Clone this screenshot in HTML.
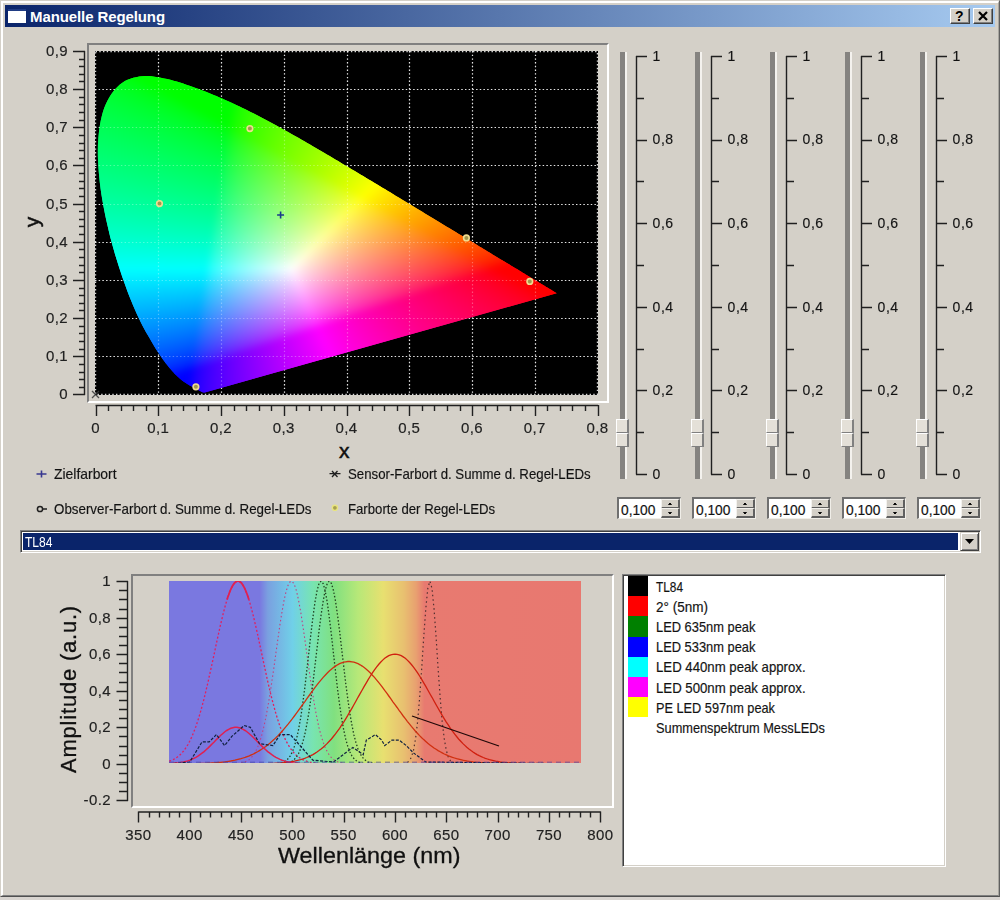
<!DOCTYPE html><html><head><meta charset="utf-8"><style>
html,body{margin:0;padding:0}
body{width:1000px;height:900px;background:#d4d0c8;position:relative;overflow:hidden;font-family:"Liberation Sans", sans-serif;color:#000}
.abs{position:absolute}
.t{position:absolute;white-space:nowrap;line-height:1}
svg{position:absolute;overflow:visible}
</style></head><body>

<div class="abs" style="left:0;top:0;width:1000px;height:897px;box-sizing:border-box;border-left:1px solid #d4d0c8;border-top:1px solid #d4d0c8;border-right:1px solid #606060;border-bottom:1px solid #505050"></div>
<div class="abs" style="left:1px;top:1px;width:998px;height:895px;box-sizing:border-box;border-left:2px solid #fff;border-top:2px solid #fff;border-right:1px solid #a8a6a0;border-bottom:1px solid #808080"></div>
<div class="abs" style="left:0;top:897px;width:1000px;height:3px;background:#d8d4d0"></div>
<div class="abs" style="left:5px;top:5px;width:990px;height:22px;background:linear-gradient(to right,#0a246a 0%,#a6caf0 100%)"></div>
<div class="abs" style="left:8px;top:9px;width:18px;height:14px;background:#fff;border-top:2px solid #203c84;box-sizing:border-box"></div>
<div class="t" style="left:30px;top:9px;font-size:15px;font-weight:bold;color:#fff;letter-spacing:-0.099px">Manuelle Regelung</div>
<div class="abs" style="left:950px;top:8px;width:20px;height:16px;box-sizing:border-box;background:#d4d0c8;border-top:1px solid #fff;border-left:1px solid #fff;border-right:1px solid #404040;border-bottom:1px solid #404040;box-shadow:inset -1px -1px 0 #808080"></div>
<div class="abs" style="left:973px;top:8px;width:20px;height:16px;box-sizing:border-box;background:#d4d0c8;border-top:1px solid #fff;border-left:1px solid #fff;border-right:1px solid #404040;border-bottom:1px solid #404040;box-shadow:inset -1px -1px 0 #808080"></div>
<div class="t" style="left:955px;top:9px;font-size:14px;font-weight:bold">?</div>
<svg style="left:973px;top:8px" width="20" height="16"><path d="M6 4 L14 12 M14 4 L6 12" stroke="#000" stroke-width="2.2"/></svg>
<div class="abs" style="left:87px;top:43px;width:522px;height:360px;box-sizing:border-box;border-top:2px solid #808080;border-left:2px solid #808080;border-right:2px solid #fff;border-bottom:2px solid #fff"></div>
<div class="abs" style="left:95px;top:51px;width:503px;height:344px;background:#000"></div>
<svg style="left:95px;top:51px" width="503" height="344"><path d="M63.5 0 V344 M126.5 0 V344 M189.5 0 V344 M252.5 0 V344 M314.5 0 V344 M377.5 0 V344 M440.5 0 V344 M0 305.5 H503 M0 267.5 H503 M0 229.5 H503 M0 191.5 H503 M0 153.5 H503 M0 114.5 H503 M0 76.5 H503 M0 38.5 H503" stroke="#fff" stroke-width="1.2" stroke-dasharray="1.4 2.3" opacity="0.85"/><rect x="0.6" y="0.6" width="501.8" height="342.8" fill="none" stroke="#fff" stroke-width="1.2" stroke-dasharray="1.4 2.3" opacity="0.85"/></svg>
<svg style="left:95px;top:51px" width="503" height="344"><defs><clipPath id="cl"><path d="M109.8,341.5 L109.7,341.5 L109.7,341.5 L109.6,341.5 L109.5,341.5 L109.5,341.5 L109.4,341.6 L109.3,341.6 L109.3,341.6 L109.2,341.6 L109.2,341.6 L109.1,341.6 L109.1,341.6 L109.0,341.6 L109.0,341.6 L108.9,341.6 L108.8,341.6 L108.7,341.6 L108.7,341.6 L108.6,341.5 L108.5,341.5 L108.4,341.5 L108.3,341.5 L108.2,341.5 L108.1,341.5 L108.0,341.4 L107.9,341.4 L107.8,341.4 L107.7,341.3 L107.7,341.3 L107.6,341.3 L107.5,341.2 L107.4,341.2 L107.3,341.1 L107.2,341.1 L107.1,341.1 L107.0,341.0 L106.9,340.9 L106.8,340.9 L106.6,340.8 L106.5,340.8 L106.4,340.7 L106.2,340.6 L106.1,340.6 L105.9,340.5 L105.8,340.4 L105.6,340.3 L105.4,340.2 L105.2,340.1 L105.1,340.0 L104.9,339.9 L104.7,339.8 L104.5,339.7 L104.3,339.6 L104.1,339.5 L103.9,339.4 L103.7,339.2 L103.4,339.1 L103.2,339.0 L103.0,338.9 L102.7,338.7 L102.5,338.6 L102.2,338.4 L101.9,338.3 L101.6,338.1 L101.3,338.0 L101.0,337.8 L100.6,337.6 L100.3,337.4 L99.9,337.3 L99.6,337.1 L99.2,336.9 L98.8,336.6 L98.4,336.4 L98.0,336.2 L97.6,336.0 L97.1,335.8 L96.7,335.5 L96.2,335.3 L95.8,335.0 L95.3,334.7 L94.8,334.4 L94.3,334.2 L93.7,333.8 L93.2,333.5 L92.6,333.2 L92.1,332.8 L91.5,332.5 L90.9,332.1 L90.3,331.7 L89.6,331.2 L89.0,330.8 L88.4,330.4 L87.7,329.9 L87.0,329.4 L86.3,328.8 L85.5,328.2 L84.7,327.5 L83.9,326.8 L83.1,326.0 L82.2,325.2 L81.3,324.3 L80.4,323.4 L79.4,322.4 L78.4,321.3 L77.4,320.2 L76.3,319.0 L75.2,317.8 L74.1,316.5 L73.0,315.1 L71.8,313.6 L70.5,312.0 L69.3,310.3 L68.0,308.5 L66.6,306.5 L65.3,304.6 L63.9,302.4 L62.4,300.2 L60.9,297.9 L59.4,295.4 L57.8,292.8 L56.2,290.0 L54.5,287.1 L52.7,284.1 L50.9,280.9 L49.1,277.6 L47.3,274.2 L45.4,270.6 L43.6,266.8 L41.8,262.9 L40.0,258.7 L38.1,254.4 L36.3,250.0 L34.4,245.4 L32.6,240.7 L30.8,235.8 L29.0,230.8 L27.2,225.7 L25.4,220.3 L23.6,214.8 L21.8,209.1 L20.1,203.4 L18.4,197.6 L16.8,191.7 L15.2,185.9 L13.8,180.0 L12.4,174.1 L11.0,168.0 L9.8,161.9 L8.6,155.8 L7.5,149.8 L6.5,143.8 L5.6,137.9 L4.9,132.2 L4.3,126.4 L3.7,120.7 L3.3,115.0 L3.0,109.4 L2.8,104.0 L2.8,98.7 L2.9,93.5 L3.2,88.5 L3.7,83.6 L4.2,78.7 L4.9,74.0 L5.8,69.5 L6.8,65.1 L7.9,61.0 L9.2,57.1 L10.7,53.5 L12.3,50.0 L14.1,46.7 L16.1,43.6 L18.1,40.7 L20.3,38.1 L22.6,35.7 L24.9,33.5 L27.4,31.7 L29.9,30.1 L32.6,28.8 L35.4,27.7 L38.3,26.8 L41.2,26.2 L44.2,25.6 L47.1,25.2 L50.1,25.0 L53.2,25.0 L56.3,25.3 L59.5,25.7 L62.6,26.2 L65.8,26.8 L69.0,27.5 L72.2,28.1 L75.3,28.8 L78.5,29.7 L81.7,30.6 L84.9,31.6 L88.1,32.6 L91.3,33.7 L94.5,34.8 L97.6,35.9 L100.7,36.9 L103.7,38.1 L106.7,39.2 L109.7,40.3 L112.7,41.5 L115.7,42.7 L118.6,43.9 L121.6,45.1 L124.5,46.4 L127.4,47.6 L130.3,48.9 L133.2,50.2 L136.0,51.5 L138.9,52.9 L141.7,54.2 L144.6,55.6 L147.5,56.9 L150.3,58.3 L153.2,59.7 L156.0,61.2 L158.8,62.6 L161.7,64.1 L164.5,65.5 L167.3,67.0 L170.1,68.5 L173.0,70.0 L175.8,71.5 L178.6,73.0 L181.4,74.6 L184.2,76.1 L187.0,77.7 L189.8,79.2 L192.6,80.8 L195.4,82.4 L198.2,83.9 L201.0,85.5 L203.8,87.1 L206.6,88.7 L209.4,90.3 L212.2,92.0 L215.0,93.6 L217.8,95.2 L220.6,96.9 L223.4,98.5 L226.2,100.1 L229.0,101.8 L231.9,103.4 L234.7,105.1 L237.5,106.7 L240.3,108.4 L243.1,110.1 L245.8,111.7 L248.6,113.4 L251.4,115.1 L254.2,116.7 L257.0,118.4 L259.8,120.1 L262.6,121.7 L265.4,123.4 L268.1,125.1 L270.9,126.7 L273.7,128.4 L276.5,130.1 L279.2,131.7 L282.0,133.4 L284.7,135.0 L287.4,136.7 L290.2,138.3 L292.9,140.0 L295.6,141.6 L298.3,143.3 L301.0,144.9 L303.7,146.5 L306.3,148.1 L309.0,149.7 L311.7,151.4 L314.3,153.0 L316.9,154.6 L319.5,156.1 L322.1,157.7 L324.7,159.3 L327.3,160.8 L329.9,162.4 L332.4,163.9 L334.9,165.5 L337.5,167.0 L339.9,168.5 L342.4,170.0 L344.9,171.5 L347.3,173.0 L349.7,174.4 L352.1,175.9 L354.5,177.3 L356.9,178.7 L359.2,180.1 L361.5,181.5 L363.8,182.9 L366.0,184.3 L368.2,185.6 L370.4,187.0 L372.6,188.3 L374.7,189.6 L376.8,190.8 L378.9,192.1 L380.9,193.3 L382.9,194.5 L384.8,195.7 L386.7,196.8 L388.6,198.0 L390.4,199.1 L392.2,200.2 L394.0,201.3 L395.8,202.3 L397.5,203.4 L399.2,204.4 L400.9,205.4 L402.6,206.4 L404.2,207.4 L405.8,208.4 L407.3,209.3 L408.8,210.2 L410.3,211.1 L411.7,212.0 L413.1,212.8 L414.5,213.6 L415.8,214.4 L417.1,215.2 L418.4,215.9 L419.6,216.7 L420.8,217.4 L422.0,218.1 L423.1,218.8 L424.2,219.5 L425.3,220.1 L426.3,220.8 L427.3,221.4 L428.3,222.0 L429.3,222.6 L430.2,223.2 L431.1,223.7 L432.0,224.2 L432.8,224.8 L433.7,225.3 L434.5,225.8 L435.3,226.2 L436.0,226.7 L436.8,227.1 L437.5,227.6 L438.2,228.0 L438.9,228.4 L439.5,228.8 L440.2,229.2 L440.8,229.6 L441.4,229.9 L442.0,230.3 L442.6,230.6 L443.2,231.0 L443.7,231.3 L444.2,231.7 L444.8,232.0 L445.3,232.3 L445.8,232.6 L446.3,232.9 L446.8,233.2 L447.3,233.5 L447.7,233.8 L448.2,234.0 L448.6,234.3 L449.0,234.6 L449.4,234.8 L449.8,235.0 L450.1,235.2 L450.5,235.5 L450.9,235.7 L451.3,235.9 L451.7,236.2 L452.2,236.5 L452.8,236.8 L453.4,237.2 L454.0,237.5 L454.6,237.9 L455.1,238.2 L455.7,238.6 L456.1,238.8 L456.5,239.1 L456.9,239.3 L457.2,239.5 L457.5,239.7 L457.8,239.9 L458.1,240.0 L458.4,240.2 L458.6,240.4 L458.9,240.5 L459.2,240.7 L459.5,240.9 L459.8,241.1 L460.1,241.2 L460.3,241.4 L460.6,241.5 L460.8,241.7 L461.0,241.8 L461.1,241.9 L461.2,241.9 L461.3,242.0 L461.4,242.0 L461.5,242.1 L461.5,242.1 L461.6,242.2Z"/></clipPath><filter id="bl" x="0" y="0" width="1" height="1"><feGaussianBlur stdDeviation="5"/></filter></defs><g clip-path="url(#cl)"><g filter="url(#bl)"><rect x="-1" y="-1" width="12" height="12" fill="#00ff01"/><rect x="9" y="-1" width="12" height="12" fill="#00ff00"/><rect x="19" y="-1" width="12" height="12" fill="#00ff00"/><rect x="29" y="-1" width="12" height="12" fill="#00ff00"/><rect x="39" y="-1" width="12" height="12" fill="#00ff00"/><rect x="49" y="-1" width="12" height="12" fill="#00ff00"/><rect x="59" y="-1" width="12" height="12" fill="#00ff00"/><rect x="69" y="-1" width="12" height="12" fill="#00ff00"/><rect x="79" y="-1" width="12" height="12" fill="#00ff00"/><rect x="89" y="-1" width="12" height="12" fill="#00ff00"/><rect x="99" y="-1" width="12" height="12" fill="#00ff00"/><rect x="109" y="-1" width="12" height="12" fill="#00ff00"/><rect x="119" y="-1" width="12" height="12" fill="#00ff00"/><rect x="129" y="-1" width="12" height="12" fill="#00ff00"/><rect x="139" y="-1" width="12" height="12" fill="#00ff00"/><rect x="149" y="-1" width="12" height="12" fill="#00ff00"/><rect x="159" y="-1" width="12" height="12" fill="#16ff00"/><rect x="169" y="-1" width="12" height="12" fill="#26ff00"/><rect x="179" y="-1" width="12" height="12" fill="#32ff00"/><rect x="189" y="-1" width="12" height="12" fill="#3eff00"/><rect x="199" y="-1" width="12" height="12" fill="#48ff00"/><rect x="209" y="-1" width="12" height="12" fill="#51ff00"/><rect x="219" y="-1" width="12" height="12" fill="#5aff00"/><rect x="229" y="-1" width="12" height="12" fill="#63ff00"/><rect x="239" y="-1" width="12" height="12" fill="#6bff00"/><rect x="249" y="-1" width="12" height="12" fill="#73ff00"/><rect x="259" y="-1" width="12" height="12" fill="#7bff00"/><rect x="269" y="-1" width="12" height="12" fill="#82ff00"/><rect x="279" y="-1" width="12" height="12" fill="#89ff00"/><rect x="289" y="-1" width="12" height="12" fill="#91ff00"/><rect x="299" y="-1" width="12" height="12" fill="#98ff00"/><rect x="309" y="-1" width="12" height="12" fill="#9fff00"/><rect x="319" y="-1" width="12" height="12" fill="#a6ff00"/><rect x="329" y="-1" width="12" height="12" fill="#adff00"/><rect x="339" y="-1" width="12" height="12" fill="#b4ff00"/><rect x="349" y="-1" width="12" height="12" fill="#bbff00"/><rect x="359" y="-1" width="12" height="12" fill="#c2ff00"/><rect x="369" y="-1" width="12" height="12" fill="#c9ff00"/><rect x="379" y="-1" width="12" height="12" fill="#d0ff00"/><rect x="389" y="-1" width="12" height="12" fill="#d7ff00"/><rect x="399" y="-1" width="12" height="12" fill="#deff00"/><rect x="409" y="-1" width="12" height="12" fill="#e5ff00"/><rect x="419" y="-1" width="12" height="12" fill="#ecff00"/><rect x="429" y="-1" width="12" height="12" fill="#f3ff00"/><rect x="439" y="-1" width="12" height="12" fill="#faff00"/><rect x="449" y="-1" width="12" height="12" fill="#fffd00"/><rect x="459" y="-1" width="12" height="12" fill="#fff600"/><rect x="469" y="-1" width="12" height="12" fill="#ffef00"/><rect x="479" y="-1" width="12" height="12" fill="#ffe900"/><rect x="489" y="-1" width="12" height="12" fill="#ffe200"/><rect x="499" y="-1" width="12" height="12" fill="#ffdd00"/><rect x="-1" y="9" width="12" height="12" fill="#00ff12"/><rect x="9" y="9" width="12" height="12" fill="#00ff09"/><rect x="19" y="9" width="12" height="12" fill="#00ff00"/><rect x="29" y="9" width="12" height="12" fill="#00ff00"/><rect x="39" y="9" width="12" height="12" fill="#00ff00"/><rect x="49" y="9" width="12" height="12" fill="#00ff00"/><rect x="59" y="9" width="12" height="12" fill="#00ff00"/><rect x="69" y="9" width="12" height="12" fill="#00ff00"/><rect x="79" y="9" width="12" height="12" fill="#00ff00"/><rect x="89" y="9" width="12" height="12" fill="#00ff00"/><rect x="99" y="9" width="12" height="12" fill="#00ff00"/><rect x="109" y="9" width="12" height="12" fill="#00ff00"/><rect x="119" y="9" width="12" height="12" fill="#00ff00"/><rect x="129" y="9" width="12" height="12" fill="#00ff00"/><rect x="139" y="9" width="12" height="12" fill="#00ff00"/><rect x="149" y="9" width="12" height="12" fill="#0aff00"/><rect x="159" y="9" width="12" height="12" fill="#1eff00"/><rect x="169" y="9" width="12" height="12" fill="#2dff00"/><rect x="179" y="9" width="12" height="12" fill="#39ff00"/><rect x="189" y="9" width="12" height="12" fill="#44ff00"/><rect x="199" y="9" width="12" height="12" fill="#4eff00"/><rect x="209" y="9" width="12" height="12" fill="#57ff00"/><rect x="219" y="9" width="12" height="12" fill="#60ff00"/><rect x="229" y="9" width="12" height="12" fill="#69ff00"/><rect x="239" y="9" width="12" height="12" fill="#71ff00"/><rect x="249" y="9" width="12" height="12" fill="#79ff00"/><rect x="259" y="9" width="12" height="12" fill="#81ff00"/><rect x="269" y="9" width="12" height="12" fill="#88ff00"/><rect x="279" y="9" width="12" height="12" fill="#90ff00"/><rect x="289" y="9" width="12" height="12" fill="#97ff00"/><rect x="299" y="9" width="12" height="12" fill="#9eff00"/><rect x="309" y="9" width="12" height="12" fill="#a6ff00"/><rect x="319" y="9" width="12" height="12" fill="#adff00"/><rect x="329" y="9" width="12" height="12" fill="#b4ff00"/><rect x="339" y="9" width="12" height="12" fill="#bbff00"/><rect x="349" y="9" width="12" height="12" fill="#c2ff00"/><rect x="359" y="9" width="12" height="12" fill="#caff00"/><rect x="369" y="9" width="12" height="12" fill="#d1ff00"/><rect x="379" y="9" width="12" height="12" fill="#d8ff00"/><rect x="389" y="9" width="12" height="12" fill="#dfff00"/><rect x="399" y="9" width="12" height="12" fill="#e6ff00"/><rect x="409" y="9" width="12" height="12" fill="#eeff00"/><rect x="419" y="9" width="12" height="12" fill="#f5ff00"/><rect x="429" y="9" width="12" height="12" fill="#fcff00"/><rect x="439" y="9" width="12" height="12" fill="#fffa00"/><rect x="449" y="9" width="12" height="12" fill="#fff300"/><rect x="459" y="9" width="12" height="12" fill="#ffec00"/><rect x="469" y="9" width="12" height="12" fill="#ffe600"/><rect x="479" y="9" width="12" height="12" fill="#ffe000"/><rect x="489" y="9" width="12" height="12" fill="#ffda00"/><rect x="499" y="9" width="12" height="12" fill="#ffd400"/><rect x="-1" y="19" width="12" height="12" fill="#00ff21"/><rect x="9" y="19" width="12" height="12" fill="#00ff1a"/><rect x="19" y="19" width="12" height="12" fill="#00ff12"/><rect x="29" y="19" width="12" height="12" fill="#00ff08"/><rect x="39" y="19" width="12" height="12" fill="#00ff00"/><rect x="49" y="19" width="12" height="12" fill="#00ff00"/><rect x="59" y="19" width="12" height="12" fill="#00ff00"/><rect x="69" y="19" width="12" height="12" fill="#00ff00"/><rect x="79" y="19" width="12" height="12" fill="#00ff00"/><rect x="89" y="19" width="12" height="12" fill="#00ff00"/><rect x="99" y="19" width="12" height="12" fill="#00ff00"/><rect x="109" y="19" width="12" height="12" fill="#00ff00"/><rect x="119" y="19" width="12" height="12" fill="#00ff00"/><rect x="129" y="19" width="12" height="12" fill="#00ff00"/><rect x="139" y="19" width="12" height="12" fill="#00ff00"/><rect x="149" y="19" width="12" height="12" fill="#15ff00"/><rect x="159" y="19" width="12" height="12" fill="#26ff00"/><rect x="169" y="19" width="12" height="12" fill="#34ff00"/><rect x="179" y="19" width="12" height="12" fill="#3fff00"/><rect x="189" y="19" width="12" height="12" fill="#4aff00"/><rect x="199" y="19" width="12" height="12" fill="#54ff00"/><rect x="209" y="19" width="12" height="12" fill="#5dff00"/><rect x="219" y="19" width="12" height="12" fill="#66ff00"/><rect x="229" y="19" width="12" height="12" fill="#6fff00"/><rect x="239" y="19" width="12" height="12" fill="#77ff00"/><rect x="249" y="19" width="12" height="12" fill="#7fff00"/><rect x="259" y="19" width="12" height="12" fill="#87ff00"/><rect x="269" y="19" width="12" height="12" fill="#8fff00"/><rect x="279" y="19" width="12" height="12" fill="#96ff00"/><rect x="289" y="19" width="12" height="12" fill="#9eff00"/><rect x="299" y="19" width="12" height="12" fill="#a5ff00"/><rect x="309" y="19" width="12" height="12" fill="#adff00"/><rect x="319" y="19" width="12" height="12" fill="#b4ff00"/><rect x="329" y="19" width="12" height="12" fill="#bcff00"/><rect x="339" y="19" width="12" height="12" fill="#c3ff00"/><rect x="349" y="19" width="12" height="12" fill="#caff00"/><rect x="359" y="19" width="12" height="12" fill="#d2ff00"/><rect x="369" y="19" width="12" height="12" fill="#d9ff00"/><rect x="379" y="19" width="12" height="12" fill="#e1ff00"/><rect x="389" y="19" width="12" height="12" fill="#e8ff00"/><rect x="399" y="19" width="12" height="12" fill="#f0ff00"/><rect x="409" y="19" width="12" height="12" fill="#f7ff00"/><rect x="419" y="19" width="12" height="12" fill="#ffff00"/><rect x="429" y="19" width="12" height="12" fill="#fff800"/><rect x="439" y="19" width="12" height="12" fill="#fff000"/><rect x="449" y="19" width="12" height="12" fill="#ffea00"/><rect x="459" y="19" width="12" height="12" fill="#ffe300"/><rect x="469" y="19" width="12" height="12" fill="#ffdd00"/><rect x="479" y="19" width="12" height="12" fill="#ffd700"/><rect x="489" y="19" width="12" height="12" fill="#ffd100"/><rect x="499" y="19" width="12" height="12" fill="#ffcb00"/><rect x="-1" y="29" width="12" height="12" fill="#00ff2d"/><rect x="9" y="29" width="12" height="12" fill="#00ff27"/><rect x="19" y="29" width="12" height="12" fill="#00ff21"/><rect x="29" y="29" width="12" height="12" fill="#00ff1a"/><rect x="39" y="29" width="12" height="12" fill="#00ff12"/><rect x="49" y="29" width="12" height="12" fill="#00ff07"/><rect x="59" y="29" width="12" height="12" fill="#00ff00"/><rect x="69" y="29" width="12" height="12" fill="#00ff00"/><rect x="79" y="29" width="12" height="12" fill="#00ff00"/><rect x="89" y="29" width="12" height="12" fill="#00ff00"/><rect x="99" y="29" width="12" height="12" fill="#00ff00"/><rect x="109" y="29" width="12" height="12" fill="#00ff00"/><rect x="119" y="29" width="12" height="12" fill="#00ff00"/><rect x="129" y="29" width="12" height="12" fill="#00ff00"/><rect x="139" y="29" width="12" height="12" fill="#08ff00"/><rect x="149" y="29" width="12" height="12" fill="#1eff00"/><rect x="159" y="29" width="12" height="12" fill="#2eff00"/><rect x="169" y="29" width="12" height="12" fill="#3aff00"/><rect x="179" y="29" width="12" height="12" fill="#46ff00"/><rect x="189" y="29" width="12" height="12" fill="#50ff00"/><rect x="199" y="29" width="12" height="12" fill="#5aff00"/><rect x="209" y="29" width="12" height="12" fill="#63ff00"/><rect x="219" y="29" width="12" height="12" fill="#6cff00"/><rect x="229" y="29" width="12" height="12" fill="#75ff00"/><rect x="239" y="29" width="12" height="12" fill="#7dff00"/><rect x="249" y="29" width="12" height="12" fill="#86ff00"/><rect x="259" y="29" width="12" height="12" fill="#8eff00"/><rect x="269" y="29" width="12" height="12" fill="#96ff00"/><rect x="279" y="29" width="12" height="12" fill="#9dff00"/><rect x="289" y="29" width="12" height="12" fill="#a5ff00"/><rect x="299" y="29" width="12" height="12" fill="#adff00"/><rect x="309" y="29" width="12" height="12" fill="#b4ff00"/><rect x="319" y="29" width="12" height="12" fill="#bcff00"/><rect x="329" y="29" width="12" height="12" fill="#c4ff00"/><rect x="339" y="29" width="12" height="12" fill="#cbff00"/><rect x="349" y="29" width="12" height="12" fill="#d3ff00"/><rect x="359" y="29" width="12" height="12" fill="#dbff00"/><rect x="369" y="29" width="12" height="12" fill="#e2ff00"/><rect x="379" y="29" width="12" height="12" fill="#eaff00"/><rect x="389" y="29" width="12" height="12" fill="#f2ff00"/><rect x="399" y="29" width="12" height="12" fill="#faff00"/><rect x="409" y="29" width="12" height="12" fill="#fffd00"/><rect x="419" y="29" width="12" height="12" fill="#fff500"/><rect x="429" y="29" width="12" height="12" fill="#ffee00"/><rect x="439" y="29" width="12" height="12" fill="#ffe700"/><rect x="449" y="29" width="12" height="12" fill="#ffe000"/><rect x="459" y="29" width="12" height="12" fill="#ffda00"/><rect x="469" y="29" width="12" height="12" fill="#ffd300"/><rect x="479" y="29" width="12" height="12" fill="#ffcd00"/><rect x="489" y="29" width="12" height="12" fill="#ffc800"/><rect x="499" y="29" width="12" height="12" fill="#ffc200"/><rect x="-1" y="39" width="12" height="12" fill="#00ff38"/><rect x="9" y="39" width="12" height="12" fill="#00ff33"/><rect x="19" y="39" width="12" height="12" fill="#00ff2e"/><rect x="29" y="39" width="12" height="12" fill="#00ff28"/><rect x="39" y="39" width="12" height="12" fill="#00ff22"/><rect x="49" y="39" width="12" height="12" fill="#00ff1a"/><rect x="59" y="39" width="12" height="12" fill="#00ff11"/><rect x="69" y="39" width="12" height="12" fill="#00ff05"/><rect x="79" y="39" width="12" height="12" fill="#00ff00"/><rect x="89" y="39" width="12" height="12" fill="#00ff00"/><rect x="99" y="39" width="12" height="12" fill="#00ff00"/><rect x="109" y="39" width="12" height="12" fill="#00ff00"/><rect x="119" y="39" width="12" height="12" fill="#00ff00"/><rect x="129" y="39" width="12" height="12" fill="#00ff00"/><rect x="139" y="39" width="12" height="12" fill="#14ff00"/><rect x="149" y="39" width="12" height="12" fill="#27ff00"/><rect x="159" y="39" width="12" height="12" fill="#35ff00"/><rect x="169" y="39" width="12" height="12" fill="#41ff00"/><rect x="179" y="39" width="12" height="12" fill="#4cff00"/><rect x="189" y="39" width="12" height="12" fill="#57ff00"/><rect x="199" y="39" width="12" height="12" fill="#61ff00"/><rect x="209" y="39" width="12" height="12" fill="#6aff00"/><rect x="219" y="39" width="12" height="12" fill="#73ff00"/><rect x="229" y="39" width="12" height="12" fill="#7cff00"/><rect x="239" y="39" width="12" height="12" fill="#84ff00"/><rect x="249" y="39" width="12" height="12" fill="#8cff00"/><rect x="259" y="39" width="12" height="12" fill="#95ff00"/><rect x="269" y="39" width="12" height="12" fill="#9dff00"/><rect x="279" y="39" width="12" height="12" fill="#a5ff00"/><rect x="289" y="39" width="12" height="12" fill="#adff00"/><rect x="299" y="39" width="12" height="12" fill="#b5ff00"/><rect x="309" y="39" width="12" height="12" fill="#bcff00"/><rect x="319" y="39" width="12" height="12" fill="#c4ff00"/><rect x="329" y="39" width="12" height="12" fill="#ccff00"/><rect x="339" y="39" width="12" height="12" fill="#d4ff00"/><rect x="349" y="39" width="12" height="12" fill="#dcff00"/><rect x="359" y="39" width="12" height="12" fill="#e4ff00"/><rect x="369" y="39" width="12" height="12" fill="#ecff00"/><rect x="379" y="39" width="12" height="12" fill="#f4ff00"/><rect x="389" y="39" width="12" height="12" fill="#fcff00"/><rect x="399" y="39" width="12" height="12" fill="#fffa00"/><rect x="409" y="39" width="12" height="12" fill="#fff200"/><rect x="419" y="39" width="12" height="12" fill="#ffeb00"/><rect x="429" y="39" width="12" height="12" fill="#ffe400"/><rect x="439" y="39" width="12" height="12" fill="#ffdd00"/><rect x="449" y="39" width="12" height="12" fill="#ffd600"/><rect x="459" y="39" width="12" height="12" fill="#ffd000"/><rect x="469" y="39" width="12" height="12" fill="#ffca00"/><rect x="479" y="39" width="12" height="12" fill="#ffc400"/><rect x="489" y="39" width="12" height="12" fill="#ffbf00"/><rect x="499" y="39" width="12" height="12" fill="#ffb900"/><rect x="-1" y="49" width="12" height="12" fill="#00ff42"/><rect x="9" y="49" width="12" height="12" fill="#00ff3e"/><rect x="19" y="49" width="12" height="12" fill="#00ff39"/><rect x="29" y="49" width="12" height="12" fill="#00ff34"/><rect x="39" y="49" width="12" height="12" fill="#00ff2f"/><rect x="49" y="49" width="12" height="12" fill="#00ff29"/><rect x="59" y="49" width="12" height="12" fill="#00ff22"/><rect x="69" y="49" width="12" height="12" fill="#00ff1a"/><rect x="79" y="49" width="12" height="12" fill="#00ff11"/><rect x="89" y="49" width="12" height="12" fill="#00ff04"/><rect x="99" y="49" width="12" height="12" fill="#00ff00"/><rect x="109" y="49" width="12" height="12" fill="#00ff00"/><rect x="119" y="49" width="12" height="12" fill="#00ff00"/><rect x="129" y="49" width="12" height="12" fill="#00ff00"/><rect x="139" y="49" width="12" height="12" fill="#1cff00"/><rect x="149" y="49" width="12" height="12" fill="#2fff00"/><rect x="159" y="49" width="12" height="12" fill="#3cff00"/><rect x="169" y="49" width="12" height="12" fill="#48ff00"/><rect x="179" y="49" width="12" height="12" fill="#53ff00"/><rect x="189" y="49" width="12" height="12" fill="#5dff00"/><rect x="199" y="49" width="12" height="12" fill="#67ff00"/><rect x="209" y="49" width="12" height="12" fill="#71ff00"/><rect x="219" y="49" width="12" height="12" fill="#7aff00"/><rect x="229" y="49" width="12" height="12" fill="#83ff00"/><rect x="239" y="49" width="12" height="12" fill="#8bff00"/><rect x="249" y="49" width="12" height="12" fill="#94ff00"/><rect x="259" y="49" width="12" height="12" fill="#9cff00"/><rect x="269" y="49" width="12" height="12" fill="#a4ff00"/><rect x="279" y="49" width="12" height="12" fill="#adff00"/><rect x="289" y="49" width="12" height="12" fill="#b5ff00"/><rect x="299" y="49" width="12" height="12" fill="#bdff00"/><rect x="309" y="49" width="12" height="12" fill="#c5ff00"/><rect x="319" y="49" width="12" height="12" fill="#cdff00"/><rect x="329" y="49" width="12" height="12" fill="#d5ff00"/><rect x="339" y="49" width="12" height="12" fill="#deff00"/><rect x="349" y="49" width="12" height="12" fill="#e6ff00"/><rect x="359" y="49" width="12" height="12" fill="#eeff00"/><rect x="369" y="49" width="12" height="12" fill="#f6ff00"/><rect x="379" y="49" width="12" height="12" fill="#ffff00"/><rect x="389" y="49" width="12" height="12" fill="#fff700"/><rect x="399" y="49" width="12" height="12" fill="#ffef00"/><rect x="409" y="49" width="12" height="12" fill="#ffe700"/><rect x="419" y="49" width="12" height="12" fill="#ffe000"/><rect x="429" y="49" width="12" height="12" fill="#ffd900"/><rect x="439" y="49" width="12" height="12" fill="#ffd300"/><rect x="449" y="49" width="12" height="12" fill="#ffcc00"/><rect x="459" y="49" width="12" height="12" fill="#ffc600"/><rect x="469" y="49" width="12" height="12" fill="#ffc100"/><rect x="479" y="49" width="12" height="12" fill="#ffbb00"/><rect x="489" y="49" width="12" height="12" fill="#ffb500"/><rect x="499" y="49" width="12" height="12" fill="#ffb000"/><rect x="-1" y="59" width="12" height="12" fill="#00ff4c"/><rect x="9" y="59" width="12" height="12" fill="#00ff48"/><rect x="19" y="59" width="12" height="12" fill="#00ff44"/><rect x="29" y="59" width="12" height="12" fill="#00ff3f"/><rect x="39" y="59" width="12" height="12" fill="#00ff3b"/><rect x="49" y="59" width="12" height="12" fill="#00ff36"/><rect x="59" y="59" width="12" height="12" fill="#00ff30"/><rect x="69" y="59" width="12" height="12" fill="#00ff2a"/><rect x="79" y="59" width="12" height="12" fill="#00ff23"/><rect x="89" y="59" width="12" height="12" fill="#00ff1b"/><rect x="99" y="59" width="12" height="12" fill="#00ff10"/><rect x="109" y="59" width="12" height="12" fill="#00ff03"/><rect x="119" y="59" width="12" height="12" fill="#00ff00"/><rect x="129" y="59" width="12" height="12" fill="#04ff00"/><rect x="139" y="59" width="12" height="12" fill="#20ff00"/><rect x="149" y="59" width="12" height="12" fill="#33ff00"/><rect x="159" y="59" width="12" height="12" fill="#42ff00"/><rect x="169" y="59" width="12" height="12" fill="#4fff00"/><rect x="179" y="59" width="12" height="12" fill="#5aff00"/><rect x="189" y="59" width="12" height="12" fill="#64ff00"/><rect x="199" y="59" width="12" height="12" fill="#6eff00"/><rect x="209" y="59" width="12" height="12" fill="#78ff00"/><rect x="219" y="59" width="12" height="12" fill="#81ff00"/><rect x="229" y="59" width="12" height="12" fill="#8aff00"/><rect x="239" y="59" width="12" height="12" fill="#93ff00"/><rect x="249" y="59" width="12" height="12" fill="#9bff00"/><rect x="259" y="59" width="12" height="12" fill="#a4ff00"/><rect x="269" y="59" width="12" height="12" fill="#acff00"/><rect x="279" y="59" width="12" height="12" fill="#b5ff00"/><rect x="289" y="59" width="12" height="12" fill="#bdff00"/><rect x="299" y="59" width="12" height="12" fill="#c6ff00"/><rect x="309" y="59" width="12" height="12" fill="#ceff00"/><rect x="319" y="59" width="12" height="12" fill="#d7ff00"/><rect x="329" y="59" width="12" height="12" fill="#dfff00"/><rect x="339" y="59" width="12" height="12" fill="#e8ff00"/><rect x="349" y="59" width="12" height="12" fill="#f0ff00"/><rect x="359" y="59" width="12" height="12" fill="#f9ff00"/><rect x="369" y="59" width="12" height="12" fill="#fffc00"/><rect x="379" y="59" width="12" height="12" fill="#fff400"/><rect x="389" y="59" width="12" height="12" fill="#ffec00"/><rect x="399" y="59" width="12" height="12" fill="#ffe400"/><rect x="409" y="59" width="12" height="12" fill="#ffdd00"/><rect x="419" y="59" width="12" height="12" fill="#ffd600"/><rect x="429" y="59" width="12" height="12" fill="#ffcf00"/><rect x="439" y="59" width="12" height="12" fill="#ffc900"/><rect x="449" y="59" width="12" height="12" fill="#ffc300"/><rect x="459" y="59" width="12" height="12" fill="#ffbd00"/><rect x="469" y="59" width="12" height="12" fill="#ffb700"/><rect x="479" y="59" width="12" height="12" fill="#ffb100"/><rect x="489" y="59" width="12" height="12" fill="#ffac00"/><rect x="499" y="59" width="12" height="12" fill="#ffa700"/><rect x="-1" y="69" width="12" height="12" fill="#00ff55"/><rect x="9" y="69" width="12" height="12" fill="#00ff52"/><rect x="19" y="69" width="12" height="12" fill="#00ff4e"/><rect x="29" y="69" width="12" height="12" fill="#00ff4a"/><rect x="39" y="69" width="12" height="12" fill="#00ff46"/><rect x="49" y="69" width="12" height="12" fill="#00ff41"/><rect x="59" y="69" width="12" height="12" fill="#00ff3d"/><rect x="69" y="69" width="12" height="12" fill="#00ff37"/><rect x="79" y="69" width="12" height="12" fill="#00ff31"/><rect x="89" y="69" width="12" height="12" fill="#00ff2b"/><rect x="99" y="69" width="12" height="12" fill="#00ff23"/><rect x="109" y="69" width="12" height="12" fill="#00ff1b"/><rect x="119" y="69" width="12" height="12" fill="#00ff10"/><rect x="129" y="69" width="12" height="12" fill="#09ff02"/><rect x="139" y="69" width="12" height="12" fill="#24ff00"/><rect x="149" y="69" width="12" height="12" fill="#37ff00"/><rect x="159" y="69" width="12" height="12" fill="#46ff00"/><rect x="169" y="69" width="12" height="12" fill="#54ff00"/><rect x="179" y="69" width="12" height="12" fill="#61ff00"/><rect x="189" y="69" width="12" height="12" fill="#6bff00"/><rect x="199" y="69" width="12" height="12" fill="#75ff00"/><rect x="209" y="69" width="12" height="12" fill="#7fff00"/><rect x="219" y="69" width="12" height="12" fill="#88ff00"/><rect x="229" y="69" width="12" height="12" fill="#92ff00"/><rect x="239" y="69" width="12" height="12" fill="#9bff00"/><rect x="249" y="69" width="12" height="12" fill="#a4ff00"/><rect x="259" y="69" width="12" height="12" fill="#acff00"/><rect x="269" y="69" width="12" height="12" fill="#b5ff00"/><rect x="279" y="69" width="12" height="12" fill="#beff00"/><rect x="289" y="69" width="12" height="12" fill="#c7ff00"/><rect x="299" y="69" width="12" height="12" fill="#cfff00"/><rect x="309" y="69" width="12" height="12" fill="#d8ff00"/><rect x="319" y="69" width="12" height="12" fill="#e1ff00"/><rect x="329" y="69" width="12" height="12" fill="#eaff00"/><rect x="339" y="69" width="12" height="12" fill="#f3ff00"/><rect x="349" y="69" width="12" height="12" fill="#fcff00"/><rect x="359" y="69" width="12" height="12" fill="#fff900"/><rect x="369" y="69" width="12" height="12" fill="#fff100"/><rect x="379" y="69" width="12" height="12" fill="#ffe800"/><rect x="389" y="69" width="12" height="12" fill="#ffe100"/><rect x="399" y="69" width="12" height="12" fill="#ffd900"/><rect x="409" y="69" width="12" height="12" fill="#ffd200"/><rect x="419" y="69" width="12" height="12" fill="#ffcb00"/><rect x="429" y="69" width="12" height="12" fill="#ffc500"/><rect x="439" y="69" width="12" height="12" fill="#ffbf00"/><rect x="449" y="69" width="12" height="12" fill="#ffb900"/><rect x="459" y="69" width="12" height="12" fill="#ffb300"/><rect x="469" y="69" width="12" height="12" fill="#ffad00"/><rect x="479" y="69" width="12" height="12" fill="#ffa800"/><rect x="489" y="69" width="12" height="12" fill="#ffa200"/><rect x="499" y="69" width="12" height="12" fill="#ff9d00"/><rect x="-1" y="79" width="12" height="12" fill="#00ff5f"/><rect x="9" y="79" width="12" height="12" fill="#00ff5c"/><rect x="19" y="79" width="12" height="12" fill="#00ff58"/><rect x="29" y="79" width="12" height="12" fill="#00ff55"/><rect x="39" y="79" width="12" height="12" fill="#00ff51"/><rect x="49" y="79" width="12" height="12" fill="#00ff4d"/><rect x="59" y="79" width="12" height="12" fill="#00ff48"/><rect x="69" y="79" width="12" height="12" fill="#00ff44"/><rect x="79" y="79" width="12" height="12" fill="#00ff3f"/><rect x="89" y="79" width="12" height="12" fill="#00ff39"/><rect x="99" y="79" width="12" height="12" fill="#00ff33"/><rect x="109" y="79" width="12" height="12" fill="#00ff2c"/><rect x="119" y="79" width="12" height="12" fill="#00ff24"/><rect x="129" y="79" width="12" height="12" fill="#0fff1b"/><rect x="139" y="79" width="12" height="12" fill="#29ff0f"/><rect x="149" y="79" width="12" height="12" fill="#3bff00"/><rect x="159" y="79" width="12" height="12" fill="#4bff00"/><rect x="169" y="79" width="12" height="12" fill="#59ff00"/><rect x="179" y="79" width="12" height="12" fill="#66ff00"/><rect x="189" y="79" width="12" height="12" fill="#72ff00"/><rect x="199" y="79" width="12" height="12" fill="#7dff00"/><rect x="209" y="79" width="12" height="12" fill="#87ff00"/><rect x="219" y="79" width="12" height="12" fill="#90ff00"/><rect x="229" y="79" width="12" height="12" fill="#9aff00"/><rect x="239" y="79" width="12" height="12" fill="#a3ff00"/><rect x="249" y="79" width="12" height="12" fill="#acff00"/><rect x="259" y="79" width="12" height="12" fill="#b5ff00"/><rect x="269" y="79" width="12" height="12" fill="#beff00"/><rect x="279" y="79" width="12" height="12" fill="#c8ff00"/><rect x="289" y="79" width="12" height="12" fill="#d1ff00"/><rect x="299" y="79" width="12" height="12" fill="#daff00"/><rect x="309" y="79" width="12" height="12" fill="#e3ff00"/><rect x="319" y="79" width="12" height="12" fill="#ecff00"/><rect x="329" y="79" width="12" height="12" fill="#f5ff00"/><rect x="339" y="79" width="12" height="12" fill="#ffff00"/><rect x="349" y="79" width="12" height="12" fill="#fff600"/><rect x="359" y="79" width="12" height="12" fill="#ffed00"/><rect x="369" y="79" width="12" height="12" fill="#ffe500"/><rect x="379" y="79" width="12" height="12" fill="#ffdd00"/><rect x="389" y="79" width="12" height="12" fill="#ffd600"/><rect x="399" y="79" width="12" height="12" fill="#ffce00"/><rect x="409" y="79" width="12" height="12" fill="#ffc800"/><rect x="419" y="79" width="12" height="12" fill="#ffc100"/><rect x="429" y="79" width="12" height="12" fill="#ffbb00"/><rect x="439" y="79" width="12" height="12" fill="#ffb400"/><rect x="449" y="79" width="12" height="12" fill="#ffaf00"/><rect x="459" y="79" width="12" height="12" fill="#ffa900"/><rect x="469" y="79" width="12" height="12" fill="#ffa300"/><rect x="479" y="79" width="12" height="12" fill="#ff9e00"/><rect x="489" y="79" width="12" height="12" fill="#ff9900"/><rect x="499" y="79" width="12" height="12" fill="#ff9400"/><rect x="-1" y="89" width="12" height="12" fill="#00ff68"/><rect x="9" y="89" width="12" height="12" fill="#00ff65"/><rect x="19" y="89" width="12" height="12" fill="#00ff62"/><rect x="29" y="89" width="12" height="12" fill="#00ff5f"/><rect x="39" y="89" width="12" height="12" fill="#00ff5b"/><rect x="49" y="89" width="12" height="12" fill="#00ff58"/><rect x="59" y="89" width="12" height="12" fill="#00ff54"/><rect x="69" y="89" width="12" height="12" fill="#00ff4f"/><rect x="79" y="89" width="12" height="12" fill="#00ff4b"/><rect x="89" y="89" width="12" height="12" fill="#00ff46"/><rect x="99" y="89" width="12" height="12" fill="#00ff41"/><rect x="109" y="89" width="12" height="12" fill="#00ff3b"/><rect x="119" y="89" width="12" height="12" fill="#00ff35"/><rect x="129" y="89" width="12" height="12" fill="#15ff2d"/><rect x="139" y="89" width="12" height="12" fill="#2dff25"/><rect x="149" y="89" width="12" height="12" fill="#40ff1b"/><rect x="159" y="89" width="12" height="12" fill="#4fff0e"/><rect x="169" y="89" width="12" height="12" fill="#5dff00"/><rect x="179" y="89" width="12" height="12" fill="#6bff00"/><rect x="189" y="89" width="12" height="12" fill="#77ff00"/><rect x="199" y="89" width="12" height="12" fill="#83ff00"/><rect x="209" y="89" width="12" height="12" fill="#8eff00"/><rect x="219" y="89" width="12" height="12" fill="#99ff00"/><rect x="229" y="89" width="12" height="12" fill="#a3ff00"/><rect x="239" y="89" width="12" height="12" fill="#acff00"/><rect x="249" y="89" width="12" height="12" fill="#b6ff00"/><rect x="259" y="89" width="12" height="12" fill="#bfff00"/><rect x="269" y="89" width="12" height="12" fill="#c8ff00"/><rect x="279" y="89" width="12" height="12" fill="#d2ff00"/><rect x="289" y="89" width="12" height="12" fill="#dbff00"/><rect x="299" y="89" width="12" height="12" fill="#e5ff00"/><rect x="309" y="89" width="12" height="12" fill="#efff00"/><rect x="319" y="89" width="12" height="12" fill="#f8ff00"/><rect x="329" y="89" width="12" height="12" fill="#fffc00"/><rect x="339" y="89" width="12" height="12" fill="#fff200"/><rect x="349" y="89" width="12" height="12" fill="#ffea00"/><rect x="359" y="89" width="12" height="12" fill="#ffe100"/><rect x="369" y="89" width="12" height="12" fill="#ffd900"/><rect x="379" y="89" width="12" height="12" fill="#ffd200"/><rect x="389" y="89" width="12" height="12" fill="#ffca00"/><rect x="399" y="89" width="12" height="12" fill="#ffc300"/><rect x="409" y="89" width="12" height="12" fill="#ffbd00"/><rect x="419" y="89" width="12" height="12" fill="#ffb600"/><rect x="429" y="89" width="12" height="12" fill="#ffb000"/><rect x="439" y="89" width="12" height="12" fill="#ffaa00"/><rect x="449" y="89" width="12" height="12" fill="#ffa400"/><rect x="459" y="89" width="12" height="12" fill="#ff9f00"/><rect x="469" y="89" width="12" height="12" fill="#ff9900"/><rect x="479" y="89" width="12" height="12" fill="#ff9400"/><rect x="489" y="89" width="12" height="12" fill="#ff8f00"/><rect x="499" y="89" width="12" height="12" fill="#ff8a00"/><rect x="-1" y="99" width="12" height="12" fill="#00ff72"/><rect x="9" y="99" width="12" height="12" fill="#00ff6f"/><rect x="19" y="99" width="12" height="12" fill="#00ff6c"/><rect x="29" y="99" width="12" height="12" fill="#00ff69"/><rect x="39" y="99" width="12" height="12" fill="#00ff66"/><rect x="49" y="99" width="12" height="12" fill="#00ff63"/><rect x="59" y="99" width="12" height="12" fill="#00ff5f"/><rect x="69" y="99" width="12" height="12" fill="#00ff5b"/><rect x="79" y="99" width="12" height="12" fill="#00ff57"/><rect x="89" y="99" width="12" height="12" fill="#00ff53"/><rect x="99" y="99" width="12" height="12" fill="#00ff4e"/><rect x="109" y="99" width="12" height="12" fill="#00ff49"/><rect x="119" y="99" width="12" height="12" fill="#00ff43"/><rect x="129" y="99" width="12" height="12" fill="#1aff3d"/><rect x="139" y="99" width="12" height="12" fill="#32ff36"/><rect x="149" y="99" width="12" height="12" fill="#44ff2f"/><rect x="159" y="99" width="12" height="12" fill="#54ff26"/><rect x="169" y="99" width="12" height="12" fill="#62ff1b"/><rect x="179" y="99" width="12" height="12" fill="#70ff0d"/><rect x="189" y="99" width="12" height="12" fill="#7dff00"/><rect x="199" y="99" width="12" height="12" fill="#89ff00"/><rect x="209" y="99" width="12" height="12" fill="#95ff00"/><rect x="219" y="99" width="12" height="12" fill="#a0ff00"/><rect x="229" y="99" width="12" height="12" fill="#acff00"/><rect x="239" y="99" width="12" height="12" fill="#b6ff00"/><rect x="249" y="99" width="12" height="12" fill="#c0ff00"/><rect x="259" y="99" width="12" height="12" fill="#caff00"/><rect x="269" y="99" width="12" height="12" fill="#d3ff00"/><rect x="279" y="99" width="12" height="12" fill="#ddff00"/><rect x="289" y="99" width="12" height="12" fill="#e7ff00"/><rect x="299" y="99" width="12" height="12" fill="#f1ff00"/><rect x="309" y="99" width="12" height="12" fill="#fbff00"/><rect x="319" y="99" width="12" height="12" fill="#fff800"/><rect x="329" y="99" width="12" height="12" fill="#ffef00"/><rect x="339" y="99" width="12" height="12" fill="#ffe600"/><rect x="349" y="99" width="12" height="12" fill="#ffdd00"/><rect x="359" y="99" width="12" height="12" fill="#ffd500"/><rect x="369" y="99" width="12" height="12" fill="#ffcd00"/><rect x="379" y="99" width="12" height="12" fill="#ffc600"/><rect x="389" y="99" width="12" height="12" fill="#ffbf00"/><rect x="399" y="99" width="12" height="12" fill="#ffb800"/><rect x="409" y="99" width="12" height="12" fill="#ffb200"/><rect x="419" y="99" width="12" height="12" fill="#ffab00"/><rect x="429" y="99" width="12" height="12" fill="#ffa500"/><rect x="439" y="99" width="12" height="12" fill="#ff9f00"/><rect x="449" y="99" width="12" height="12" fill="#ff9a00"/><rect x="459" y="99" width="12" height="12" fill="#ff9400"/><rect x="469" y="99" width="12" height="12" fill="#ff8f00"/><rect x="479" y="99" width="12" height="12" fill="#ff8a00"/><rect x="489" y="99" width="12" height="12" fill="#ff8400"/><rect x="499" y="99" width="12" height="12" fill="#ff7f00"/><rect x="-1" y="109" width="12" height="12" fill="#00ff7c"/><rect x="9" y="109" width="12" height="12" fill="#00ff79"/><rect x="19" y="109" width="12" height="12" fill="#00ff76"/><rect x="29" y="109" width="12" height="12" fill="#00ff74"/><rect x="39" y="109" width="12" height="12" fill="#00ff71"/><rect x="49" y="109" width="12" height="12" fill="#00ff6d"/><rect x="59" y="109" width="12" height="12" fill="#00ff6a"/><rect x="69" y="109" width="12" height="12" fill="#00ff67"/><rect x="79" y="109" width="12" height="12" fill="#00ff63"/><rect x="89" y="109" width="12" height="12" fill="#00ff5f"/><rect x="99" y="109" width="12" height="12" fill="#00ff5b"/><rect x="109" y="109" width="12" height="12" fill="#00ff56"/><rect x="119" y="109" width="12" height="12" fill="#00ff51"/><rect x="129" y="109" width="12" height="12" fill="#20ff4c"/><rect x="139" y="109" width="12" height="12" fill="#37ff46"/><rect x="149" y="109" width="12" height="12" fill="#49ff40"/><rect x="159" y="109" width="12" height="12" fill="#59ff39"/><rect x="169" y="109" width="12" height="12" fill="#68ff31"/><rect x="179" y="109" width="12" height="12" fill="#76ff27"/><rect x="189" y="109" width="12" height="12" fill="#83ff1c"/><rect x="199" y="109" width="12" height="12" fill="#8fff0b"/><rect x="209" y="109" width="12" height="12" fill="#9cff00"/><rect x="219" y="109" width="12" height="12" fill="#a8ff00"/><rect x="229" y="109" width="12" height="12" fill="#b4ff00"/><rect x="239" y="109" width="12" height="12" fill="#bfff00"/><rect x="249" y="109" width="12" height="12" fill="#cbff00"/><rect x="259" y="109" width="12" height="12" fill="#d5ff00"/><rect x="269" y="109" width="12" height="12" fill="#dfff00"/><rect x="279" y="109" width="12" height="12" fill="#eaff00"/><rect x="289" y="109" width="12" height="12" fill="#f4ff00"/><rect x="299" y="109" width="12" height="12" fill="#ffff00"/><rect x="309" y="109" width="12" height="12" fill="#fff500"/><rect x="319" y="109" width="12" height="12" fill="#ffeb00"/><rect x="329" y="109" width="12" height="12" fill="#ffe200"/><rect x="339" y="109" width="12" height="12" fill="#ffd900"/><rect x="349" y="109" width="12" height="12" fill="#ffd100"/><rect x="359" y="109" width="12" height="12" fill="#ffc900"/><rect x="369" y="109" width="12" height="12" fill="#ffc100"/><rect x="379" y="109" width="12" height="12" fill="#ffba00"/><rect x="389" y="109" width="12" height="12" fill="#ffb300"/><rect x="399" y="109" width="12" height="12" fill="#ffad00"/><rect x="409" y="109" width="12" height="12" fill="#ffa600"/><rect x="419" y="109" width="12" height="12" fill="#ffa000"/><rect x="429" y="109" width="12" height="12" fill="#ff9a00"/><rect x="439" y="109" width="12" height="12" fill="#ff9400"/><rect x="449" y="109" width="12" height="12" fill="#ff8f00"/><rect x="459" y="109" width="12" height="12" fill="#ff8900"/><rect x="469" y="109" width="12" height="12" fill="#ff8400"/><rect x="479" y="109" width="12" height="12" fill="#ff7f00"/><rect x="489" y="109" width="12" height="12" fill="#ff7a00"/><rect x="499" y="109" width="12" height="12" fill="#ff7500"/><rect x="-1" y="119" width="12" height="12" fill="#00ff86"/><rect x="9" y="119" width="12" height="12" fill="#00ff83"/><rect x="19" y="119" width="12" height="12" fill="#00ff81"/><rect x="29" y="119" width="12" height="12" fill="#00ff7e"/><rect x="39" y="119" width="12" height="12" fill="#00ff7b"/><rect x="49" y="119" width="12" height="12" fill="#00ff79"/><rect x="59" y="119" width="12" height="12" fill="#00ff75"/><rect x="69" y="119" width="12" height="12" fill="#00ff72"/><rect x="79" y="119" width="12" height="12" fill="#00ff6f"/><rect x="89" y="119" width="12" height="12" fill="#00ff6b"/><rect x="99" y="119" width="12" height="12" fill="#00ff67"/><rect x="109" y="119" width="12" height="12" fill="#00ff63"/><rect x="119" y="119" width="12" height="12" fill="#02ff5f"/><rect x="129" y="119" width="12" height="12" fill="#25ff5a"/><rect x="139" y="119" width="12" height="12" fill="#3cff55"/><rect x="149" y="119" width="12" height="12" fill="#4eff50"/><rect x="159" y="119" width="12" height="12" fill="#5fff49"/><rect x="169" y="119" width="12" height="12" fill="#6eff43"/><rect x="179" y="119" width="12" height="12" fill="#7cff3b"/><rect x="189" y="119" width="12" height="12" fill="#89ff33"/><rect x="199" y="119" width="12" height="12" fill="#96ff28"/><rect x="209" y="119" width="12" height="12" fill="#a3ff1c"/><rect x="219" y="119" width="12" height="12" fill="#b0ff09"/><rect x="229" y="119" width="12" height="12" fill="#bcff00"/><rect x="239" y="119" width="12" height="12" fill="#c8ff00"/><rect x="249" y="119" width="12" height="12" fill="#d5ff00"/><rect x="259" y="119" width="12" height="12" fill="#e1ff00"/><rect x="269" y="119" width="12" height="12" fill="#ecff00"/><rect x="279" y="119" width="12" height="12" fill="#f7ff00"/><rect x="289" y="119" width="12" height="12" fill="#fffb00"/><rect x="299" y="119" width="12" height="12" fill="#fff100"/><rect x="309" y="119" width="12" height="12" fill="#ffe700"/><rect x="319" y="119" width="12" height="12" fill="#ffde00"/><rect x="329" y="119" width="12" height="12" fill="#ffd500"/><rect x="339" y="119" width="12" height="12" fill="#ffcc00"/><rect x="349" y="119" width="12" height="12" fill="#ffc400"/><rect x="359" y="119" width="12" height="12" fill="#ffbd00"/><rect x="369" y="119" width="12" height="12" fill="#ffb500"/><rect x="379" y="119" width="12" height="12" fill="#ffae00"/><rect x="389" y="119" width="12" height="12" fill="#ffa800"/><rect x="399" y="119" width="12" height="12" fill="#ffa100"/><rect x="409" y="119" width="12" height="12" fill="#ff9b00"/><rect x="419" y="119" width="12" height="12" fill="#ff9500"/><rect x="429" y="119" width="12" height="12" fill="#ff8f00"/><rect x="439" y="119" width="12" height="12" fill="#ff8900"/><rect x="449" y="119" width="12" height="12" fill="#ff8400"/><rect x="459" y="119" width="12" height="12" fill="#ff7e00"/><rect x="469" y="119" width="12" height="12" fill="#ff7900"/><rect x="479" y="119" width="12" height="12" fill="#ff7400"/><rect x="489" y="119" width="12" height="12" fill="#ff6f00"/><rect x="499" y="119" width="12" height="12" fill="#ff6900"/><rect x="-1" y="129" width="12" height="12" fill="#00ff90"/><rect x="9" y="129" width="12" height="12" fill="#00ff8e"/><rect x="19" y="129" width="12" height="12" fill="#00ff8c"/><rect x="29" y="129" width="12" height="12" fill="#00ff89"/><rect x="39" y="129" width="12" height="12" fill="#00ff87"/><rect x="49" y="129" width="12" height="12" fill="#00ff84"/><rect x="59" y="129" width="12" height="12" fill="#00ff81"/><rect x="69" y="129" width="12" height="12" fill="#00ff7e"/><rect x="79" y="129" width="12" height="12" fill="#00ff7b"/><rect x="89" y="129" width="12" height="12" fill="#00ff78"/><rect x="99" y="129" width="12" height="12" fill="#00ff74"/><rect x="109" y="129" width="12" height="12" fill="#00ff71"/><rect x="119" y="129" width="12" height="12" fill="#08ff6d"/><rect x="129" y="129" width="12" height="12" fill="#2bff68"/><rect x="139" y="129" width="12" height="12" fill="#41ff64"/><rect x="149" y="129" width="12" height="12" fill="#54ff5f"/><rect x="159" y="129" width="12" height="12" fill="#64ff5a"/><rect x="169" y="129" width="12" height="12" fill="#74ff54"/><rect x="179" y="129" width="12" height="12" fill="#82ff4d"/><rect x="189" y="129" width="12" height="12" fill="#90ff46"/><rect x="199" y="129" width="12" height="12" fill="#9eff3e"/><rect x="209" y="129" width="12" height="12" fill="#abff35"/><rect x="219" y="129" width="12" height="12" fill="#b8ff2a"/><rect x="229" y="129" width="12" height="12" fill="#c5ff1c"/><rect x="239" y="129" width="12" height="12" fill="#d2ff07"/><rect x="249" y="129" width="12" height="12" fill="#dfff00"/><rect x="259" y="129" width="12" height="12" fill="#ecff00"/><rect x="269" y="129" width="12" height="12" fill="#f9ff00"/><rect x="279" y="129" width="12" height="12" fill="#fff700"/><rect x="289" y="129" width="12" height="12" fill="#ffed00"/><rect x="299" y="129" width="12" height="12" fill="#ffe200"/><rect x="309" y="129" width="12" height="12" fill="#ffd900"/><rect x="319" y="129" width="12" height="12" fill="#ffd000"/><rect x="329" y="129" width="12" height="12" fill="#ffc700"/><rect x="339" y="129" width="12" height="12" fill="#ffbf00"/><rect x="349" y="129" width="12" height="12" fill="#ffb700"/><rect x="359" y="129" width="12" height="12" fill="#ffb000"/><rect x="369" y="129" width="12" height="12" fill="#ffa900"/><rect x="379" y="129" width="12" height="12" fill="#ffa200"/><rect x="389" y="129" width="12" height="12" fill="#ff9b00"/><rect x="399" y="129" width="12" height="12" fill="#ff9500"/><rect x="409" y="129" width="12" height="12" fill="#ff8f00"/><rect x="419" y="129" width="12" height="12" fill="#ff8900"/><rect x="429" y="129" width="12" height="12" fill="#ff8300"/><rect x="439" y="129" width="12" height="12" fill="#ff7d00"/><rect x="449" y="129" width="12" height="12" fill="#ff7800"/><rect x="459" y="129" width="12" height="12" fill="#ff7200"/><rect x="469" y="129" width="12" height="12" fill="#ff6d00"/><rect x="479" y="129" width="12" height="12" fill="#ff6800"/><rect x="489" y="129" width="12" height="12" fill="#ff6300"/><rect x="499" y="129" width="12" height="12" fill="#ff5e00"/><rect x="-1" y="139" width="12" height="12" fill="#00ff9b"/><rect x="9" y="139" width="12" height="12" fill="#00ff99"/><rect x="19" y="139" width="12" height="12" fill="#00ff97"/><rect x="29" y="139" width="12" height="12" fill="#00ff95"/><rect x="39" y="139" width="12" height="12" fill="#00ff92"/><rect x="49" y="139" width="12" height="12" fill="#00ff90"/><rect x="59" y="139" width="12" height="12" fill="#00ff8d"/><rect x="69" y="139" width="12" height="12" fill="#00ff8a"/><rect x="79" y="139" width="12" height="12" fill="#00ff88"/><rect x="89" y="139" width="12" height="12" fill="#00ff85"/><rect x="99" y="139" width="12" height="12" fill="#00ff81"/><rect x="109" y="139" width="12" height="12" fill="#00ff7e"/><rect x="119" y="139" width="12" height="12" fill="#10ff7a"/><rect x="129" y="139" width="12" height="12" fill="#30ff77"/><rect x="139" y="139" width="12" height="12" fill="#47ff73"/><rect x="149" y="139" width="12" height="12" fill="#5aff6e"/><rect x="159" y="139" width="12" height="12" fill="#6bff69"/><rect x="169" y="139" width="12" height="12" fill="#7bff64"/><rect x="179" y="139" width="12" height="12" fill="#8aff5f"/><rect x="189" y="139" width="12" height="12" fill="#98ff59"/><rect x="199" y="139" width="12" height="12" fill="#a6ff52"/><rect x="209" y="139" width="12" height="12" fill="#b4ff4a"/><rect x="219" y="139" width="12" height="12" fill="#c2ff42"/><rect x="229" y="139" width="12" height="12" fill="#d0ff38"/><rect x="239" y="139" width="12" height="12" fill="#ddff2c"/><rect x="249" y="139" width="12" height="12" fill="#ebff1d"/><rect x="259" y="139" width="12" height="12" fill="#f9ff05"/><rect x="269" y="139" width="12" height="12" fill="#fff700"/><rect x="279" y="139" width="12" height="12" fill="#ffea00"/><rect x="289" y="139" width="12" height="12" fill="#ffdf00"/><rect x="299" y="139" width="12" height="12" fill="#ffd400"/><rect x="309" y="139" width="12" height="12" fill="#ffcb00"/><rect x="319" y="139" width="12" height="12" fill="#ffc200"/><rect x="329" y="139" width="12" height="12" fill="#ffba00"/><rect x="339" y="139" width="12" height="12" fill="#ffb200"/><rect x="349" y="139" width="12" height="12" fill="#ffaa00"/><rect x="359" y="139" width="12" height="12" fill="#ffa300"/><rect x="369" y="139" width="12" height="12" fill="#ff9c00"/><rect x="379" y="139" width="12" height="12" fill="#ff9600"/><rect x="389" y="139" width="12" height="12" fill="#ff8f00"/><rect x="399" y="139" width="12" height="12" fill="#ff8900"/><rect x="409" y="139" width="12" height="12" fill="#ff8300"/><rect x="419" y="139" width="12" height="12" fill="#ff7d00"/><rect x="429" y="139" width="12" height="12" fill="#ff7700"/><rect x="439" y="139" width="12" height="12" fill="#ff7100"/><rect x="449" y="139" width="12" height="12" fill="#ff6c00"/><rect x="459" y="139" width="12" height="12" fill="#ff6600"/><rect x="469" y="139" width="12" height="12" fill="#ff6100"/><rect x="479" y="139" width="12" height="12" fill="#ff5b00"/><rect x="489" y="139" width="12" height="12" fill="#ff5600"/><rect x="499" y="139" width="12" height="12" fill="#ff5100"/><rect x="-1" y="149" width="12" height="12" fill="#00ffa6"/><rect x="9" y="149" width="12" height="12" fill="#00ffa4"/><rect x="19" y="149" width="12" height="12" fill="#00ffa2"/><rect x="29" y="149" width="12" height="12" fill="#00ffa0"/><rect x="39" y="149" width="12" height="12" fill="#00ff9e"/><rect x="49" y="149" width="12" height="12" fill="#00ff9c"/><rect x="59" y="149" width="12" height="12" fill="#00ff9a"/><rect x="69" y="149" width="12" height="12" fill="#00ff97"/><rect x="79" y="149" width="12" height="12" fill="#00ff95"/><rect x="89" y="149" width="12" height="12" fill="#00ff92"/><rect x="99" y="149" width="12" height="12" fill="#00ff8f"/><rect x="109" y="149" width="12" height="12" fill="#00ff8c"/><rect x="119" y="149" width="12" height="12" fill="#18ff89"/><rect x="129" y="149" width="12" height="12" fill="#36ff85"/><rect x="139" y="149" width="12" height="12" fill="#4dff82"/><rect x="149" y="149" width="12" height="12" fill="#60ff7e"/><rect x="159" y="149" width="12" height="12" fill="#72ff7a"/><rect x="169" y="149" width="12" height="12" fill="#82ff75"/><rect x="179" y="149" width="12" height="12" fill="#92ff70"/><rect x="189" y="149" width="12" height="12" fill="#a1ff6b"/><rect x="199" y="149" width="12" height="12" fill="#b0ff65"/><rect x="209" y="149" width="12" height="12" fill="#beff5f"/><rect x="219" y="149" width="12" height="12" fill="#cdff58"/><rect x="229" y="149" width="12" height="12" fill="#dbff50"/><rect x="239" y="149" width="12" height="12" fill="#eaff46"/><rect x="249" y="149" width="12" height="12" fill="#f9ff3c"/><rect x="259" y="149" width="12" height="12" fill="#fff72d"/><rect x="269" y="149" width="12" height="12" fill="#ffe91a"/><rect x="279" y="149" width="12" height="12" fill="#ffdd01"/><rect x="289" y="149" width="12" height="12" fill="#ffd100"/><rect x="299" y="149" width="12" height="12" fill="#ffc700"/><rect x="309" y="149" width="12" height="12" fill="#ffbd00"/><rect x="319" y="149" width="12" height="12" fill="#ffb400"/><rect x="329" y="149" width="12" height="12" fill="#ffac00"/><rect x="339" y="149" width="12" height="12" fill="#ffa400"/><rect x="349" y="149" width="12" height="12" fill="#ff9d00"/><rect x="359" y="149" width="12" height="12" fill="#ff9600"/><rect x="369" y="149" width="12" height="12" fill="#ff8f00"/><rect x="379" y="149" width="12" height="12" fill="#ff8800"/><rect x="389" y="149" width="12" height="12" fill="#ff8200"/><rect x="399" y="149" width="12" height="12" fill="#ff7c00"/><rect x="409" y="149" width="12" height="12" fill="#ff7600"/><rect x="419" y="149" width="12" height="12" fill="#ff7000"/><rect x="429" y="149" width="12" height="12" fill="#ff6a00"/><rect x="439" y="149" width="12" height="12" fill="#ff6400"/><rect x="449" y="149" width="12" height="12" fill="#ff5e00"/><rect x="459" y="149" width="12" height="12" fill="#ff5900"/><rect x="469" y="149" width="12" height="12" fill="#ff5300"/><rect x="479" y="149" width="12" height="12" fill="#ff4e00"/><rect x="489" y="149" width="12" height="12" fill="#ff4800"/><rect x="499" y="149" width="12" height="12" fill="#ff4300"/><rect x="-1" y="159" width="12" height="12" fill="#00ffb2"/><rect x="9" y="159" width="12" height="12" fill="#00ffb0"/><rect x="19" y="159" width="12" height="12" fill="#00ffaf"/><rect x="29" y="159" width="12" height="12" fill="#00ffad"/><rect x="39" y="159" width="12" height="12" fill="#00ffab"/><rect x="49" y="159" width="12" height="12" fill="#00ffa9"/><rect x="59" y="159" width="12" height="12" fill="#00ffa7"/><rect x="69" y="159" width="12" height="12" fill="#00ffa5"/><rect x="79" y="159" width="12" height="12" fill="#00ffa2"/><rect x="89" y="159" width="12" height="12" fill="#00ffa0"/><rect x="99" y="159" width="12" height="12" fill="#00ff9e"/><rect x="109" y="159" width="12" height="12" fill="#00ff9b"/><rect x="119" y="159" width="12" height="12" fill="#1fff98"/><rect x="129" y="159" width="12" height="12" fill="#3cff95"/><rect x="139" y="159" width="12" height="12" fill="#53ff92"/><rect x="149" y="159" width="12" height="12" fill="#67ff8e"/><rect x="159" y="159" width="12" height="12" fill="#79ff8b"/><rect x="169" y="159" width="12" height="12" fill="#8aff87"/><rect x="179" y="159" width="12" height="12" fill="#9aff82"/><rect x="189" y="159" width="12" height="12" fill="#aaff7e"/><rect x="199" y="159" width="12" height="12" fill="#baff79"/><rect x="209" y="159" width="12" height="12" fill="#caff73"/><rect x="219" y="159" width="12" height="12" fill="#d9ff6d"/><rect x="229" y="159" width="12" height="12" fill="#e9ff66"/><rect x="239" y="159" width="12" height="12" fill="#f8ff5f"/><rect x="249" y="159" width="12" height="12" fill="#fff653"/><rect x="259" y="159" width="12" height="12" fill="#ffe845"/><rect x="269" y="159" width="12" height="12" fill="#ffdb36"/><rect x="279" y="159" width="12" height="12" fill="#ffcf27"/><rect x="289" y="159" width="12" height="12" fill="#ffc414"/><rect x="299" y="159" width="12" height="12" fill="#ffb900"/><rect x="309" y="159" width="12" height="12" fill="#ffb000"/><rect x="319" y="159" width="12" height="12" fill="#ffa700"/><rect x="329" y="159" width="12" height="12" fill="#ff9e00"/><rect x="339" y="159" width="12" height="12" fill="#ff9600"/><rect x="349" y="159" width="12" height="12" fill="#ff8f00"/><rect x="359" y="159" width="12" height="12" fill="#ff8800"/><rect x="369" y="159" width="12" height="12" fill="#ff8100"/><rect x="379" y="159" width="12" height="12" fill="#ff7b00"/><rect x="389" y="159" width="12" height="12" fill="#ff7400"/><rect x="399" y="159" width="12" height="12" fill="#ff6e00"/><rect x="409" y="159" width="12" height="12" fill="#ff6800"/><rect x="419" y="159" width="12" height="12" fill="#ff6200"/><rect x="429" y="159" width="12" height="12" fill="#ff5c00"/><rect x="439" y="159" width="12" height="12" fill="#ff5600"/><rect x="449" y="159" width="12" height="12" fill="#ff5000"/><rect x="459" y="159" width="12" height="12" fill="#ff4a00"/><rect x="469" y="159" width="12" height="12" fill="#ff4400"/><rect x="479" y="159" width="12" height="12" fill="#ff3f00"/><rect x="489" y="159" width="12" height="12" fill="#ff3800"/><rect x="499" y="159" width="12" height="12" fill="#ff3200"/><rect x="-1" y="169" width="12" height="12" fill="#00ffbe"/><rect x="9" y="169" width="12" height="12" fill="#00ffbd"/><rect x="19" y="169" width="12" height="12" fill="#00ffbb"/><rect x="29" y="169" width="12" height="12" fill="#00ffba"/><rect x="39" y="169" width="12" height="12" fill="#00ffb8"/><rect x="49" y="169" width="12" height="12" fill="#00ffb7"/><rect x="59" y="169" width="12" height="12" fill="#00ffb5"/><rect x="69" y="169" width="12" height="12" fill="#00ffb3"/><rect x="79" y="169" width="12" height="12" fill="#00ffb1"/><rect x="89" y="169" width="12" height="12" fill="#00ffaf"/><rect x="99" y="169" width="12" height="12" fill="#00ffad"/><rect x="109" y="169" width="12" height="12" fill="#00ffaa"/><rect x="119" y="169" width="12" height="12" fill="#26ffa8"/><rect x="129" y="169" width="12" height="12" fill="#43ffa5"/><rect x="139" y="169" width="12" height="12" fill="#5affa3"/><rect x="149" y="169" width="12" height="12" fill="#6fffa0"/><rect x="159" y="169" width="12" height="12" fill="#81ff9c"/><rect x="169" y="169" width="12" height="12" fill="#93ff99"/><rect x="179" y="169" width="12" height="12" fill="#a4ff95"/><rect x="189" y="169" width="12" height="12" fill="#b5ff91"/><rect x="199" y="169" width="12" height="12" fill="#c6ff8d"/><rect x="209" y="169" width="12" height="12" fill="#d6ff88"/><rect x="219" y="169" width="12" height="12" fill="#e7ff83"/><rect x="229" y="169" width="12" height="12" fill="#f8ff7d"/><rect x="239" y="169" width="12" height="12" fill="#fff672"/><rect x="249" y="169" width="12" height="12" fill="#ffe765"/><rect x="259" y="169" width="12" height="12" fill="#ffd957"/><rect x="269" y="169" width="12" height="12" fill="#ffcc4a"/><rect x="279" y="169" width="12" height="12" fill="#ffc13d"/><rect x="289" y="169" width="12" height="12" fill="#ffb630"/><rect x="299" y="169" width="12" height="12" fill="#ffac21"/><rect x="309" y="169" width="12" height="12" fill="#ffa210"/><rect x="319" y="169" width="12" height="12" fill="#ff9900"/><rect x="329" y="169" width="12" height="12" fill="#ff9000"/><rect x="339" y="169" width="12" height="12" fill="#ff8800"/><rect x="349" y="169" width="12" height="12" fill="#ff8100"/><rect x="359" y="169" width="12" height="12" fill="#ff7a00"/><rect x="369" y="169" width="12" height="12" fill="#ff7300"/><rect x="379" y="169" width="12" height="12" fill="#ff6c00"/><rect x="389" y="169" width="12" height="12" fill="#ff6600"/><rect x="399" y="169" width="12" height="12" fill="#ff6000"/><rect x="409" y="169" width="12" height="12" fill="#ff5900"/><rect x="419" y="169" width="12" height="12" fill="#ff5300"/><rect x="429" y="169" width="12" height="12" fill="#ff4d00"/><rect x="439" y="169" width="12" height="12" fill="#ff4700"/><rect x="449" y="169" width="12" height="12" fill="#ff4000"/><rect x="459" y="169" width="12" height="12" fill="#ff3a00"/><rect x="469" y="169" width="12" height="12" fill="#ff3300"/><rect x="479" y="169" width="12" height="12" fill="#ff2d00"/><rect x="489" y="169" width="12" height="12" fill="#ff2500"/><rect x="499" y="169" width="12" height="12" fill="#ff1e00"/><rect x="-1" y="179" width="12" height="12" fill="#00ffcc"/><rect x="9" y="179" width="12" height="12" fill="#00ffca"/><rect x="19" y="179" width="12" height="12" fill="#00ffc9"/><rect x="29" y="179" width="12" height="12" fill="#00ffc8"/><rect x="39" y="179" width="12" height="12" fill="#00ffc7"/><rect x="49" y="179" width="12" height="12" fill="#00ffc5"/><rect x="59" y="179" width="12" height="12" fill="#00ffc4"/><rect x="69" y="179" width="12" height="12" fill="#00ffc2"/><rect x="79" y="179" width="12" height="12" fill="#00ffc1"/><rect x="89" y="179" width="12" height="12" fill="#00ffbf"/><rect x="99" y="179" width="12" height="12" fill="#00ffbd"/><rect x="109" y="179" width="12" height="12" fill="#00ffbb"/><rect x="119" y="179" width="12" height="12" fill="#2effb9"/><rect x="129" y="179" width="12" height="12" fill="#4affb7"/><rect x="139" y="179" width="12" height="12" fill="#62ffb5"/><rect x="149" y="179" width="12" height="12" fill="#77ffb2"/><rect x="159" y="179" width="12" height="12" fill="#8bffb0"/><rect x="169" y="179" width="12" height="12" fill="#9dffad"/><rect x="179" y="179" width="12" height="12" fill="#b0ffaa"/><rect x="189" y="179" width="12" height="12" fill="#c2ffa6"/><rect x="199" y="179" width="12" height="12" fill="#d3ffa3"/><rect x="209" y="179" width="12" height="12" fill="#e5ff9f"/><rect x="219" y="179" width="12" height="12" fill="#f7ff9b"/><rect x="229" y="179" width="12" height="12" fill="#fff590"/><rect x="239" y="179" width="12" height="12" fill="#ffe581"/><rect x="249" y="179" width="12" height="12" fill="#ffd674"/><rect x="259" y="179" width="12" height="12" fill="#ffc967"/><rect x="269" y="179" width="12" height="12" fill="#ffbd5b"/><rect x="279" y="179" width="12" height="12" fill="#ffb24f"/><rect x="289" y="179" width="12" height="12" fill="#ffa743"/><rect x="299" y="179" width="12" height="12" fill="#ff9d37"/><rect x="309" y="179" width="12" height="12" fill="#ff942b"/><rect x="319" y="179" width="12" height="12" fill="#ff8b1d"/><rect x="329" y="179" width="12" height="12" fill="#ff820b"/><rect x="339" y="179" width="12" height="12" fill="#ff7a00"/><rect x="349" y="179" width="12" height="12" fill="#ff7200"/><rect x="359" y="179" width="12" height="12" fill="#ff6b00"/><rect x="369" y="179" width="12" height="12" fill="#ff6400"/><rect x="379" y="179" width="12" height="12" fill="#ff5d00"/><rect x="389" y="179" width="12" height="12" fill="#ff5600"/><rect x="399" y="179" width="12" height="12" fill="#ff5000"/><rect x="409" y="179" width="12" height="12" fill="#ff4900"/><rect x="419" y="179" width="12" height="12" fill="#ff4200"/><rect x="429" y="179" width="12" height="12" fill="#ff3c00"/><rect x="439" y="179" width="12" height="12" fill="#ff3500"/><rect x="449" y="179" width="12" height="12" fill="#ff2e00"/><rect x="459" y="179" width="12" height="12" fill="#ff2600"/><rect x="469" y="179" width="12" height="12" fill="#ff1e00"/><rect x="479" y="179" width="12" height="12" fill="#ff1500"/><rect x="489" y="179" width="12" height="12" fill="#ff0900"/><rect x="499" y="179" width="12" height="12" fill="#ff0000"/><rect x="-1" y="189" width="12" height="12" fill="#00ffda"/><rect x="9" y="189" width="12" height="12" fill="#00ffd9"/><rect x="19" y="189" width="12" height="12" fill="#00ffd8"/><rect x="29" y="189" width="12" height="12" fill="#00ffd7"/><rect x="39" y="189" width="12" height="12" fill="#00ffd6"/><rect x="49" y="189" width="12" height="12" fill="#00ffd5"/><rect x="59" y="189" width="12" height="12" fill="#00ffd4"/><rect x="69" y="189" width="12" height="12" fill="#00ffd3"/><rect x="79" y="189" width="12" height="12" fill="#00ffd1"/><rect x="89" y="189" width="12" height="12" fill="#00ffd0"/><rect x="99" y="189" width="12" height="12" fill="#00ffcf"/><rect x="109" y="189" width="12" height="12" fill="#07ffcd"/><rect x="119" y="189" width="12" height="12" fill="#35ffcc"/><rect x="129" y="189" width="12" height="12" fill="#52ffca"/><rect x="139" y="189" width="12" height="12" fill="#6bffc8"/><rect x="149" y="189" width="12" height="12" fill="#81ffc7"/><rect x="159" y="189" width="12" height="12" fill="#95ffc5"/><rect x="169" y="189" width="12" height="12" fill="#a9ffc2"/><rect x="179" y="189" width="12" height="12" fill="#bdffc0"/><rect x="189" y="189" width="12" height="12" fill="#d0ffbe"/><rect x="199" y="189" width="12" height="12" fill="#e3ffbb"/><rect x="209" y="189" width="12" height="12" fill="#f6ffb8"/><rect x="219" y="189" width="12" height="12" fill="#fff5ad"/><rect x="229" y="189" width="12" height="12" fill="#ffe39d"/><rect x="239" y="189" width="12" height="12" fill="#ffd48f"/><rect x="249" y="189" width="12" height="12" fill="#ffc681"/><rect x="259" y="189" width="12" height="12" fill="#ffb975"/><rect x="269" y="189" width="12" height="12" fill="#ffad69"/><rect x="279" y="189" width="12" height="12" fill="#ffa25e"/><rect x="289" y="189" width="12" height="12" fill="#ff9753"/><rect x="299" y="189" width="12" height="12" fill="#ff8e48"/><rect x="309" y="189" width="12" height="12" fill="#ff843d"/><rect x="319" y="189" width="12" height="12" fill="#ff7b32"/><rect x="329" y="189" width="12" height="12" fill="#ff7326"/><rect x="339" y="189" width="12" height="12" fill="#ff6b19"/><rect x="349" y="189" width="12" height="12" fill="#ff6307"/><rect x="359" y="189" width="12" height="12" fill="#ff5b00"/><rect x="369" y="189" width="12" height="12" fill="#ff5300"/><rect x="379" y="189" width="12" height="12" fill="#ff4c00"/><rect x="389" y="189" width="12" height="12" fill="#ff4500"/><rect x="399" y="189" width="12" height="12" fill="#ff3d00"/><rect x="409" y="189" width="12" height="12" fill="#ff3600"/><rect x="419" y="189" width="12" height="12" fill="#ff2f00"/><rect x="429" y="189" width="12" height="12" fill="#ff2700"/><rect x="439" y="189" width="12" height="12" fill="#ff1e00"/><rect x="449" y="189" width="12" height="12" fill="#ff1400"/><rect x="459" y="189" width="12" height="12" fill="#ff0800"/><rect x="469" y="189" width="12" height="12" fill="#ff0000"/><rect x="479" y="189" width="12" height="12" fill="#ff0000"/><rect x="489" y="189" width="12" height="12" fill="#ff0000"/><rect x="499" y="189" width="12" height="12" fill="#ff0000"/><rect x="-1" y="199" width="12" height="12" fill="#00ffe9"/><rect x="9" y="199" width="12" height="12" fill="#00ffe8"/><rect x="19" y="199" width="12" height="12" fill="#00ffe8"/><rect x="29" y="199" width="12" height="12" fill="#00ffe7"/><rect x="39" y="199" width="12" height="12" fill="#00ffe7"/><rect x="49" y="199" width="12" height="12" fill="#00ffe6"/><rect x="59" y="199" width="12" height="12" fill="#00ffe5"/><rect x="69" y="199" width="12" height="12" fill="#00ffe5"/><rect x="79" y="199" width="12" height="12" fill="#00ffe4"/><rect x="89" y="199" width="12" height="12" fill="#00ffe3"/><rect x="99" y="199" width="12" height="12" fill="#00ffe2"/><rect x="109" y="199" width="12" height="12" fill="#13ffe1"/><rect x="119" y="199" width="12" height="12" fill="#3effe0"/><rect x="129" y="199" width="12" height="12" fill="#5bffdf"/><rect x="139" y="199" width="12" height="12" fill="#75ffde"/><rect x="149" y="199" width="12" height="12" fill="#8cffdd"/><rect x="159" y="199" width="12" height="12" fill="#a1ffdc"/><rect x="169" y="199" width="12" height="12" fill="#b7ffdb"/><rect x="179" y="199" width="12" height="12" fill="#ccffd9"/><rect x="189" y="199" width="12" height="12" fill="#e0ffd8"/><rect x="199" y="199" width="12" height="12" fill="#f5ffd6"/><rect x="209" y="199" width="12" height="12" fill="#fff4ca"/><rect x="219" y="199" width="12" height="12" fill="#ffe1b9"/><rect x="229" y="199" width="12" height="12" fill="#ffd1a9"/><rect x="239" y="199" width="12" height="12" fill="#ffc29b"/><rect x="249" y="199" width="12" height="12" fill="#ffb48e"/><rect x="259" y="199" width="12" height="12" fill="#ffa781"/><rect x="269" y="199" width="12" height="12" fill="#ff9c76"/><rect x="279" y="199" width="12" height="12" fill="#ff916b"/><rect x="289" y="199" width="12" height="12" fill="#ff8760"/><rect x="299" y="199" width="12" height="12" fill="#ff7d56"/><rect x="309" y="199" width="12" height="12" fill="#ff744c"/><rect x="319" y="199" width="12" height="12" fill="#ff6b42"/><rect x="329" y="199" width="12" height="12" fill="#ff6238"/><rect x="339" y="199" width="12" height="12" fill="#ff5a2d"/><rect x="349" y="199" width="12" height="12" fill="#ff5122"/><rect x="359" y="199" width="12" height="12" fill="#ff4915"/><rect x="369" y="199" width="12" height="12" fill="#ff4105"/><rect x="379" y="199" width="12" height="12" fill="#ff3800"/><rect x="389" y="199" width="12" height="12" fill="#ff3000"/><rect x="399" y="199" width="12" height="12" fill="#ff2700"/><rect x="409" y="199" width="12" height="12" fill="#ff1e00"/><rect x="419" y="199" width="12" height="12" fill="#ff1300"/><rect x="429" y="199" width="12" height="12" fill="#ff0600"/><rect x="439" y="199" width="12" height="12" fill="#ff0000"/><rect x="449" y="199" width="12" height="12" fill="#ff0000"/><rect x="459" y="199" width="12" height="12" fill="#ff0000"/><rect x="469" y="199" width="12" height="12" fill="#ff0000"/><rect x="479" y="199" width="12" height="12" fill="#ff0000"/><rect x="489" y="199" width="12" height="12" fill="#ff0000"/><rect x="499" y="199" width="12" height="12" fill="#ff0000"/><rect x="-1" y="209" width="12" height="12" fill="#00fff9"/><rect x="9" y="209" width="12" height="12" fill="#00fff9"/><rect x="19" y="209" width="12" height="12" fill="#00fff9"/><rect x="29" y="209" width="12" height="12" fill="#00fff9"/><rect x="39" y="209" width="12" height="12" fill="#00fff9"/><rect x="49" y="209" width="12" height="12" fill="#00fff9"/><rect x="59" y="209" width="12" height="12" fill="#00fff9"/><rect x="69" y="209" width="12" height="12" fill="#00fff8"/><rect x="79" y="209" width="12" height="12" fill="#00fff8"/><rect x="89" y="209" width="12" height="12" fill="#00fff8"/><rect x="99" y="209" width="12" height="12" fill="#00fff8"/><rect x="109" y="209" width="12" height="12" fill="#1efff8"/><rect x="119" y="209" width="12" height="12" fill="#47fff8"/><rect x="129" y="209" width="12" height="12" fill="#65fff7"/><rect x="139" y="209" width="12" height="12" fill="#80fff7"/><rect x="149" y="209" width="12" height="12" fill="#98fff7"/><rect x="159" y="209" width="12" height="12" fill="#b0fff7"/><rect x="169" y="209" width="12" height="12" fill="#c7fff6"/><rect x="179" y="209" width="12" height="12" fill="#ddfff6"/><rect x="189" y="209" width="12" height="12" fill="#f4fff6"/><rect x="199" y="209" width="12" height="12" fill="#fff3e9"/><rect x="209" y="209" width="12" height="12" fill="#ffdfd6"/><rect x="219" y="209" width="12" height="12" fill="#ffcdc4"/><rect x="229" y="209" width="12" height="12" fill="#ffbdb4"/><rect x="239" y="209" width="12" height="12" fill="#ffafa6"/><rect x="249" y="209" width="12" height="12" fill="#ffa199"/><rect x="259" y="209" width="12" height="12" fill="#ff958d"/><rect x="269" y="209" width="12" height="12" fill="#ff8a81"/><rect x="279" y="209" width="12" height="12" fill="#ff7f77"/><rect x="289" y="209" width="12" height="12" fill="#ff756c"/><rect x="299" y="209" width="12" height="12" fill="#ff6b62"/><rect x="309" y="209" width="12" height="12" fill="#ff6159"/><rect x="319" y="209" width="12" height="12" fill="#ff584f"/><rect x="329" y="209" width="12" height="12" fill="#ff4f46"/><rect x="339" y="209" width="12" height="12" fill="#ff463d"/><rect x="349" y="209" width="12" height="12" fill="#ff3d33"/><rect x="359" y="209" width="12" height="12" fill="#ff3429"/><rect x="369" y="209" width="12" height="12" fill="#ff2a1e"/><rect x="379" y="209" width="12" height="12" fill="#ff2012"/><rect x="389" y="209" width="12" height="12" fill="#ff1402"/><rect x="399" y="209" width="12" height="12" fill="#ff0500"/><rect x="409" y="209" width="12" height="12" fill="#ff0000"/><rect x="419" y="209" width="12" height="12" fill="#ff0000"/><rect x="429" y="209" width="12" height="12" fill="#ff0000"/><rect x="439" y="209" width="12" height="12" fill="#ff0000"/><rect x="449" y="209" width="12" height="12" fill="#ff0000"/><rect x="459" y="209" width="12" height="12" fill="#ff0000"/><rect x="469" y="209" width="12" height="12" fill="#ff0000"/><rect x="479" y="209" width="12" height="12" fill="#ff0000"/><rect x="489" y="209" width="12" height="12" fill="#ff0000"/><rect x="499" y="209" width="12" height="12" fill="#ff0000"/><rect x="-1" y="219" width="12" height="12" fill="#00f3ff"/><rect x="9" y="219" width="12" height="12" fill="#00f3ff"/><rect x="19" y="219" width="12" height="12" fill="#00f2ff"/><rect x="29" y="219" width="12" height="12" fill="#00f2ff"/><rect x="39" y="219" width="12" height="12" fill="#00f2ff"/><rect x="49" y="219" width="12" height="12" fill="#00f1ff"/><rect x="59" y="219" width="12" height="12" fill="#00f1ff"/><rect x="69" y="219" width="12" height="12" fill="#00f0ff"/><rect x="79" y="219" width="12" height="12" fill="#00f0ff"/><rect x="89" y="219" width="12" height="12" fill="#00efff"/><rect x="99" y="219" width="12" height="12" fill="#00efff"/><rect x="109" y="219" width="12" height="12" fill="#25eeff"/><rect x="119" y="219" width="12" height="12" fill="#4bedff"/><rect x="129" y="219" width="12" height="12" fill="#68edff"/><rect x="139" y="219" width="12" height="12" fill="#82ecff"/><rect x="149" y="219" width="12" height="12" fill="#9aebff"/><rect x="159" y="219" width="12" height="12" fill="#b1eaff"/><rect x="169" y="219" width="12" height="12" fill="#c7e9ff"/><rect x="179" y="219" width="12" height="12" fill="#dde8ff"/><rect x="189" y="219" width="12" height="12" fill="#f4e7ff"/><rect x="199" y="219" width="12" height="12" fill="#ffdcf4"/><rect x="209" y="219" width="12" height="12" fill="#ffc9e0"/><rect x="219" y="219" width="12" height="12" fill="#ffb8ce"/><rect x="229" y="219" width="12" height="12" fill="#ffa8bf"/><rect x="239" y="219" width="12" height="12" fill="#ff9ab1"/><rect x="249" y="219" width="12" height="12" fill="#ff8da3"/><rect x="259" y="219" width="12" height="12" fill="#ff8197"/><rect x="269" y="219" width="12" height="12" fill="#ff768c"/><rect x="279" y="219" width="12" height="12" fill="#ff6b81"/><rect x="289" y="219" width="12" height="12" fill="#ff6077"/><rect x="299" y="219" width="12" height="12" fill="#ff566e"/><rect x="309" y="219" width="12" height="12" fill="#ff4c64"/><rect x="319" y="219" width="12" height="12" fill="#ff425b"/><rect x="329" y="219" width="12" height="12" fill="#ff3853"/><rect x="339" y="219" width="12" height="12" fill="#ff2e4a"/><rect x="349" y="219" width="12" height="12" fill="#ff2341"/><rect x="359" y="219" width="12" height="12" fill="#ff1638"/><rect x="369" y="219" width="12" height="12" fill="#ff062f"/><rect x="379" y="219" width="12" height="12" fill="#ff0026"/><rect x="389" y="219" width="12" height="12" fill="#ff001b"/><rect x="399" y="219" width="12" height="12" fill="#ff000e"/><rect x="409" y="219" width="12" height="12" fill="#ff0001"/><rect x="419" y="219" width="12" height="12" fill="#ff0000"/><rect x="429" y="219" width="12" height="12" fill="#ff0000"/><rect x="439" y="219" width="12" height="12" fill="#ff0000"/><rect x="449" y="219" width="12" height="12" fill="#ff0000"/><rect x="459" y="219" width="12" height="12" fill="#ff0000"/><rect x="469" y="219" width="12" height="12" fill="#ff0000"/><rect x="479" y="219" width="12" height="12" fill="#ff0000"/><rect x="489" y="219" width="12" height="12" fill="#ff0000"/><rect x="499" y="219" width="12" height="12" fill="#ff0000"/><rect x="-1" y="229" width="12" height="12" fill="#00e2ff"/><rect x="9" y="229" width="12" height="12" fill="#00e1ff"/><rect x="19" y="229" width="12" height="12" fill="#00e0ff"/><rect x="29" y="229" width="12" height="12" fill="#00dfff"/><rect x="39" y="229" width="12" height="12" fill="#00dfff"/><rect x="49" y="229" width="12" height="12" fill="#00deff"/><rect x="59" y="229" width="12" height="12" fill="#00ddff"/><rect x="69" y="229" width="12" height="12" fill="#00dcff"/><rect x="79" y="229" width="12" height="12" fill="#00daff"/><rect x="89" y="229" width="12" height="12" fill="#00d9ff"/><rect x="99" y="229" width="12" height="12" fill="#00d8ff"/><rect x="109" y="229" width="12" height="12" fill="#2ad7ff"/><rect x="119" y="229" width="12" height="12" fill="#4cd5ff"/><rect x="129" y="229" width="12" height="12" fill="#68d4ff"/><rect x="139" y="229" width="12" height="12" fill="#80d2ff"/><rect x="149" y="229" width="12" height="12" fill="#96d0ff"/><rect x="159" y="229" width="12" height="12" fill="#acceff"/><rect x="169" y="229" width="12" height="12" fill="#c1ccff"/><rect x="179" y="229" width="12" height="12" fill="#d6caff"/><rect x="189" y="229" width="12" height="12" fill="#ebc7ff"/><rect x="199" y="229" width="12" height="12" fill="#ffc3fe"/><rect x="209" y="229" width="12" height="12" fill="#ffb1ea"/><rect x="219" y="229" width="12" height="12" fill="#ffa1d8"/><rect x="229" y="229" width="12" height="12" fill="#ff92c9"/><rect x="239" y="229" width="12" height="12" fill="#ff84ba"/><rect x="249" y="229" width="12" height="12" fill="#ff77ad"/><rect x="259" y="229" width="12" height="12" fill="#ff6ba1"/><rect x="269" y="229" width="12" height="12" fill="#ff5f96"/><rect x="279" y="229" width="12" height="12" fill="#ff548b"/><rect x="289" y="229" width="12" height="12" fill="#ff4981"/><rect x="299" y="229" width="12" height="12" fill="#ff3e78"/><rect x="309" y="229" width="12" height="12" fill="#ff326f"/><rect x="319" y="229" width="12" height="12" fill="#ff2666"/><rect x="329" y="229" width="12" height="12" fill="#ff185e"/><rect x="339" y="229" width="12" height="12" fill="#ff0755"/><rect x="349" y="229" width="12" height="12" fill="#ff004d"/><rect x="359" y="229" width="12" height="12" fill="#ff0045"/><rect x="369" y="229" width="12" height="12" fill="#ff003d"/><rect x="379" y="229" width="12" height="12" fill="#ff0034"/><rect x="389" y="229" width="12" height="12" fill="#ff002c"/><rect x="399" y="229" width="12" height="12" fill="#ff0022"/><rect x="409" y="229" width="12" height="12" fill="#ff0018"/><rect x="419" y="229" width="12" height="12" fill="#ff000b"/><rect x="429" y="229" width="12" height="12" fill="#ff0000"/><rect x="439" y="229" width="12" height="12" fill="#ff0000"/><rect x="449" y="229" width="12" height="12" fill="#ff0000"/><rect x="459" y="229" width="12" height="12" fill="#ff0000"/><rect x="469" y="229" width="12" height="12" fill="#ff0000"/><rect x="479" y="229" width="12" height="12" fill="#ff0000"/><rect x="489" y="229" width="12" height="12" fill="#ff0000"/><rect x="499" y="229" width="12" height="12" fill="#ff0000"/><rect x="-1" y="239" width="12" height="12" fill="#00d1ff"/><rect x="9" y="239" width="12" height="12" fill="#00d0ff"/><rect x="19" y="239" width="12" height="12" fill="#00cfff"/><rect x="29" y="239" width="12" height="12" fill="#00ceff"/><rect x="39" y="239" width="12" height="12" fill="#00ccff"/><rect x="49" y="239" width="12" height="12" fill="#00cbff"/><rect x="59" y="239" width="12" height="12" fill="#00c9ff"/><rect x="69" y="239" width="12" height="12" fill="#00c8ff"/><rect x="79" y="239" width="12" height="12" fill="#00c6ff"/><rect x="89" y="239" width="12" height="12" fill="#00c4ff"/><rect x="99" y="239" width="12" height="12" fill="#00c2ff"/><rect x="109" y="239" width="12" height="12" fill="#2ec0ff"/><rect x="119" y="239" width="12" height="12" fill="#4ebeff"/><rect x="129" y="239" width="12" height="12" fill="#67bbff"/><rect x="139" y="239" width="12" height="12" fill="#7eb9ff"/><rect x="149" y="239" width="12" height="12" fill="#94b6ff"/><rect x="159" y="239" width="12" height="12" fill="#a8b3ff"/><rect x="169" y="239" width="12" height="12" fill="#bcb0ff"/><rect x="179" y="239" width="12" height="12" fill="#d0acff"/><rect x="189" y="239" width="12" height="12" fill="#e3a8ff"/><rect x="199" y="239" width="12" height="12" fill="#f7a4ff"/><rect x="209" y="239" width="12" height="12" fill="#ff98f3"/><rect x="219" y="239" width="12" height="12" fill="#ff88e1"/><rect x="229" y="239" width="12" height="12" fill="#ff79d2"/><rect x="239" y="239" width="12" height="12" fill="#ff6bc3"/><rect x="249" y="239" width="12" height="12" fill="#ff5eb6"/><rect x="259" y="239" width="12" height="12" fill="#ff51aa"/><rect x="269" y="239" width="12" height="12" fill="#ff449f"/><rect x="279" y="239" width="12" height="12" fill="#ff3895"/><rect x="289" y="239" width="12" height="12" fill="#ff2a8b"/><rect x="299" y="239" width="12" height="12" fill="#ff1c81"/><rect x="309" y="239" width="12" height="12" fill="#ff0878"/><rect x="319" y="239" width="12" height="12" fill="#ff0070"/><rect x="329" y="239" width="12" height="12" fill="#ff0068"/><rect x="339" y="239" width="12" height="12" fill="#ff0060"/><rect x="349" y="239" width="12" height="12" fill="#ff0058"/><rect x="359" y="239" width="12" height="12" fill="#ff0050"/><rect x="369" y="239" width="12" height="12" fill="#ff0048"/><rect x="379" y="239" width="12" height="12" fill="#ff0040"/><rect x="389" y="239" width="12" height="12" fill="#ff0039"/><rect x="399" y="239" width="12" height="12" fill="#ff0031"/><rect x="409" y="239" width="12" height="12" fill="#ff0028"/><rect x="419" y="239" width="12" height="12" fill="#ff001f"/><rect x="429" y="239" width="12" height="12" fill="#ff0015"/><rect x="439" y="239" width="12" height="12" fill="#ff0009"/><rect x="449" y="239" width="12" height="12" fill="#ff0000"/><rect x="459" y="239" width="12" height="12" fill="#ff0000"/><rect x="469" y="239" width="12" height="12" fill="#ff0000"/><rect x="479" y="239" width="12" height="12" fill="#ff0000"/><rect x="489" y="239" width="12" height="12" fill="#ff0000"/><rect x="499" y="239" width="12" height="12" fill="#ff0000"/><rect x="-1" y="249" width="12" height="12" fill="#00c1ff"/><rect x="9" y="249" width="12" height="12" fill="#00bfff"/><rect x="19" y="249" width="12" height="12" fill="#00beff"/><rect x="29" y="249" width="12" height="12" fill="#00bcff"/><rect x="39" y="249" width="12" height="12" fill="#00baff"/><rect x="49" y="249" width="12" height="12" fill="#00b8ff"/><rect x="59" y="249" width="12" height="12" fill="#00b6ff"/><rect x="69" y="249" width="12" height="12" fill="#00b4ff"/><rect x="79" y="249" width="12" height="12" fill="#00b2ff"/><rect x="89" y="249" width="12" height="12" fill="#00afff"/><rect x="99" y="249" width="12" height="12" fill="#02adff"/><rect x="109" y="249" width="12" height="12" fill="#31aaff"/><rect x="119" y="249" width="12" height="12" fill="#4fa7ff"/><rect x="129" y="249" width="12" height="12" fill="#67a4ff"/><rect x="139" y="249" width="12" height="12" fill="#7da0ff"/><rect x="149" y="249" width="12" height="12" fill="#919cff"/><rect x="159" y="249" width="12" height="12" fill="#a498ff"/><rect x="169" y="249" width="12" height="12" fill="#b794ff"/><rect x="179" y="249" width="12" height="12" fill="#ca8fff"/><rect x="189" y="249" width="12" height="12" fill="#dd8aff"/><rect x="199" y="249" width="12" height="12" fill="#ef84ff"/><rect x="209" y="249" width="12" height="12" fill="#ff7bfc"/><rect x="219" y="249" width="12" height="12" fill="#ff6bea"/><rect x="229" y="249" width="12" height="12" fill="#ff5cda"/><rect x="239" y="249" width="12" height="12" fill="#ff4dcc"/><rect x="249" y="249" width="12" height="12" fill="#ff3fbf"/><rect x="259" y="249" width="12" height="12" fill="#ff30b3"/><rect x="269" y="249" width="12" height="12" fill="#ff20a8"/><rect x="279" y="249" width="12" height="12" fill="#ff0b9d"/><rect x="289" y="249" width="12" height="12" fill="#ff0094"/><rect x="299" y="249" width="12" height="12" fill="#ff008a"/><rect x="309" y="249" width="12" height="12" fill="#ff0081"/><rect x="319" y="249" width="12" height="12" fill="#ff0079"/><rect x="329" y="249" width="12" height="12" fill="#ff0071"/><rect x="339" y="249" width="12" height="12" fill="#ff0069"/><rect x="349" y="249" width="12" height="12" fill="#ff0061"/><rect x="359" y="249" width="12" height="12" fill="#ff005a"/><rect x="369" y="249" width="12" height="12" fill="#ff0052"/><rect x="379" y="249" width="12" height="12" fill="#ff004b"/><rect x="389" y="249" width="12" height="12" fill="#ff0044"/><rect x="399" y="249" width="12" height="12" fill="#ff003d"/><rect x="409" y="249" width="12" height="12" fill="#ff0035"/><rect x="419" y="249" width="12" height="12" fill="#ff002d"/><rect x="429" y="249" width="12" height="12" fill="#ff0025"/><rect x="439" y="249" width="12" height="12" fill="#ff001d"/><rect x="449" y="249" width="12" height="12" fill="#ff0013"/><rect x="459" y="249" width="12" height="12" fill="#ff0006"/><rect x="469" y="249" width="12" height="12" fill="#ff0000"/><rect x="479" y="249" width="12" height="12" fill="#ff0000"/><rect x="489" y="249" width="12" height="12" fill="#ff0000"/><rect x="499" y="249" width="12" height="12" fill="#ff0000"/><rect x="-1" y="259" width="12" height="12" fill="#00b1ff"/><rect x="9" y="259" width="12" height="12" fill="#00afff"/><rect x="19" y="259" width="12" height="12" fill="#00adff"/><rect x="29" y="259" width="12" height="12" fill="#00abff"/><rect x="39" y="259" width="12" height="12" fill="#00a8ff"/><rect x="49" y="259" width="12" height="12" fill="#00a6ff"/><rect x="59" y="259" width="12" height="12" fill="#00a3ff"/><rect x="69" y="259" width="12" height="12" fill="#00a1ff"/><rect x="79" y="259" width="12" height="12" fill="#009eff"/><rect x="89" y="259" width="12" height="12" fill="#009aff"/><rect x="99" y="259" width="12" height="12" fill="#0a97ff"/><rect x="109" y="259" width="12" height="12" fill="#3494ff"/><rect x="119" y="259" width="12" height="12" fill="#5090ff"/><rect x="129" y="259" width="12" height="12" fill="#678cff"/><rect x="139" y="259" width="12" height="12" fill="#7b87ff"/><rect x="149" y="259" width="12" height="12" fill="#8f82ff"/><rect x="159" y="259" width="12" height="12" fill="#a17dff"/><rect x="169" y="259" width="12" height="12" fill="#b377ff"/><rect x="179" y="259" width="12" height="12" fill="#c571ff"/><rect x="189" y="259" width="12" height="12" fill="#d769ff"/><rect x="199" y="259" width="12" height="12" fill="#e861ff"/><rect x="209" y="259" width="12" height="12" fill="#fa58ff"/><rect x="219" y="259" width="12" height="12" fill="#ff48f2"/><rect x="229" y="259" width="12" height="12" fill="#ff37e3"/><rect x="239" y="259" width="12" height="12" fill="#ff25d4"/><rect x="249" y="259" width="12" height="12" fill="#ff0dc7"/><rect x="259" y="259" width="12" height="12" fill="#ff00bb"/><rect x="269" y="259" width="12" height="12" fill="#ff00b0"/><rect x="279" y="259" width="12" height="12" fill="#ff00a6"/><rect x="289" y="259" width="12" height="12" fill="#ff009c"/><rect x="299" y="259" width="12" height="12" fill="#ff0093"/><rect x="309" y="259" width="12" height="12" fill="#ff008a"/><rect x="319" y="259" width="12" height="12" fill="#ff0081"/><rect x="329" y="259" width="12" height="12" fill="#ff0079"/><rect x="339" y="259" width="12" height="12" fill="#ff0072"/><rect x="349" y="259" width="12" height="12" fill="#ff006a"/><rect x="359" y="259" width="12" height="12" fill="#ff0063"/><rect x="369" y="259" width="12" height="12" fill="#ff005c"/><rect x="379" y="259" width="12" height="12" fill="#ff0055"/><rect x="389" y="259" width="12" height="12" fill="#ff004e"/><rect x="399" y="259" width="12" height="12" fill="#ff0047"/><rect x="409" y="259" width="12" height="12" fill="#ff0040"/><rect x="419" y="259" width="12" height="12" fill="#ff0039"/><rect x="429" y="259" width="12" height="12" fill="#ff0032"/><rect x="439" y="259" width="12" height="12" fill="#ff002a"/><rect x="449" y="259" width="12" height="12" fill="#ff0023"/><rect x="459" y="259" width="12" height="12" fill="#ff001a"/><rect x="469" y="259" width="12" height="12" fill="#ff0010"/><rect x="479" y="259" width="12" height="12" fill="#ff0004"/><rect x="489" y="259" width="12" height="12" fill="#ff0000"/><rect x="499" y="259" width="12" height="12" fill="#ff0000"/><rect x="-1" y="269" width="12" height="12" fill="#00a1ff"/><rect x="9" y="269" width="12" height="12" fill="#009eff"/><rect x="19" y="269" width="12" height="12" fill="#009cff"/><rect x="29" y="269" width="12" height="12" fill="#0099ff"/><rect x="39" y="269" width="12" height="12" fill="#0096ff"/><rect x="49" y="269" width="12" height="12" fill="#0093ff"/><rect x="59" y="269" width="12" height="12" fill="#0090ff"/><rect x="69" y="269" width="12" height="12" fill="#008dff"/><rect x="79" y="269" width="12" height="12" fill="#0089ff"/><rect x="89" y="269" width="12" height="12" fill="#0086ff"/><rect x="99" y="269" width="12" height="12" fill="#1381ff"/><rect x="109" y="269" width="12" height="12" fill="#377dff"/><rect x="119" y="269" width="12" height="12" fill="#5178ff"/><rect x="129" y="269" width="12" height="12" fill="#6673ff"/><rect x="139" y="269" width="12" height="12" fill="#7a6dff"/><rect x="149" y="269" width="12" height="12" fill="#8d67ff"/><rect x="159" y="269" width="12" height="12" fill="#9e60ff"/><rect x="169" y="269" width="12" height="12" fill="#af58ff"/><rect x="179" y="269" width="12" height="12" fill="#c04fff"/><rect x="189" y="269" width="12" height="12" fill="#d145ff"/><rect x="199" y="269" width="12" height="12" fill="#e239ff"/><rect x="209" y="269" width="12" height="12" fill="#f329ff"/><rect x="219" y="269" width="12" height="12" fill="#ff11fa"/><rect x="229" y="269" width="12" height="12" fill="#ff00ea"/><rect x="239" y="269" width="12" height="12" fill="#ff00dc"/><rect x="249" y="269" width="12" height="12" fill="#ff00cf"/><rect x="259" y="269" width="12" height="12" fill="#ff00c3"/><rect x="269" y="269" width="12" height="12" fill="#ff00b8"/><rect x="279" y="269" width="12" height="12" fill="#ff00ad"/><rect x="289" y="269" width="12" height="12" fill="#ff00a4"/><rect x="299" y="269" width="12" height="12" fill="#ff009a"/><rect x="309" y="269" width="12" height="12" fill="#ff0092"/><rect x="319" y="269" width="12" height="12" fill="#ff0089"/><rect x="329" y="269" width="12" height="12" fill="#ff0081"/><rect x="339" y="269" width="12" height="12" fill="#ff007a"/><rect x="349" y="269" width="12" height="12" fill="#ff0072"/><rect x="359" y="269" width="12" height="12" fill="#ff006b"/><rect x="369" y="269" width="12" height="12" fill="#ff0064"/><rect x="379" y="269" width="12" height="12" fill="#ff005e"/><rect x="389" y="269" width="12" height="12" fill="#ff0057"/><rect x="399" y="269" width="12" height="12" fill="#ff0050"/><rect x="409" y="269" width="12" height="12" fill="#ff004a"/><rect x="419" y="269" width="12" height="12" fill="#ff0043"/><rect x="429" y="269" width="12" height="12" fill="#ff003c"/><rect x="439" y="269" width="12" height="12" fill="#ff0036"/><rect x="449" y="269" width="12" height="12" fill="#ff002f"/><rect x="459" y="269" width="12" height="12" fill="#ff0028"/><rect x="469" y="269" width="12" height="12" fill="#ff0020"/><rect x="479" y="269" width="12" height="12" fill="#ff0018"/><rect x="489" y="269" width="12" height="12" fill="#ff000e"/><rect x="499" y="269" width="12" height="12" fill="#ff0003"/><rect x="-1" y="279" width="12" height="12" fill="#0091ff"/><rect x="9" y="279" width="12" height="12" fill="#008eff"/><rect x="19" y="279" width="12" height="12" fill="#008bff"/><rect x="29" y="279" width="12" height="12" fill="#0088ff"/><rect x="39" y="279" width="12" height="12" fill="#0084ff"/><rect x="49" y="279" width="12" height="12" fill="#0081ff"/><rect x="59" y="279" width="12" height="12" fill="#007dff"/><rect x="69" y="279" width="12" height="12" fill="#0079ff"/><rect x="79" y="279" width="12" height="12" fill="#0075ff"/><rect x="89" y="279" width="12" height="12" fill="#0070ff"/><rect x="99" y="279" width="12" height="12" fill="#196bff"/><rect x="109" y="279" width="12" height="12" fill="#3965ff"/><rect x="119" y="279" width="12" height="12" fill="#515fff"/><rect x="129" y="279" width="12" height="12" fill="#6659ff"/><rect x="139" y="279" width="12" height="12" fill="#7951ff"/><rect x="149" y="279" width="12" height="12" fill="#8b49ff"/><rect x="159" y="279" width="12" height="12" fill="#9c3fff"/><rect x="169" y="279" width="12" height="12" fill="#ac33ff"/><rect x="179" y="279" width="12" height="12" fill="#bc25ff"/><rect x="189" y="279" width="12" height="12" fill="#cc10ff"/><rect x="199" y="279" width="12" height="12" fill="#dc00ff"/><rect x="209" y="279" width="12" height="12" fill="#ec00ff"/><rect x="219" y="279" width="12" height="12" fill="#fc00ff"/><rect x="229" y="279" width="12" height="12" fill="#ff00f2"/><rect x="239" y="279" width="12" height="12" fill="#ff00e3"/><rect x="249" y="279" width="12" height="12" fill="#ff00d6"/><rect x="259" y="279" width="12" height="12" fill="#ff00ca"/><rect x="269" y="279" width="12" height="12" fill="#ff00bf"/><rect x="279" y="279" width="12" height="12" fill="#ff00b5"/><rect x="289" y="279" width="12" height="12" fill="#ff00ab"/><rect x="299" y="279" width="12" height="12" fill="#ff00a2"/><rect x="309" y="279" width="12" height="12" fill="#ff0099"/><rect x="319" y="279" width="12" height="12" fill="#ff0091"/><rect x="329" y="279" width="12" height="12" fill="#ff0089"/><rect x="339" y="279" width="12" height="12" fill="#ff0081"/><rect x="349" y="279" width="12" height="12" fill="#ff007a"/><rect x="359" y="279" width="12" height="12" fill="#ff0073"/><rect x="369" y="279" width="12" height="12" fill="#ff006c"/><rect x="379" y="279" width="12" height="12" fill="#ff0066"/><rect x="389" y="279" width="12" height="12" fill="#ff005f"/><rect x="399" y="279" width="12" height="12" fill="#ff0059"/><rect x="409" y="279" width="12" height="12" fill="#ff0052"/><rect x="419" y="279" width="12" height="12" fill="#ff004c"/><rect x="429" y="279" width="12" height="12" fill="#ff0046"/><rect x="439" y="279" width="12" height="12" fill="#ff0040"/><rect x="449" y="279" width="12" height="12" fill="#ff0039"/><rect x="459" y="279" width="12" height="12" fill="#ff0033"/><rect x="469" y="279" width="12" height="12" fill="#ff002c"/><rect x="479" y="279" width="12" height="12" fill="#ff0025"/><rect x="489" y="279" width="12" height="12" fill="#ff001e"/><rect x="499" y="279" width="12" height="12" fill="#ff0015"/><rect x="-1" y="289" width="12" height="12" fill="#0080ff"/><rect x="9" y="289" width="12" height="12" fill="#007dff"/><rect x="19" y="289" width="12" height="12" fill="#007aff"/><rect x="29" y="289" width="12" height="12" fill="#0076ff"/><rect x="39" y="289" width="12" height="12" fill="#0072ff"/><rect x="49" y="289" width="12" height="12" fill="#006eff"/><rect x="59" y="289" width="12" height="12" fill="#0069ff"/><rect x="69" y="289" width="12" height="12" fill="#0064ff"/><rect x="79" y="289" width="12" height="12" fill="#005fff"/><rect x="89" y="289" width="12" height="12" fill="#0059ff"/><rect x="99" y="289" width="12" height="12" fill="#1e52ff"/><rect x="109" y="289" width="12" height="12" fill="#3b4bff"/><rect x="119" y="289" width="12" height="12" fill="#5243ff"/><rect x="129" y="289" width="12" height="12" fill="#663aff"/><rect x="139" y="289" width="12" height="12" fill="#782fff"/><rect x="149" y="289" width="12" height="12" fill="#8921ff"/><rect x="159" y="289" width="12" height="12" fill="#990eff"/><rect x="169" y="289" width="12" height="12" fill="#a900ff"/><rect x="179" y="289" width="12" height="12" fill="#b800ff"/><rect x="189" y="289" width="12" height="12" fill="#c800ff"/><rect x="199" y="289" width="12" height="12" fill="#d700ff"/><rect x="209" y="289" width="12" height="12" fill="#e600ff"/><rect x="219" y="289" width="12" height="12" fill="#f600ff"/><rect x="229" y="289" width="12" height="12" fill="#ff00f9"/><rect x="239" y="289" width="12" height="12" fill="#ff00eb"/><rect x="249" y="289" width="12" height="12" fill="#ff00dd"/><rect x="259" y="289" width="12" height="12" fill="#ff00d1"/><rect x="269" y="289" width="12" height="12" fill="#ff00c6"/><rect x="279" y="289" width="12" height="12" fill="#ff00bc"/><rect x="289" y="289" width="12" height="12" fill="#ff00b2"/><rect x="299" y="289" width="12" height="12" fill="#ff00a9"/><rect x="309" y="289" width="12" height="12" fill="#ff00a0"/><rect x="319" y="289" width="12" height="12" fill="#ff0098"/><rect x="329" y="289" width="12" height="12" fill="#ff0090"/><rect x="339" y="289" width="12" height="12" fill="#ff0089"/><rect x="349" y="289" width="12" height="12" fill="#ff0081"/><rect x="359" y="289" width="12" height="12" fill="#ff007b"/><rect x="369" y="289" width="12" height="12" fill="#ff0074"/><rect x="379" y="289" width="12" height="12" fill="#ff006d"/><rect x="389" y="289" width="12" height="12" fill="#ff0067"/><rect x="399" y="289" width="12" height="12" fill="#ff0061"/><rect x="409" y="289" width="12" height="12" fill="#ff005a"/><rect x="419" y="289" width="12" height="12" fill="#ff0054"/><rect x="429" y="289" width="12" height="12" fill="#ff004e"/><rect x="439" y="289" width="12" height="12" fill="#ff0048"/><rect x="449" y="289" width="12" height="12" fill="#ff0042"/><rect x="459" y="289" width="12" height="12" fill="#ff003c"/><rect x="469" y="289" width="12" height="12" fill="#ff0036"/><rect x="479" y="289" width="12" height="12" fill="#ff0030"/><rect x="489" y="289" width="12" height="12" fill="#ff002a"/><rect x="499" y="289" width="12" height="12" fill="#ff0023"/><rect x="-1" y="299" width="12" height="12" fill="#0070ff"/><rect x="9" y="299" width="12" height="12" fill="#006cff"/><rect x="19" y="299" width="12" height="12" fill="#0067ff"/><rect x="29" y="299" width="12" height="12" fill="#0063ff"/><rect x="39" y="299" width="12" height="12" fill="#005eff"/><rect x="49" y="299" width="12" height="12" fill="#0059ff"/><rect x="59" y="299" width="12" height="12" fill="#0053ff"/><rect x="69" y="299" width="12" height="12" fill="#004dff"/><rect x="79" y="299" width="12" height="12" fill="#0046ff"/><rect x="89" y="299" width="12" height="12" fill="#003fff"/><rect x="99" y="299" width="12" height="12" fill="#2236ff"/><rect x="109" y="299" width="12" height="12" fill="#3d2cff"/><rect x="119" y="299" width="12" height="12" fill="#531fff"/><rect x="129" y="299" width="12" height="12" fill="#660dff"/><rect x="139" y="299" width="12" height="12" fill="#7700ff"/><rect x="149" y="299" width="12" height="12" fill="#8700ff"/><rect x="159" y="299" width="12" height="12" fill="#9700ff"/><rect x="169" y="299" width="12" height="12" fill="#a600ff"/><rect x="179" y="299" width="12" height="12" fill="#b500ff"/><rect x="189" y="299" width="12" height="12" fill="#c400ff"/><rect x="199" y="299" width="12" height="12" fill="#d200ff"/><rect x="209" y="299" width="12" height="12" fill="#e100ff"/><rect x="219" y="299" width="12" height="12" fill="#f000ff"/><rect x="229" y="299" width="12" height="12" fill="#fe00ff"/><rect x="239" y="299" width="12" height="12" fill="#ff00f1"/><rect x="249" y="299" width="12" height="12" fill="#ff00e4"/><rect x="259" y="299" width="12" height="12" fill="#ff00d8"/><rect x="269" y="299" width="12" height="12" fill="#ff00cd"/><rect x="279" y="299" width="12" height="12" fill="#ff00c3"/><rect x="289" y="299" width="12" height="12" fill="#ff00b9"/><rect x="299" y="299" width="12" height="12" fill="#ff00b0"/><rect x="309" y="299" width="12" height="12" fill="#ff00a7"/><rect x="319" y="299" width="12" height="12" fill="#ff009f"/><rect x="329" y="299" width="12" height="12" fill="#ff0097"/><rect x="339" y="299" width="12" height="12" fill="#ff0090"/><rect x="349" y="299" width="12" height="12" fill="#ff0088"/><rect x="359" y="299" width="12" height="12" fill="#ff0081"/><rect x="369" y="299" width="12" height="12" fill="#ff007b"/><rect x="379" y="299" width="12" height="12" fill="#ff0074"/><rect x="389" y="299" width="12" height="12" fill="#ff006e"/><rect x="399" y="299" width="12" height="12" fill="#ff0068"/><rect x="409" y="299" width="12" height="12" fill="#ff0062"/><rect x="419" y="299" width="12" height="12" fill="#ff005c"/><rect x="429" y="299" width="12" height="12" fill="#ff0056"/><rect x="439" y="299" width="12" height="12" fill="#ff0050"/><rect x="449" y="299" width="12" height="12" fill="#ff004b"/><rect x="459" y="299" width="12" height="12" fill="#ff0045"/><rect x="469" y="299" width="12" height="12" fill="#ff003f"/><rect x="479" y="299" width="12" height="12" fill="#ff0039"/><rect x="489" y="299" width="12" height="12" fill="#ff0034"/><rect x="499" y="299" width="12" height="12" fill="#ff002e"/><rect x="-1" y="309" width="12" height="12" fill="#005eff"/><rect x="9" y="309" width="12" height="12" fill="#0059ff"/><rect x="19" y="309" width="12" height="12" fill="#0054ff"/><rect x="29" y="309" width="12" height="12" fill="#004fff"/><rect x="39" y="309" width="12" height="12" fill="#0049ff"/><rect x="49" y="309" width="12" height="12" fill="#0042ff"/><rect x="59" y="309" width="12" height="12" fill="#003bff"/><rect x="69" y="309" width="12" height="12" fill="#0032ff"/><rect x="79" y="309" width="12" height="12" fill="#0029ff"/><rect x="89" y="309" width="12" height="12" fill="#001dff"/><rect x="99" y="309" width="12" height="12" fill="#260bff"/><rect x="109" y="309" width="12" height="12" fill="#3f00ff"/><rect x="119" y="309" width="12" height="12" fill="#5300ff"/><rect x="129" y="309" width="12" height="12" fill="#6500ff"/><rect x="139" y="309" width="12" height="12" fill="#7600ff"/><rect x="149" y="309" width="12" height="12" fill="#8600ff"/><rect x="159" y="309" width="12" height="12" fill="#9500ff"/><rect x="169" y="309" width="12" height="12" fill="#a300ff"/><rect x="179" y="309" width="12" height="12" fill="#b200ff"/><rect x="189" y="309" width="12" height="12" fill="#c000ff"/><rect x="199" y="309" width="12" height="12" fill="#ce00ff"/><rect x="209" y="309" width="12" height="12" fill="#dc00ff"/><rect x="219" y="309" width="12" height="12" fill="#ea00ff"/><rect x="229" y="309" width="12" height="12" fill="#f800ff"/><rect x="239" y="309" width="12" height="12" fill="#ff00f8"/><rect x="249" y="309" width="12" height="12" fill="#ff00eb"/><rect x="259" y="309" width="12" height="12" fill="#ff00df"/><rect x="269" y="309" width="12" height="12" fill="#ff00d3"/><rect x="279" y="309" width="12" height="12" fill="#ff00c9"/><rect x="289" y="309" width="12" height="12" fill="#ff00bf"/><rect x="299" y="309" width="12" height="12" fill="#ff00b6"/><rect x="309" y="309" width="12" height="12" fill="#ff00ae"/><rect x="319" y="309" width="12" height="12" fill="#ff00a5"/><rect x="329" y="309" width="12" height="12" fill="#ff009e"/><rect x="339" y="309" width="12" height="12" fill="#ff0096"/><rect x="349" y="309" width="12" height="12" fill="#ff008f"/><rect x="359" y="309" width="12" height="12" fill="#ff0088"/><rect x="369" y="309" width="12" height="12" fill="#ff0081"/><rect x="379" y="309" width="12" height="12" fill="#ff007b"/><rect x="389" y="309" width="12" height="12" fill="#ff0075"/><rect x="399" y="309" width="12" height="12" fill="#ff006f"/><rect x="409" y="309" width="12" height="12" fill="#ff0069"/><rect x="419" y="309" width="12" height="12" fill="#ff0063"/><rect x="429" y="309" width="12" height="12" fill="#ff005d"/><rect x="439" y="309" width="12" height="12" fill="#ff0058"/><rect x="449" y="309" width="12" height="12" fill="#ff0052"/><rect x="459" y="309" width="12" height="12" fill="#ff004d"/><rect x="469" y="309" width="12" height="12" fill="#ff0047"/><rect x="479" y="309" width="12" height="12" fill="#ff0042"/><rect x="489" y="309" width="12" height="12" fill="#ff003c"/><rect x="499" y="309" width="12" height="12" fill="#ff0037"/><rect x="-1" y="319" width="12" height="12" fill="#004bff"/><rect x="9" y="319" width="12" height="12" fill="#0045ff"/><rect x="19" y="319" width="12" height="12" fill="#003fff"/><rect x="29" y="319" width="12" height="12" fill="#0037ff"/><rect x="39" y="319" width="12" height="12" fill="#002fff"/><rect x="49" y="319" width="12" height="12" fill="#0026ff"/><rect x="59" y="319" width="12" height="12" fill="#001bff"/><rect x="69" y="319" width="12" height="12" fill="#000aff"/><rect x="79" y="319" width="12" height="12" fill="#0000ff"/><rect x="89" y="319" width="12" height="12" fill="#0300ff"/><rect x="99" y="319" width="12" height="12" fill="#2900ff"/><rect x="109" y="319" width="12" height="12" fill="#4000ff"/><rect x="119" y="319" width="12" height="12" fill="#5400ff"/><rect x="129" y="319" width="12" height="12" fill="#6500ff"/><rect x="139" y="319" width="12" height="12" fill="#7500ff"/><rect x="149" y="319" width="12" height="12" fill="#8400ff"/><rect x="159" y="319" width="12" height="12" fill="#9300ff"/><rect x="169" y="319" width="12" height="12" fill="#a100ff"/><rect x="179" y="319" width="12" height="12" fill="#af00ff"/><rect x="189" y="319" width="12" height="12" fill="#bc00ff"/><rect x="199" y="319" width="12" height="12" fill="#ca00ff"/><rect x="209" y="319" width="12" height="12" fill="#d700ff"/><rect x="219" y="319" width="12" height="12" fill="#e500ff"/><rect x="229" y="319" width="12" height="12" fill="#f200ff"/><rect x="239" y="319" width="12" height="12" fill="#ff00fe"/><rect x="249" y="319" width="12" height="12" fill="#ff00f1"/><rect x="259" y="319" width="12" height="12" fill="#ff00e5"/><rect x="269" y="319" width="12" height="12" fill="#ff00da"/><rect x="279" y="319" width="12" height="12" fill="#ff00cf"/><rect x="289" y="319" width="12" height="12" fill="#ff00c6"/><rect x="299" y="319" width="12" height="12" fill="#ff00bc"/><rect x="309" y="319" width="12" height="12" fill="#ff00b4"/><rect x="319" y="319" width="12" height="12" fill="#ff00ac"/><rect x="329" y="319" width="12" height="12" fill="#ff00a4"/><rect x="339" y="319" width="12" height="12" fill="#ff009c"/><rect x="349" y="319" width="12" height="12" fill="#ff0095"/><rect x="359" y="319" width="12" height="12" fill="#ff008e"/><rect x="369" y="319" width="12" height="12" fill="#ff0088"/><rect x="379" y="319" width="12" height="12" fill="#ff0081"/><rect x="389" y="319" width="12" height="12" fill="#ff007b"/><rect x="399" y="319" width="12" height="12" fill="#ff0075"/><rect x="409" y="319" width="12" height="12" fill="#ff0070"/><rect x="419" y="319" width="12" height="12" fill="#ff006a"/><rect x="429" y="319" width="12" height="12" fill="#ff0064"/><rect x="439" y="319" width="12" height="12" fill="#ff005f"/><rect x="449" y="319" width="12" height="12" fill="#ff0059"/><rect x="459" y="319" width="12" height="12" fill="#ff0054"/><rect x="469" y="319" width="12" height="12" fill="#ff004f"/><rect x="479" y="319" width="12" height="12" fill="#ff004a"/><rect x="489" y="319" width="12" height="12" fill="#ff0044"/><rect x="499" y="319" width="12" height="12" fill="#ff003f"/><rect x="-1" y="329" width="12" height="12" fill="#0035ff"/><rect x="9" y="329" width="12" height="12" fill="#002dff"/><rect x="19" y="329" width="12" height="12" fill="#0024ff"/><rect x="29" y="329" width="12" height="12" fill="#0019ff"/><rect x="39" y="329" width="12" height="12" fill="#000aff"/><rect x="49" y="329" width="12" height="12" fill="#0000ff"/><rect x="59" y="329" width="12" height="12" fill="#0000ff"/><rect x="69" y="329" width="12" height="12" fill="#0000ff"/><rect x="79" y="329" width="12" height="12" fill="#0000ff"/><rect x="89" y="329" width="12" height="12" fill="#0a00ff"/><rect x="99" y="329" width="12" height="12" fill="#2c00ff"/><rect x="109" y="329" width="12" height="12" fill="#4200ff"/><rect x="119" y="329" width="12" height="12" fill="#5400ff"/><rect x="129" y="329" width="12" height="12" fill="#6500ff"/><rect x="139" y="329" width="12" height="12" fill="#7400ff"/><rect x="149" y="329" width="12" height="12" fill="#8300ff"/><rect x="159" y="329" width="12" height="12" fill="#9100ff"/><rect x="169" y="329" width="12" height="12" fill="#9f00ff"/><rect x="179" y="329" width="12" height="12" fill="#ac00ff"/><rect x="189" y="329" width="12" height="12" fill="#b900ff"/><rect x="199" y="329" width="12" height="12" fill="#c600ff"/><rect x="209" y="329" width="12" height="12" fill="#d300ff"/><rect x="219" y="329" width="12" height="12" fill="#e000ff"/><rect x="229" y="329" width="12" height="12" fill="#ed00ff"/><rect x="239" y="329" width="12" height="12" fill="#fa00ff"/><rect x="249" y="329" width="12" height="12" fill="#ff00f7"/><rect x="259" y="329" width="12" height="12" fill="#ff00eb"/><rect x="269" y="329" width="12" height="12" fill="#ff00e0"/><rect x="279" y="329" width="12" height="12" fill="#ff00d5"/><rect x="289" y="329" width="12" height="12" fill="#ff00cc"/><rect x="299" y="329" width="12" height="12" fill="#ff00c2"/><rect x="309" y="329" width="12" height="12" fill="#ff00ba"/><rect x="319" y="329" width="12" height="12" fill="#ff00b2"/><rect x="329" y="329" width="12" height="12" fill="#ff00aa"/><rect x="339" y="329" width="12" height="12" fill="#ff00a2"/><rect x="349" y="329" width="12" height="12" fill="#ff009b"/><rect x="359" y="329" width="12" height="12" fill="#ff0094"/><rect x="369" y="329" width="12" height="12" fill="#ff008e"/><rect x="379" y="329" width="12" height="12" fill="#ff0088"/><rect x="389" y="329" width="12" height="12" fill="#ff0081"/><rect x="399" y="329" width="12" height="12" fill="#ff007c"/><rect x="409" y="329" width="12" height="12" fill="#ff0076"/><rect x="419" y="329" width="12" height="12" fill="#ff0070"/><rect x="429" y="329" width="12" height="12" fill="#ff006b"/><rect x="439" y="329" width="12" height="12" fill="#ff0065"/><rect x="449" y="329" width="12" height="12" fill="#ff0060"/><rect x="459" y="329" width="12" height="12" fill="#ff005b"/><rect x="469" y="329" width="12" height="12" fill="#ff0056"/><rect x="479" y="329" width="12" height="12" fill="#ff0051"/><rect x="489" y="329" width="12" height="12" fill="#ff004c"/><rect x="499" y="329" width="12" height="12" fill="#ff0046"/><rect x="-1" y="339" width="12" height="12" fill="#0029ff"/><rect x="9" y="339" width="12" height="12" fill="#001fff"/><rect x="19" y="339" width="12" height="12" fill="#0013ff"/><rect x="29" y="339" width="12" height="12" fill="#0003ff"/><rect x="39" y="339" width="12" height="12" fill="#0000ff"/><rect x="49" y="339" width="12" height="12" fill="#0000ff"/><rect x="59" y="339" width="12" height="12" fill="#0000ff"/><rect x="69" y="339" width="12" height="12" fill="#0000ff"/><rect x="79" y="339" width="12" height="12" fill="#0000ff"/><rect x="89" y="339" width="12" height="12" fill="#0d00ff"/><rect x="99" y="339" width="12" height="12" fill="#2d00ff"/><rect x="109" y="339" width="12" height="12" fill="#4200ff"/><rect x="119" y="339" width="12" height="12" fill="#5500ff"/><rect x="129" y="339" width="12" height="12" fill="#6500ff"/><rect x="139" y="339" width="12" height="12" fill="#7400ff"/><rect x="149" y="339" width="12" height="12" fill="#8200ff"/><rect x="159" y="339" width="12" height="12" fill="#9000ff"/><rect x="169" y="339" width="12" height="12" fill="#9e00ff"/><rect x="179" y="339" width="12" height="12" fill="#ab00ff"/><rect x="189" y="339" width="12" height="12" fill="#b800ff"/><rect x="199" y="339" width="12" height="12" fill="#c400ff"/><rect x="209" y="339" width="12" height="12" fill="#d100ff"/><rect x="219" y="339" width="12" height="12" fill="#de00ff"/><rect x="229" y="339" width="12" height="12" fill="#eb00ff"/><rect x="239" y="339" width="12" height="12" fill="#f800ff"/><rect x="249" y="339" width="12" height="12" fill="#ff00fa"/><rect x="259" y="339" width="12" height="12" fill="#ff00ed"/><rect x="269" y="339" width="12" height="12" fill="#ff00e2"/><rect x="279" y="339" width="12" height="12" fill="#ff00d8"/><rect x="289" y="339" width="12" height="12" fill="#ff00ce"/><rect x="299" y="339" width="12" height="12" fill="#ff00c5"/><rect x="309" y="339" width="12" height="12" fill="#ff00bc"/><rect x="319" y="339" width="12" height="12" fill="#ff00b4"/><rect x="329" y="339" width="12" height="12" fill="#ff00ac"/><rect x="339" y="339" width="12" height="12" fill="#ff00a5"/><rect x="349" y="339" width="12" height="12" fill="#ff009e"/><rect x="359" y="339" width="12" height="12" fill="#ff0097"/><rect x="369" y="339" width="12" height="12" fill="#ff0091"/><rect x="379" y="339" width="12" height="12" fill="#ff008a"/><rect x="389" y="339" width="12" height="12" fill="#ff0084"/><rect x="399" y="339" width="12" height="12" fill="#ff007e"/><rect x="409" y="339" width="12" height="12" fill="#ff0079"/><rect x="419" y="339" width="12" height="12" fill="#ff0073"/><rect x="429" y="339" width="12" height="12" fill="#ff006e"/><rect x="439" y="339" width="12" height="12" fill="#ff0068"/><rect x="449" y="339" width="12" height="12" fill="#ff0063"/><rect x="459" y="339" width="12" height="12" fill="#ff005e"/><rect x="469" y="339" width="12" height="12" fill="#ff0059"/><rect x="479" y="339" width="12" height="12" fill="#ff0054"/><rect x="489" y="339" width="12" height="12" fill="#ff004f"/><rect x="499" y="339" width="12" height="12" fill="#ff004a"/></g></g></svg>
<canvas id="cie" class="abs" style="left:95px;top:51px" width="503" height="344"></canvas>
<svg style="left:95px;top:51px" width="503" height="344"><path d="M63.5 0 V344 M126.5 0 V344 M189.5 0 V344 M252.5 0 V344 M314.5 0 V344 M377.5 0 V344 M440.5 0 V344 M0 305.5 H503 M0 267.5 H503 M0 229.5 H503 M0 191.5 H503 M0 153.5 H503 M0 114.5 H503 M0 76.5 H503 M0 38.5 H503" stroke="#fff" stroke-width="1.2" stroke-dasharray="1.4 2.3" opacity="0.3"/></svg>
<svg style="left:95px;top:51px" width="503" height="344"><circle cx="64.5" cy="152.6" r="2.8" fill="#a09850" stroke="#f0dc90" stroke-width="1.6"/><circle cx="154.9" cy="77.6" r="2.8" fill="#a09850" stroke="#f0dc90" stroke-width="1.6"/><circle cx="371.4" cy="186.9" r="2.8" fill="#a09850" stroke="#f0dc90" stroke-width="1.6"/><circle cx="434.8" cy="230.4" r="2.8" fill="#a09850" stroke="#f0dc90" stroke-width="1.6"/><circle cx="100.9" cy="335.8" r="2.8" fill="#a09850" stroke="#f0dc90" stroke-width="1.6"/><path d="M182.1 164.0 H189.1 M185.6 160.5 V167.5" stroke="#1a3a8a" stroke-width="1.6"/></svg>
<svg style="left:0;top:0" width="120" height="420"><path d="M92 391 L99 398 M99 391 L92 398" stroke="#383838" stroke-width="1.3" opacity="0.85"/></svg>
<svg style="left:0;top:0" width="100" height="420"><path d="M84.5 51.0 V394.9 M73 394.5 H85 M79 387.5 H85 M79 379.5 H85 M79 372.5 H85 M79 364.5 H85 M73 356.5 H85 M79 349.5 H85 M79 341.5 H85 M79 333.5 H85 M79 326.5 H85 M73 318.5 H85 M79 310.5 H85 M79 303.5 H85 M79 295.5 H85 M79 288.5 H85 M73 280.5 H85 M79 272.5 H85 M79 265.5 H85 M79 257.5 H85 M79 249.5 H85 M73 242.5 H85 M79 234.5 H85 M79 226.5 H85 M79 219.5 H85 M79 211.5 H85 M73 204.5 H85 M79 196.5 H85 M79 188.5 H85 M79 181.5 H85 M79 173.5 H85 M73 165.5 H85 M79 158.5 H85 M79 150.5 H85 M79 143.5 H85 M79 135.5 H85 M73 127.5 H85 M79 120.5 H85 M79 112.5 H85 M79 104.5 H85 M79 97.5 H85 M73 89.5 H85 M79 81.5 H85 M79 74.5 H85 M79 66.5 H85 M79 59.5 H85 M73 51.5 H85" stroke="#202020" stroke-width="1.4"/></svg>
<div class="t" style="right:932px;top:386.4px;font-size:15px;letter-spacing:0.4px;color:#202020;-webkit-text-stroke:0.2px #303030;">0</div>
<div class="t" style="right:932px;top:348.2px;font-size:15px;letter-spacing:0.4px;color:#202020;-webkit-text-stroke:0.2px #303030;">0,1</div>
<div class="t" style="right:932px;top:310.1px;font-size:15px;letter-spacing:0.4px;color:#202020;-webkit-text-stroke:0.2px #303030;">0,2</div>
<div class="t" style="right:932px;top:271.9px;font-size:15px;letter-spacing:0.4px;color:#202020;-webkit-text-stroke:0.2px #303030;">0,3</div>
<div class="t" style="right:932px;top:233.8px;font-size:15px;letter-spacing:0.4px;color:#202020;-webkit-text-stroke:0.2px #303030;">0,4</div>
<div class="t" style="right:932px;top:195.6px;font-size:15px;letter-spacing:0.4px;color:#202020;-webkit-text-stroke:0.2px #303030;">0,5</div>
<div class="t" style="right:932px;top:157.4px;font-size:15px;letter-spacing:0.4px;color:#202020;-webkit-text-stroke:0.2px #303030;">0,6</div>
<div class="t" style="right:932px;top:119.3px;font-size:15px;letter-spacing:0.4px;color:#202020;-webkit-text-stroke:0.2px #303030;">0,7</div>
<div class="t" style="right:932px;top:81.1px;font-size:15px;letter-spacing:0.4px;color:#202020;-webkit-text-stroke:0.2px #303030;">0,8</div>
<div class="t" style="right:932px;top:43.0px;font-size:15px;letter-spacing:0.4px;color:#202020;-webkit-text-stroke:0.2px #303030;">0,9</div>
<svg style="left:0;top:0" width="620" height="420"><path d="M95.5 405.5 H598.1 M96.5 405 V416 M108.5 405 V411 M121.5 405 V411 M133.5 405 V411 M146.5 405 V411 M158.5 405 V416 M171.5 405 V411 M183.5 405 V411 M196.5 405 V411 M208.5 405 V411 M221.5 405 V416 M234.5 405 V411 M246.5 405 V411 M259.5 405 V411 M271.5 405 V411 M284.5 405 V416 M296.5 405 V411 M309.5 405 V411 M321.5 405 V411 M334.5 405 V411 M347.5 405 V416 M359.5 405 V411 M372.5 405 V411 M384.5 405 V411 M397.5 405 V411 M409.5 405 V416 M422.5 405 V411 M434.5 405 V411 M447.5 405 V411 M460.5 405 V411 M472.5 405 V416 M485.5 405 V411 M497.5 405 V411 M510.5 405 V411 M522.5 405 V411 M535.5 405 V416 M547.5 405 V411 M560.5 405 V411 M572.5 405 V411 M585.5 405 V411 M598.5 405 V416" stroke="#202020" stroke-width="1.4"/></svg>
<div class="t" style="left:55.5px;width:80px;text-align:center;top:420px;font-size:15px;letter-spacing:0.4px;color:#202020;-webkit-text-stroke:0.2px #303030;">0</div>
<div class="t" style="left:118.3px;width:80px;text-align:center;top:420px;font-size:15px;letter-spacing:0.4px;color:#202020;-webkit-text-stroke:0.2px #303030;">0,1</div>
<div class="t" style="left:181.0px;width:80px;text-align:center;top:420px;font-size:15px;letter-spacing:0.4px;color:#202020;-webkit-text-stroke:0.2px #303030;">0,2</div>
<div class="t" style="left:243.8px;width:80px;text-align:center;top:420px;font-size:15px;letter-spacing:0.4px;color:#202020;-webkit-text-stroke:0.2px #303030;">0,3</div>
<div class="t" style="left:306.5px;width:80px;text-align:center;top:420px;font-size:15px;letter-spacing:0.4px;color:#202020;-webkit-text-stroke:0.2px #303030;">0,4</div>
<div class="t" style="left:369.3px;width:80px;text-align:center;top:420px;font-size:15px;letter-spacing:0.4px;color:#202020;-webkit-text-stroke:0.2px #303030;">0,5</div>
<div class="t" style="left:432.1px;width:80px;text-align:center;top:420px;font-size:15px;letter-spacing:0.4px;color:#202020;-webkit-text-stroke:0.2px #303030;">0,6</div>
<div class="t" style="left:494.8px;width:80px;text-align:center;top:420px;font-size:15px;letter-spacing:0.4px;color:#202020;-webkit-text-stroke:0.2px #303030;">0,7</div>
<div class="t" style="left:557.6px;width:80px;text-align:center;top:420px;font-size:15px;letter-spacing:0.4px;color:#202020;-webkit-text-stroke:0.2px #303030;">0,8</div>
<div class="t" style="left:339px;top:440px;font-size:21px;color:#101010;-webkit-text-stroke:0.5px #101010">x</div>
<div class="t" style="left:30.5px;top:221.5px;font-size:21px;color:#101010;-webkit-text-stroke:0.5px #101010;transform:translate(-50%,-50%) rotate(-90deg)">y</div>
<svg style="left:30px;top:465px" width="20" height="20"><path d="M6.5 9 H16.5 M11.5 5.5 V12.5" stroke="#383890" stroke-width="1.6"/></svg>
<div class="t" style="left:54.40px;top:467.23px;font-size:14.5px;color:#101010;transform:scaleX(0.9589);transform-origin:0 0;-webkit-text-stroke:0.2px #303030;">Zielfarbort</div>
<svg style="left:30px;top:500px" width="20" height="20"><circle cx="10" cy="9" r="2.6" fill="none" stroke="#202020" stroke-width="1.5"/><path d="M12.5 9 H17" stroke="#202020" stroke-width="1.5"/></svg>
<div class="t" style="left:54.40px;top:501.53px;font-size:14.5px;color:#101010;transform:scaleX(0.9209);transform-origin:0 0;-webkit-text-stroke:0.2px #303030;">Observer-Farbort d. Summe d. Regel-LEDs</div>
<svg style="left:325px;top:465px" width="20" height="20"><path d="M4.5 8.6 H15.5 M7 6 L12.5 12 M12.5 6 L7 12" stroke="#202020" stroke-width="1.3"/></svg>
<div class="t" style="left:347.60px;top:467.23px;font-size:14.5px;color:#101010;transform:scaleX(0.9126);transform-origin:0 0;-webkit-text-stroke:0.2px #303030;">Sensor-Farbort d. Summe d. Regel-LEDs</div>
<svg style="left:325px;top:498px" width="20" height="20"><circle cx="9.9" cy="9.8" r="2.6" fill="#a8a050" stroke="#e8e480" stroke-width="1.4"/></svg>
<div class="t" style="left:347.60px;top:501.53px;font-size:14.5px;color:#101010;transform:scaleX(0.9086);transform-origin:0 0;-webkit-text-stroke:0.2px #303030;">Farborte der Regel-LEDs</div>
<div class="abs" style="left:620px;top:52px;width:5px;height:427px;background:#858380"></div>
<div class="abs" style="left:625px;top:52px;width:2px;height:427px;background:#f4f2ee"></div>
<div class="abs" style="left:616px;top:419px;width:13px;height:14px;box-sizing:border-box;background:#e4e0d8;border-top:1px solid #fff;border-left:1px solid #fff;border-right:2px solid #808080;border-bottom:1px solid #808080"></div>
<div class="abs" style="left:616px;top:433px;width:13px;height:14px;box-sizing:border-box;background:#e4e0d8;border-top:1px solid #fff;border-left:1px solid #fff;border-right:2px solid #808080;border-bottom:1px solid #808080"></div>
<svg style="left:0;top:0" width="1000" height="500"><path d="M636.5 56 V474.5 M636 56.5 H647 M636 98.5 H644 M636 140.5 H647 M636 181.5 H644 M636 223.5 H647 M636 265.5 H644 M636 307.5 H647 M636 349.5 H644 M636 390.5 H647 M636 432.5 H644 M636 474.5 H647" stroke="#202020" stroke-width="1.4"/></svg>
<div class="t" style="left:652.6px;top:48.7px;font-size:14px;letter-spacing:0.5px;color:#101010;-webkit-text-stroke:0.2px #303030;">1</div>
<div class="t" style="left:652.6px;top:132.3px;font-size:14px;letter-spacing:0.5px;color:#101010;-webkit-text-stroke:0.2px #303030;">0,8</div>
<div class="t" style="left:652.6px;top:215.9px;font-size:14px;letter-spacing:0.5px;color:#101010;-webkit-text-stroke:0.2px #303030;">0,6</div>
<div class="t" style="left:652.6px;top:299.5px;font-size:14px;letter-spacing:0.5px;color:#101010;-webkit-text-stroke:0.2px #303030;">0,4</div>
<div class="t" style="left:652.6px;top:383.1px;font-size:14px;letter-spacing:0.5px;color:#101010;-webkit-text-stroke:0.2px #303030;">0,2</div>
<div class="t" style="left:652.6px;top:466.7px;font-size:14px;letter-spacing:0.5px;color:#101010;-webkit-text-stroke:0.2px #303030;">0</div>
<div class="abs" style="left:617px;top:497px;width:64px;height:22px;box-sizing:border-box;background:#fff;border-top:2px solid #707070;border-left:2px solid #707070;border-right:1px solid #f0eee8;border-bottom:1px solid #f0eee8"></div>
<div class="t" style="left:621.20px;top:502.53px;font-size:14.5px;color:#101010;transform:scaleX(0.9480);transform-origin:0 0;-webkit-text-stroke:0.2px #303030;">0,100</div>
<div class="abs" style="left:661px;top:499px;width:19px;height:10px;box-sizing:border-box;background:#d4d0c8;border-top:1px solid #f4f2ee;border-left:1px solid #f4f2ee;border-right:2px solid #606060;border-bottom:2px solid #606060"></div>
<div class="abs" style="left:661px;top:508px;width:19px;height:10px;box-sizing:border-box;background:#d4d0c8;border-top:1px solid #f4f2ee;border-left:1px solid #f4f2ee;border-right:2px solid #606060;border-bottom:2px solid #606060"></div>
<svg style="left:661px;top:499px" width="19" height="19"><path d="M7.5 5.5 L10.5 5.5 L9 4Z M7.5 13.5 L10.5 13.5 L9 15Z" fill="#000" stroke="#000" stroke-width="0.9"/></svg>
<div class="abs" style="left:695px;top:52px;width:5px;height:427px;background:#858380"></div>
<div class="abs" style="left:700px;top:52px;width:2px;height:427px;background:#f4f2ee"></div>
<div class="abs" style="left:691px;top:419px;width:13px;height:14px;box-sizing:border-box;background:#e4e0d8;border-top:1px solid #fff;border-left:1px solid #fff;border-right:2px solid #808080;border-bottom:1px solid #808080"></div>
<div class="abs" style="left:691px;top:433px;width:13px;height:14px;box-sizing:border-box;background:#e4e0d8;border-top:1px solid #fff;border-left:1px solid #fff;border-right:2px solid #808080;border-bottom:1px solid #808080"></div>
<svg style="left:0;top:0" width="1000" height="500"><path d="M711.5 56 V474.5 M711 56.5 H722 M711 98.5 H719 M711 140.5 H722 M711 181.5 H719 M711 223.5 H722 M711 265.5 H719 M711 307.5 H722 M711 349.5 H719 M711 390.5 H722 M711 432.5 H719 M711 474.5 H722" stroke="#202020" stroke-width="1.4"/></svg>
<div class="t" style="left:727.6px;top:48.7px;font-size:14px;letter-spacing:0.5px;color:#101010;-webkit-text-stroke:0.2px #303030;">1</div>
<div class="t" style="left:727.6px;top:132.3px;font-size:14px;letter-spacing:0.5px;color:#101010;-webkit-text-stroke:0.2px #303030;">0,8</div>
<div class="t" style="left:727.6px;top:215.9px;font-size:14px;letter-spacing:0.5px;color:#101010;-webkit-text-stroke:0.2px #303030;">0,6</div>
<div class="t" style="left:727.6px;top:299.5px;font-size:14px;letter-spacing:0.5px;color:#101010;-webkit-text-stroke:0.2px #303030;">0,4</div>
<div class="t" style="left:727.6px;top:383.1px;font-size:14px;letter-spacing:0.5px;color:#101010;-webkit-text-stroke:0.2px #303030;">0,2</div>
<div class="t" style="left:727.6px;top:466.7px;font-size:14px;letter-spacing:0.5px;color:#101010;-webkit-text-stroke:0.2px #303030;">0</div>
<div class="abs" style="left:692px;top:497px;width:64px;height:22px;box-sizing:border-box;background:#fff;border-top:2px solid #707070;border-left:2px solid #707070;border-right:1px solid #f0eee8;border-bottom:1px solid #f0eee8"></div>
<div class="t" style="left:696.20px;top:502.53px;font-size:14.5px;color:#101010;transform:scaleX(0.9480);transform-origin:0 0;-webkit-text-stroke:0.2px #303030;">0,100</div>
<div class="abs" style="left:736px;top:499px;width:19px;height:10px;box-sizing:border-box;background:#d4d0c8;border-top:1px solid #f4f2ee;border-left:1px solid #f4f2ee;border-right:2px solid #606060;border-bottom:2px solid #606060"></div>
<div class="abs" style="left:736px;top:508px;width:19px;height:10px;box-sizing:border-box;background:#d4d0c8;border-top:1px solid #f4f2ee;border-left:1px solid #f4f2ee;border-right:2px solid #606060;border-bottom:2px solid #606060"></div>
<svg style="left:736px;top:499px" width="19" height="19"><path d="M7.5 5.5 L10.5 5.5 L9 4Z M7.5 13.5 L10.5 13.5 L9 15Z" fill="#000" stroke="#000" stroke-width="0.9"/></svg>
<div class="abs" style="left:770px;top:52px;width:5px;height:427px;background:#858380"></div>
<div class="abs" style="left:775px;top:52px;width:2px;height:427px;background:#f4f2ee"></div>
<div class="abs" style="left:766px;top:419px;width:13px;height:14px;box-sizing:border-box;background:#e4e0d8;border-top:1px solid #fff;border-left:1px solid #fff;border-right:2px solid #808080;border-bottom:1px solid #808080"></div>
<div class="abs" style="left:766px;top:433px;width:13px;height:14px;box-sizing:border-box;background:#e4e0d8;border-top:1px solid #fff;border-left:1px solid #fff;border-right:2px solid #808080;border-bottom:1px solid #808080"></div>
<svg style="left:0;top:0" width="1000" height="500"><path d="M786.5 56 V474.5 M786 56.5 H797 M786 98.5 H794 M786 140.5 H797 M786 181.5 H794 M786 223.5 H797 M786 265.5 H794 M786 307.5 H797 M786 349.5 H794 M786 390.5 H797 M786 432.5 H794 M786 474.5 H797" stroke="#202020" stroke-width="1.4"/></svg>
<div class="t" style="left:802.6px;top:48.7px;font-size:14px;letter-spacing:0.5px;color:#101010;-webkit-text-stroke:0.2px #303030;">1</div>
<div class="t" style="left:802.6px;top:132.3px;font-size:14px;letter-spacing:0.5px;color:#101010;-webkit-text-stroke:0.2px #303030;">0,8</div>
<div class="t" style="left:802.6px;top:215.9px;font-size:14px;letter-spacing:0.5px;color:#101010;-webkit-text-stroke:0.2px #303030;">0,6</div>
<div class="t" style="left:802.6px;top:299.5px;font-size:14px;letter-spacing:0.5px;color:#101010;-webkit-text-stroke:0.2px #303030;">0,4</div>
<div class="t" style="left:802.6px;top:383.1px;font-size:14px;letter-spacing:0.5px;color:#101010;-webkit-text-stroke:0.2px #303030;">0,2</div>
<div class="t" style="left:802.6px;top:466.7px;font-size:14px;letter-spacing:0.5px;color:#101010;-webkit-text-stroke:0.2px #303030;">0</div>
<div class="abs" style="left:767px;top:497px;width:64px;height:22px;box-sizing:border-box;background:#fff;border-top:2px solid #707070;border-left:2px solid #707070;border-right:1px solid #f0eee8;border-bottom:1px solid #f0eee8"></div>
<div class="t" style="left:771.20px;top:502.53px;font-size:14.5px;color:#101010;transform:scaleX(0.9480);transform-origin:0 0;-webkit-text-stroke:0.2px #303030;">0,100</div>
<div class="abs" style="left:811px;top:499px;width:19px;height:10px;box-sizing:border-box;background:#d4d0c8;border-top:1px solid #f4f2ee;border-left:1px solid #f4f2ee;border-right:2px solid #606060;border-bottom:2px solid #606060"></div>
<div class="abs" style="left:811px;top:508px;width:19px;height:10px;box-sizing:border-box;background:#d4d0c8;border-top:1px solid #f4f2ee;border-left:1px solid #f4f2ee;border-right:2px solid #606060;border-bottom:2px solid #606060"></div>
<svg style="left:811px;top:499px" width="19" height="19"><path d="M7.5 5.5 L10.5 5.5 L9 4Z M7.5 13.5 L10.5 13.5 L9 15Z" fill="#000" stroke="#000" stroke-width="0.9"/></svg>
<div class="abs" style="left:845px;top:52px;width:5px;height:427px;background:#858380"></div>
<div class="abs" style="left:850px;top:52px;width:2px;height:427px;background:#f4f2ee"></div>
<div class="abs" style="left:841px;top:419px;width:13px;height:14px;box-sizing:border-box;background:#e4e0d8;border-top:1px solid #fff;border-left:1px solid #fff;border-right:2px solid #808080;border-bottom:1px solid #808080"></div>
<div class="abs" style="left:841px;top:433px;width:13px;height:14px;box-sizing:border-box;background:#e4e0d8;border-top:1px solid #fff;border-left:1px solid #fff;border-right:2px solid #808080;border-bottom:1px solid #808080"></div>
<svg style="left:0;top:0" width="1000" height="500"><path d="M861.5 56 V474.5 M861 56.5 H872 M861 98.5 H869 M861 140.5 H872 M861 181.5 H869 M861 223.5 H872 M861 265.5 H869 M861 307.5 H872 M861 349.5 H869 M861 390.5 H872 M861 432.5 H869 M861 474.5 H872" stroke="#202020" stroke-width="1.4"/></svg>
<div class="t" style="left:877.6px;top:48.7px;font-size:14px;letter-spacing:0.5px;color:#101010;-webkit-text-stroke:0.2px #303030;">1</div>
<div class="t" style="left:877.6px;top:132.3px;font-size:14px;letter-spacing:0.5px;color:#101010;-webkit-text-stroke:0.2px #303030;">0,8</div>
<div class="t" style="left:877.6px;top:215.9px;font-size:14px;letter-spacing:0.5px;color:#101010;-webkit-text-stroke:0.2px #303030;">0,6</div>
<div class="t" style="left:877.6px;top:299.5px;font-size:14px;letter-spacing:0.5px;color:#101010;-webkit-text-stroke:0.2px #303030;">0,4</div>
<div class="t" style="left:877.6px;top:383.1px;font-size:14px;letter-spacing:0.5px;color:#101010;-webkit-text-stroke:0.2px #303030;">0,2</div>
<div class="t" style="left:877.6px;top:466.7px;font-size:14px;letter-spacing:0.5px;color:#101010;-webkit-text-stroke:0.2px #303030;">0</div>
<div class="abs" style="left:842px;top:497px;width:64px;height:22px;box-sizing:border-box;background:#fff;border-top:2px solid #707070;border-left:2px solid #707070;border-right:1px solid #f0eee8;border-bottom:1px solid #f0eee8"></div>
<div class="t" style="left:846.20px;top:502.53px;font-size:14.5px;color:#101010;transform:scaleX(0.9480);transform-origin:0 0;-webkit-text-stroke:0.2px #303030;">0,100</div>
<div class="abs" style="left:886px;top:499px;width:19px;height:10px;box-sizing:border-box;background:#d4d0c8;border-top:1px solid #f4f2ee;border-left:1px solid #f4f2ee;border-right:2px solid #606060;border-bottom:2px solid #606060"></div>
<div class="abs" style="left:886px;top:508px;width:19px;height:10px;box-sizing:border-box;background:#d4d0c8;border-top:1px solid #f4f2ee;border-left:1px solid #f4f2ee;border-right:2px solid #606060;border-bottom:2px solid #606060"></div>
<svg style="left:886px;top:499px" width="19" height="19"><path d="M7.5 5.5 L10.5 5.5 L9 4Z M7.5 13.5 L10.5 13.5 L9 15Z" fill="#000" stroke="#000" stroke-width="0.9"/></svg>
<div class="abs" style="left:920px;top:52px;width:5px;height:427px;background:#858380"></div>
<div class="abs" style="left:925px;top:52px;width:2px;height:427px;background:#f4f2ee"></div>
<div class="abs" style="left:916px;top:419px;width:13px;height:14px;box-sizing:border-box;background:#e4e0d8;border-top:1px solid #fff;border-left:1px solid #fff;border-right:2px solid #808080;border-bottom:1px solid #808080"></div>
<div class="abs" style="left:916px;top:433px;width:13px;height:14px;box-sizing:border-box;background:#e4e0d8;border-top:1px solid #fff;border-left:1px solid #fff;border-right:2px solid #808080;border-bottom:1px solid #808080"></div>
<svg style="left:0;top:0" width="1000" height="500"><path d="M936.5 56 V474.5 M936 56.5 H947 M936 98.5 H944 M936 140.5 H947 M936 181.5 H944 M936 223.5 H947 M936 265.5 H944 M936 307.5 H947 M936 349.5 H944 M936 390.5 H947 M936 432.5 H944 M936 474.5 H947" stroke="#202020" stroke-width="1.4"/></svg>
<div class="t" style="left:952.6px;top:48.7px;font-size:14px;letter-spacing:0.5px;color:#101010;-webkit-text-stroke:0.2px #303030;">1</div>
<div class="t" style="left:952.6px;top:132.3px;font-size:14px;letter-spacing:0.5px;color:#101010;-webkit-text-stroke:0.2px #303030;">0,8</div>
<div class="t" style="left:952.6px;top:215.9px;font-size:14px;letter-spacing:0.5px;color:#101010;-webkit-text-stroke:0.2px #303030;">0,6</div>
<div class="t" style="left:952.6px;top:299.5px;font-size:14px;letter-spacing:0.5px;color:#101010;-webkit-text-stroke:0.2px #303030;">0,4</div>
<div class="t" style="left:952.6px;top:383.1px;font-size:14px;letter-spacing:0.5px;color:#101010;-webkit-text-stroke:0.2px #303030;">0,2</div>
<div class="t" style="left:952.6px;top:466.7px;font-size:14px;letter-spacing:0.5px;color:#101010;-webkit-text-stroke:0.2px #303030;">0</div>
<div class="abs" style="left:917px;top:497px;width:64px;height:22px;box-sizing:border-box;background:#fff;border-top:2px solid #707070;border-left:2px solid #707070;border-right:1px solid #f0eee8;border-bottom:1px solid #f0eee8"></div>
<div class="t" style="left:921.20px;top:502.53px;font-size:14.5px;color:#101010;transform:scaleX(0.9480);transform-origin:0 0;-webkit-text-stroke:0.2px #303030;">0,100</div>
<div class="abs" style="left:961px;top:499px;width:19px;height:10px;box-sizing:border-box;background:#d4d0c8;border-top:1px solid #f4f2ee;border-left:1px solid #f4f2ee;border-right:2px solid #606060;border-bottom:2px solid #606060"></div>
<div class="abs" style="left:961px;top:508px;width:19px;height:10px;box-sizing:border-box;background:#d4d0c8;border-top:1px solid #f4f2ee;border-left:1px solid #f4f2ee;border-right:2px solid #606060;border-bottom:2px solid #606060"></div>
<svg style="left:961px;top:499px" width="19" height="19"><path d="M7.5 5.5 L10.5 5.5 L9 4Z M7.5 13.5 L10.5 13.5 L9 15Z" fill="#000" stroke="#000" stroke-width="0.9"/></svg>
<div class="abs" style="left:20px;top:530px;width:961px;height:23px;box-sizing:border-box;background:#fff;border-top:1px solid #808080;border-left:1px solid #808080;border-right:1px solid #fff;border-bottom:1px solid #fff;box-shadow:inset 1px 1px 0 #404040,inset -1px -1px 0 #d4d0c8"></div>
<div class="abs" style="left:23px;top:533px;width:935px;height:17px;background:#0a246a"></div>
<div class="t" style="left:24.50px;top:534.73px;font-size:14.5px;color:#fff;transform:scaleX(0.8318);transform-origin:0 0;">TL84</div>
<div class="abs" style="left:960px;top:532px;width:19px;height:19px;box-sizing:border-box;background:#d4d0c8;border-top:1px solid #d4d0c8;border-left:1px solid #d4d0c8;border-right:1px solid #404040;border-bottom:1px solid #404040;box-shadow:inset 1px 1px 0 #fff,inset -1px -1px 0 #808080"></div>
<svg style="left:960px;top:532px" width="19" height="19"><path d="M5 7 H14 L9.5 12Z" fill="#000"/></svg>
<div class="abs" style="left:131px;top:574px;width:483px;height:234px;box-sizing:border-box;border-top:2px solid #808080;border-left:2px solid #808080;border-right:2px solid #fff;border-bottom:2px solid #fff"></div>
<div class="abs" style="left:169px;top:581px;width:412px;height:182px;background:linear-gradient(to right,#7a78e0 0%,#7a78e0 22%,#7aa0e0 24%,#70d0e8 30%,#78e4b0 35%,#80e080 40%,#b8e878 46%,#e8e070 52%,#e8c070 57%,#e8a070 60%,#e87a70 62%,#e87870 100%)"></div>
<svg style="left:169px;top:581px;overflow:hidden" width="412" height="182"><path d="M0.2,180.2 L2.2,179.5 L4.3,178.6 L6.4,177.4 L8.4,176.0 L10.5,174.4 L12.5,172.4 L14.6,170.0 L16.6,167.2 L18.7,164.0 L20.7,160.2 L22.8,155.9 L24.8,151.0 L26.9,145.5 L28.9,139.4 L31.0,132.7 L33.0,125.4 L35.1,117.6 L37.1,109.2 L39.2,100.3 L41.2,91.1 L43.3,81.6 L45.4,72.0 L47.4,62.4 L49.5,52.9 L51.5,43.8 L53.6,35.1 L55.6,27.1 L57.7,19.8 L59.7,13.6 L61.8,8.4 L63.8,4.4 L65.9,1.6 L67.9,0.3 L70.0,0.3 L72.0,1.6 L74.1,4.4 L76.1,8.4 L78.2,13.6 L80.3,19.8 L82.3,27.1 L84.4,35.1 L86.4,43.8 L88.5,52.9 L90.5,62.4 L92.6,72.0 L94.6,81.6 L96.7,91.1 L98.7,100.3 L100.8,109.2 L102.8,117.6 L104.9,125.4 L106.9,132.7 L109.0,139.4 L111.0,145.5 L113.1,151.0 L115.1,155.9 L117.2,160.2 L119.3,164.0 L121.3,167.2 L123.4,170.0 L125.4,172.4 L127.5,174.4 L129.5,176.0 L131.6,177.4 L133.6,178.6 L135.7,179.5 L137.7,180.2 L139.8,180.8 L141.8,181.3 L143.9,181.7 L145.9,182.0 L148.0,182.2 L150.0,182.3 L152.1,182.5 L154.2,182.6 L156.2,182.7 L158.3,182.7 L160.3,182.7 L162.4,182.8 L164.4,182.8 L166.5,182.8 L168.5,182.8 L170.6,182.8 L172.6,182.8 L174.7,182.8 L176.7,182.8 L178.8,182.8 L180.8,182.8 L182.9,182.8 L184.9,182.8 L187.0,182.8 L189.0,182.8 L191.1,182.8 L193.2,182.8 L195.2,182.8 L197.3,182.8 L199.3,182.8 L201.4,182.8 L203.4,182.8 L205.5,182.8 L207.5,182.8 L209.6,182.8 L211.6,182.8 L213.7,182.8 L215.7,182.8 L217.8,182.8 L219.8,182.8 L221.9,182.8 L223.9,182.8 L226.0,182.8 L228.1,182.8 L230.1,182.8 L232.2,182.8 L234.2,182.8 L236.3,182.8 L238.3,182.8 L240.4,182.8 L242.4,182.8 L244.5,182.8 L246.5,182.8 L248.6,182.8 L250.6,182.8 L252.7,182.8 L254.7,182.8 L256.8,182.8 L258.8,182.8 L260.9,182.8 L263.0,182.8 L265.0,182.8 L267.1,182.8 L269.1,182.8 L271.2,182.8 L273.2,182.9 L275.3,182.9 L277.3,182.9 L279.4,182.9 L281.4,182.9 L283.5,182.9 L285.5,182.9 L287.6,182.9 L289.6,182.9 L291.7,182.9 L293.7,182.9 L295.8,182.9 L297.8,182.9 L299.9,182.9 L302.0,182.9 L304.0,182.9 L306.1,182.9 L308.1,182.9 L310.2,182.9 L312.2,182.9 L314.3,182.9 L316.3,182.9 L318.4,182.9 L320.4,182.9 L322.5,182.9 L324.5,182.9 L326.6,182.9 L328.6,182.9 L330.7,182.9 L332.7,182.9 L334.8,182.9 L336.9,182.9 L338.9,182.9 L341.0,182.9 L343.0,182.9 L345.1,182.9 L347.1,182.9 L349.2,182.9 L351.2,182.9 L353.3,182.9 L355.3,182.9 L357.4,182.9 L359.4,182.9 L361.5,182.9 L363.5,182.9 L365.6,182.9 L367.6,182.9 L369.7,182.9 L371.7,182.9 L373.8,182.9 L375.9,182.9 L377.9,182.9 L380.0,182.9 L382.0,182.9 L384.1,182.9 L386.1,182.9 L388.2,182.9 L390.2,182.9 L392.3,182.9 L394.3,182.9 L396.4,182.9 L398.4,182.9 L400.5,182.9 L402.5,182.9 L404.6,182.9 L406.6,182.9 L408.7,182.9 L410.8,182.9" fill="none" stroke="#e02060" stroke-width="1.3" stroke-dasharray="2 2"/><path d="M58.1,18.4 L58.8,16.1 L59.6,14.0 L60.3,12.0 L61.0,10.2 L61.7,8.5 L62.5,6.9 L63.2,5.5 L63.9,4.2 L64.6,3.2 L65.3,2.2 L66.1,1.5 L66.8,0.9 L67.5,0.4 L68.2,0.2 L69.0,0.1 L69.7,0.2 L70.4,0.4 L71.1,0.9 L71.9,1.5 L72.6,2.2 L73.3,3.2 L74.0,4.2 L74.7,5.5 L75.5,6.9 L76.2,8.5 L76.9,10.2 L77.6,12.0 L78.4,14.0 L79.1,16.1 L79.8,18.4" fill="none" stroke="#e02050" stroke-width="1.8"/><path d="M0.2,182.8 L2.2,182.8 L4.3,182.8 L6.4,182.8 L8.4,182.8 L10.5,182.8 L12.5,182.8 L14.6,182.8 L16.6,182.8 L18.7,182.8 L20.7,182.8 L22.8,182.8 L24.8,182.8 L26.9,182.8 L28.9,182.8 L31.0,182.8 L33.0,182.8 L35.1,182.8 L37.1,182.8 L39.2,182.8 L41.2,182.8 L43.3,182.8 L45.4,182.8 L47.4,182.8 L49.5,182.8 L51.5,182.8 L53.6,182.8 L55.6,182.8 L57.7,182.8 L59.7,182.8 L61.8,182.8 L63.8,182.7 L65.9,182.6 L67.9,182.5 L70.0,182.3 L72.0,182.0 L74.1,181.5 L76.1,180.8 L78.2,179.8 L80.3,178.5 L82.3,176.6 L84.4,174.1 L86.4,170.8 L88.5,166.6 L90.5,161.3 L92.6,154.7 L94.6,146.7 L96.7,137.3 L98.7,126.4 L100.8,114.3 L102.8,100.9 L104.9,86.7 L106.9,72.0 L109.0,57.3 L111.0,43.2 L113.1,30.2 L115.1,19.0 L117.2,10.0 L119.3,3.7 L121.3,0.5 L123.4,0.5 L125.4,3.7 L127.5,10.0 L129.5,19.0 L131.6,30.2 L133.6,43.2 L135.7,57.3 L137.7,72.0 L139.8,86.7 L141.8,100.9 L143.9,114.3 L145.9,126.4 L148.0,137.3 L150.0,146.7 L152.1,154.7 L154.2,161.3 L156.2,166.6 L158.3,170.8 L160.3,174.1 L162.4,176.6 L164.4,178.5 L166.5,179.8 L168.5,180.8 L170.6,181.5 L172.6,182.0 L174.7,182.3 L176.7,182.5 L178.8,182.6 L180.8,182.7 L182.9,182.8 L184.9,182.8 L187.0,182.8 L189.0,182.8 L191.1,182.8 L193.2,182.8 L195.2,182.8 L197.3,182.8 L199.3,182.8 L201.4,182.8 L203.4,182.8 L205.5,182.8 L207.5,182.8 L209.6,182.8 L211.6,182.8 L213.7,182.8 L215.7,182.8 L217.8,182.8 L219.8,182.8 L221.9,182.8 L223.9,182.8 L226.0,182.8 L228.1,182.8 L230.1,182.8 L232.2,182.8 L234.2,182.8 L236.3,182.8 L238.3,182.8 L240.4,182.8 L242.4,182.8 L244.5,182.8 L246.5,182.8 L248.6,182.8 L250.6,182.8 L252.7,182.8 L254.7,182.8 L256.8,182.9 L258.8,182.9 L260.9,182.9 L263.0,182.9 L265.0,182.9 L267.1,182.9 L269.1,182.9 L271.2,182.9 L273.2,182.9 L275.3,182.9 L277.3,182.9 L279.4,182.9 L281.4,182.9 L283.5,182.9 L285.5,182.9 L287.6,182.9 L289.6,182.9 L291.7,182.9 L293.7,182.9 L295.8,182.9 L297.8,182.9 L299.9,182.9 L302.0,182.9 L304.0,182.9 L306.1,182.9 L308.1,182.9 L310.2,182.9 L312.2,182.9 L314.3,182.9 L316.3,182.9 L318.4,182.9 L320.4,182.9 L322.5,182.9 L324.5,182.9 L326.6,182.9 L328.6,182.9 L330.7,182.9 L332.7,182.9 L334.8,182.9 L336.9,182.9 L338.9,182.9 L341.0,182.9 L343.0,182.9 L345.1,182.9 L347.1,182.9 L349.2,182.9 L351.2,182.9 L353.3,182.9 L355.3,182.9 L357.4,182.9 L359.4,182.9 L361.5,182.9 L363.5,182.9 L365.6,182.9 L367.6,182.9 L369.7,182.9 L371.7,182.9 L373.8,182.9 L375.9,182.9 L377.9,182.9 L380.0,182.9 L382.0,182.9 L384.1,182.9 L386.1,182.9 L388.2,182.9 L390.2,182.9 L392.3,182.9 L394.3,182.9 L396.4,182.9 L398.4,182.9 L400.5,182.9 L402.5,182.9 L404.6,182.9 L406.6,182.9 L408.7,182.9 L410.8,182.9" fill="none" stroke="#c04080" stroke-width="1.1" stroke-dasharray="1.5 2.5"/><path d="M0.2,182.9 L2.2,182.9 L4.3,182.9 L6.4,182.9 L8.4,182.9 L10.5,182.9 L12.5,182.9 L14.6,182.9 L16.6,182.9 L18.7,182.9 L20.7,182.9 L22.8,182.9 L24.8,182.9 L26.9,182.9 L28.9,182.9 L31.0,182.9 L33.0,182.9 L35.1,182.9 L37.1,182.9 L39.2,182.9 L41.2,182.9 L43.3,182.9 L45.4,182.9 L47.4,182.8 L49.5,182.8 L51.5,182.8 L53.6,182.8 L55.6,182.8 L57.7,182.8 L59.7,182.8 L61.8,182.8 L63.8,182.8 L65.9,182.8 L67.9,182.8 L70.0,182.8 L72.0,182.8 L74.1,182.8 L76.1,182.8 L78.2,182.8 L80.3,182.8 L82.3,182.8 L84.4,182.8 L86.4,182.8 L88.5,182.8 L90.5,182.8 L92.6,182.8 L94.6,182.8 L96.7,182.8 L98.7,182.8 L100.8,182.8 L102.8,182.8 L104.9,182.7 L106.9,182.6 L109.0,182.5 L111.0,182.1 L113.1,181.6 L115.1,180.8 L117.2,179.5 L119.3,177.6 L121.3,174.8 L123.4,170.8 L125.4,165.4 L127.5,158.1 L129.5,148.8 L131.6,137.3 L133.6,123.5 L135.7,107.7 L137.7,90.3 L139.8,72.0 L141.8,53.7 L143.9,36.5 L145.9,21.6 L148.0,10.0 L150.0,2.6 L152.1,0.1 L154.2,2.6 L156.2,10.0 L158.3,21.6 L160.3,36.5 L162.4,53.7 L164.4,72.0 L166.5,90.3 L168.5,107.7 L170.6,123.5 L172.6,137.3 L174.7,148.8 L176.7,158.1 L178.8,165.4 L180.8,170.8 L182.9,174.8 L184.9,177.6 L187.0,179.5 L189.0,180.8 L191.1,181.6 L193.2,182.1 L195.2,182.5 L197.3,182.6 L199.3,182.7 L201.4,182.8 L203.4,182.8 L205.5,182.8 L207.5,182.8 L209.6,182.8 L211.6,182.8 L213.7,182.8 L215.7,182.8 L217.8,182.8 L219.8,182.8 L221.9,182.8 L223.9,182.8 L226.0,182.8 L228.1,182.8 L230.1,182.8 L232.2,182.8 L234.2,182.8 L236.3,182.8 L238.3,182.8 L240.4,182.8 L242.4,182.8 L244.5,182.8 L246.5,182.8 L248.6,182.8 L250.6,182.8 L252.7,182.8 L254.7,182.8 L256.8,182.8 L258.8,182.9 L260.9,182.9 L263.0,182.9 L265.0,182.9 L267.1,182.9 L269.1,182.9 L271.2,182.9 L273.2,182.9 L275.3,182.9 L277.3,182.9 L279.4,182.9 L281.4,182.9 L283.5,182.9 L285.5,182.9 L287.6,182.9 L289.6,182.9 L291.7,182.9 L293.7,182.9 L295.8,182.9 L297.8,182.9 L299.9,182.9 L302.0,182.9 L304.0,182.9 L306.1,182.9 L308.1,182.9 L310.2,182.9 L312.2,182.9 L314.3,182.9 L316.3,182.9 L318.4,182.9 L320.4,182.9 L322.5,182.9 L324.5,182.9 L326.6,182.9 L328.6,182.9 L330.7,182.9 L332.7,182.9 L334.8,182.9 L336.9,182.9 L338.9,182.9 L341.0,182.9 L343.0,182.9 L345.1,182.9 L347.1,182.9 L349.2,182.9 L351.2,182.9 L353.3,182.9 L355.3,182.9 L357.4,182.9 L359.4,182.9 L361.5,182.9 L363.5,182.9 L365.6,182.9 L367.6,182.9 L369.7,182.9 L371.7,182.9 L373.8,182.9 L375.9,182.9 L377.9,182.9 L380.0,182.9 L382.0,182.9 L384.1,182.9 L386.1,182.9 L388.2,182.9 L390.2,182.9 L392.3,182.9 L394.3,182.9 L396.4,182.9 L398.4,182.9 L400.5,182.9 L402.5,182.9 L404.6,182.9 L406.6,182.9 L408.7,182.9 L410.8,182.9" fill="none" stroke="#204020" stroke-width="1.3" stroke-dasharray="1.5 2"/><path d="M0.2,182.9 L2.2,182.9 L4.3,182.9 L6.4,182.9 L8.4,182.9 L10.5,182.9 L12.5,182.9 L14.6,182.9 L16.6,182.9 L18.7,182.9 L20.7,182.9 L22.8,182.9 L24.8,182.9 L26.9,182.9 L28.9,182.9 L31.0,182.9 L33.0,182.9 L35.1,182.9 L37.1,182.9 L39.2,182.9 L41.2,182.9 L43.3,182.9 L45.4,182.9 L47.4,182.9 L49.5,182.8 L51.5,182.8 L53.6,182.8 L55.6,182.8 L57.7,182.8 L59.7,182.8 L61.8,182.8 L63.8,182.8 L65.9,182.8 L67.9,182.8 L70.0,182.8 L72.0,182.8 L74.1,182.8 L76.1,182.8 L78.2,182.8 L80.3,182.8 L82.3,182.8 L84.4,182.8 L86.4,182.8 L88.5,182.8 L90.5,182.8 L92.6,182.8 L94.6,182.8 L96.7,182.8 L98.7,182.8 L100.8,182.8 L102.8,182.8 L104.9,182.8 L106.9,182.8 L109.0,182.8 L111.0,182.7 L113.1,182.6 L115.1,182.5 L117.2,182.2 L119.3,181.8 L121.3,181.1 L123.4,180.0 L125.4,178.3 L127.5,176.0 L129.5,172.6 L131.6,168.0 L133.6,161.8 L135.7,153.9 L137.7,144.0 L139.8,132.0 L141.8,118.0 L143.9,102.3 L145.9,85.2 L148.0,67.6 L150.0,50.1 L152.1,33.9 L154.2,20.0 L156.2,9.2 L158.3,2.4 L160.3,0.1 L162.4,2.4 L164.4,9.2 L166.5,20.0 L168.5,33.9 L170.6,50.1 L172.6,67.6 L174.7,85.2 L176.7,102.3 L178.8,118.0 L180.8,132.0 L182.9,144.0 L184.9,153.9 L187.0,161.8 L189.0,168.0 L191.1,172.6 L193.2,176.0 L195.2,178.3 L197.3,180.0 L199.3,181.1 L201.4,181.8 L203.4,182.2 L205.5,182.5 L207.5,182.6 L209.6,182.7 L211.6,182.8 L213.7,182.8 L215.7,182.8 L217.8,182.8 L219.8,182.8 L221.9,182.8 L223.9,182.8 L226.0,182.8 L228.1,182.8 L230.1,182.8 L232.2,182.8 L234.2,182.8 L236.3,182.8 L238.3,182.8 L240.4,182.8 L242.4,182.8 L244.5,182.8 L246.5,182.8 L248.6,182.8 L250.6,182.8 L252.7,182.8 L254.7,182.8 L256.8,182.8 L258.8,182.8 L260.9,182.8 L263.0,182.8 L265.0,182.8 L267.1,182.8 L269.1,182.8 L271.2,182.8 L273.2,182.9 L275.3,182.9 L277.3,182.9 L279.4,182.9 L281.4,182.9 L283.5,182.9 L285.5,182.9 L287.6,182.9 L289.6,182.9 L291.7,182.9 L293.7,182.9 L295.8,182.9 L297.8,182.9 L299.9,182.9 L302.0,182.9 L304.0,182.9 L306.1,182.9 L308.1,182.9 L310.2,182.9 L312.2,182.9 L314.3,182.9 L316.3,182.9 L318.4,182.9 L320.4,182.9 L322.5,182.9 L324.5,182.9 L326.6,182.9 L328.6,182.9 L330.7,182.9 L332.7,182.9 L334.8,182.9 L336.9,182.9 L338.9,182.9 L341.0,182.9 L343.0,182.9 L345.1,182.9 L347.1,182.9 L349.2,182.9 L351.2,182.9 L353.3,182.9 L355.3,182.9 L357.4,182.9 L359.4,182.9 L361.5,182.9 L363.5,182.9 L365.6,182.9 L367.6,182.9 L369.7,182.9 L371.7,182.9 L373.8,182.9 L375.9,182.9 L377.9,182.9 L380.0,182.9 L382.0,182.9 L384.1,182.9 L386.1,182.9 L388.2,182.9 L390.2,182.9 L392.3,182.9 L394.3,182.9 L396.4,182.9 L398.4,182.9 L400.5,182.9 L402.5,182.9 L404.6,182.9 L406.6,182.9 L408.7,182.9 L410.8,182.9" fill="none" stroke="#204020" stroke-width="1.3" stroke-dasharray="1.5 2"/><path d="M0.2,182.9 L2.2,182.9 L4.3,182.9 L6.4,182.9 L8.4,182.9 L10.5,182.9 L12.5,182.9 L14.6,182.9 L16.6,182.9 L18.7,182.9 L20.7,182.9 L22.8,182.9 L24.8,182.9 L26.9,182.9 L28.9,182.9 L31.0,182.9 L33.0,182.9 L35.1,182.9 L37.1,182.9 L39.2,182.9 L41.2,182.9 L43.3,182.9 L45.4,182.9 L47.4,182.9 L49.5,182.9 L51.5,182.9 L53.6,182.9 L55.6,182.9 L57.7,182.9 L59.7,182.9 L61.8,182.9 L63.8,182.9 L65.9,182.9 L67.9,182.9 L70.0,182.9 L72.0,182.9 L74.1,182.9 L76.1,182.9 L78.2,182.9 L80.3,182.9 L82.3,182.9 L84.4,182.9 L86.4,182.9 L88.5,182.9 L90.5,182.9 L92.6,182.9 L94.6,182.9 L96.7,182.9 L98.7,182.9 L100.8,182.9 L102.8,182.9 L104.9,182.9 L106.9,182.9 L109.0,182.9 L111.0,182.9 L113.1,182.9 L115.1,182.9 L117.2,182.9 L119.3,182.9 L121.3,182.9 L123.4,182.9 L125.4,182.9 L127.5,182.9 L129.5,182.9 L131.6,182.9 L133.6,182.9 L135.7,182.9 L137.7,182.9 L139.8,182.9 L141.8,182.9 L143.9,182.9 L145.9,182.9 L148.0,182.9 L150.0,182.9 L152.1,182.9 L154.2,182.9 L156.2,182.9 L158.3,182.9 L160.3,182.9 L162.4,182.9 L164.4,182.9 L166.5,182.9 L168.5,182.9 L170.6,182.9 L172.6,182.9 L174.7,182.9 L176.7,182.9 L178.8,182.9 L180.8,182.9 L182.9,182.9 L184.9,182.9 L187.0,182.9 L189.0,182.9 L191.1,182.9 L193.2,182.9 L195.2,182.9 L197.3,182.9 L199.3,182.8 L201.4,182.8 L203.4,182.8 L205.5,182.8 L207.5,182.8 L209.6,182.8 L211.6,182.8 L213.7,182.8 L215.7,182.8 L217.8,182.8 L219.8,182.8 L221.9,182.8 L223.9,182.8 L226.0,182.8 L228.1,182.8 L230.1,182.8 L232.2,182.8 L234.2,182.7 L236.3,182.3 L238.3,181.5 L240.4,179.8 L242.4,176.2 L244.5,169.4 L246.5,158.1 L248.6,140.8 L250.6,117.0 L252.7,87.7 L254.7,56.3 L256.8,27.6 L258.8,7.4 L260.9,0.1 L263.0,7.4 L265.0,27.6 L267.1,56.3 L269.1,87.7 L271.2,117.0 L273.2,140.8 L275.3,158.1 L277.3,169.4 L279.4,176.2 L281.4,179.8 L283.5,181.5 L285.5,182.3 L287.6,182.7 L289.6,182.8 L291.7,182.8 L293.7,182.8 L295.8,182.8 L297.8,182.8 L299.9,182.8 L302.0,182.8 L304.0,182.8 L306.1,182.8 L308.1,182.8 L310.2,182.8 L312.2,182.8 L314.3,182.8 L316.3,182.8 L318.4,182.8 L320.4,182.8 L322.5,182.8 L324.5,182.9 L326.6,182.9 L328.6,182.9 L330.7,182.9 L332.7,182.9 L334.8,182.9 L336.9,182.9 L338.9,182.9 L341.0,182.9 L343.0,182.9 L345.1,182.9 L347.1,182.9 L349.2,182.9 L351.2,182.9 L353.3,182.9 L355.3,182.9 L357.4,182.9 L359.4,182.9 L361.5,182.9 L363.5,182.9 L365.6,182.9 L367.6,182.9 L369.7,182.9 L371.7,182.9 L373.8,182.9 L375.9,182.9 L377.9,182.9 L380.0,182.9 L382.0,182.9 L384.1,182.9 L386.1,182.9 L388.2,182.9 L390.2,182.9 L392.3,182.9 L394.3,182.9 L396.4,182.9 L398.4,182.9 L400.5,182.9 L402.5,182.9 L404.6,182.9 L406.6,182.9 L408.7,182.9 L410.8,182.9" fill="none" stroke="#503030" stroke-width="1.2" stroke-dasharray="1.5 3"/><path d="M0.2,182.8 L2.2,182.8 L4.3,182.8 L6.4,182.8 L8.4,182.8 L10.5,182.8 L12.5,182.8 L14.6,182.8 L16.6,182.7 L18.7,182.7 L20.7,182.7 L22.8,182.7 L24.8,182.6 L26.9,182.6 L28.9,182.6 L31.0,182.5 L33.0,182.4 L35.1,182.4 L37.1,182.3 L39.2,182.2 L41.2,182.1 L43.3,182.0 L45.4,181.9 L47.4,181.7 L49.5,181.5 L51.5,181.4 L53.6,181.1 L55.6,180.9 L57.7,180.6 L59.7,180.3 L61.8,180.0 L63.8,179.6 L65.9,179.2 L67.9,178.7 L70.0,178.2 L72.0,177.7 L74.1,177.0 L76.1,176.4 L78.2,175.6 L80.3,174.8 L82.3,173.9 L84.4,173.0 L86.4,171.9 L88.5,170.8 L90.5,169.6 L92.6,168.3 L94.6,167.0 L96.7,165.5 L98.7,163.9 L100.8,162.3 L102.8,160.5 L104.9,158.6 L106.9,156.7 L109.0,154.6 L111.0,152.5 L113.1,150.2 L115.1,147.9 L117.2,145.4 L119.3,142.9 L121.3,140.3 L123.4,137.7 L125.4,135.0 L127.5,132.2 L129.5,129.4 L131.6,126.5 L133.6,123.7 L135.7,120.8 L137.7,117.9 L139.8,115.0 L141.8,112.2 L143.9,109.4 L145.9,106.6 L148.0,103.9 L150.0,101.3 L152.1,98.8 L154.2,96.4 L156.2,94.2 L158.3,92.0 L160.3,90.0 L162.4,88.2 L164.4,86.6 L166.5,85.1 L168.5,83.8 L170.6,82.7 L172.6,81.9 L174.7,81.2 L176.7,80.8 L178.8,80.5 L180.8,80.5 L182.9,80.8 L184.9,81.2 L187.0,81.9 L189.0,82.7 L191.1,83.8 L193.2,85.1 L195.2,86.6 L197.3,88.2 L199.3,90.0 L201.4,92.0 L203.4,94.2 L205.5,96.4 L207.5,98.8 L209.6,101.3 L211.6,103.9 L213.7,106.6 L215.7,109.4 L217.8,112.2 L219.8,115.0 L221.9,117.9 L223.9,120.8 L226.0,123.7 L228.1,126.5 L230.1,129.4 L232.2,132.2 L234.2,135.0 L236.3,137.7 L238.3,140.3 L240.4,142.9 L242.4,145.4 L244.5,147.9 L246.5,150.2 L248.6,152.5 L250.6,154.6 L252.7,156.7 L254.7,158.6 L256.8,160.5 L258.8,162.3 L260.9,163.9 L263.0,165.5 L265.0,167.0 L267.1,168.3 L269.1,169.6 L271.2,170.8 L273.2,171.9 L275.3,173.0 L277.3,173.9 L279.4,174.8 L281.4,175.6 L283.5,176.4 L285.5,177.0 L287.6,177.7 L289.6,178.2 L291.7,178.7 L293.7,179.2 L295.8,179.6 L297.8,180.0 L299.9,180.3 L302.0,180.6 L304.0,180.9 L306.1,181.1 L308.1,181.4 L310.2,181.5 L312.2,181.7 L314.3,181.9 L316.3,182.0 L318.4,182.1 L320.4,182.2 L322.5,182.3 L324.5,182.4 L326.6,182.4 L328.6,182.5 L330.7,182.6 L332.7,182.6 L334.8,182.6 L336.9,182.7 L338.9,182.7 L341.0,182.7 L343.0,182.7 L345.1,182.8 L347.1,182.8 L349.2,182.8 L351.2,182.8 L353.3,182.8 L355.3,182.8 L357.4,182.8 L359.4,182.8 L361.5,182.8 L363.5,182.8 L365.6,182.8 L367.6,182.8 L369.7,182.8 L371.7,182.8 L373.8,182.8 L375.9,182.8 L377.9,182.8 L380.0,182.8 L382.0,182.8 L384.1,182.8 L386.1,182.8 L388.2,182.8 L390.2,182.8 L392.3,182.8 L394.3,182.8 L396.4,182.8 L398.4,182.8 L400.5,182.8 L402.5,182.8 L404.6,182.8 L406.6,182.8 L408.7,182.8 L410.8,182.8" fill="none" stroke="#d03010" stroke-width="1.3"/><path d="M0.2,182.8 L2.2,182.8 L4.3,182.8 L6.4,182.8 L8.4,182.8 L10.5,182.8 L12.5,182.8 L14.6,182.8 L16.6,182.8 L18.7,182.8 L20.7,182.8 L22.8,182.8 L24.8,182.8 L26.9,182.8 L28.9,182.8 L31.0,182.8 L33.0,182.8 L35.1,182.8 L37.1,182.8 L39.2,182.8 L41.2,182.8 L43.3,182.8 L45.4,182.8 L47.4,182.8 L49.5,182.8 L51.5,182.8 L53.6,182.8 L55.6,182.8 L57.7,182.8 L59.7,182.8 L61.8,182.8 L63.8,182.8 L65.9,182.8 L67.9,182.8 L70.0,182.8 L72.0,182.8 L74.1,182.8 L76.1,182.8 L78.2,182.8 L80.3,182.8 L82.3,182.8 L84.4,182.8 L86.4,182.8 L88.5,182.7 L90.5,182.7 L92.6,182.7 L94.6,182.7 L96.7,182.6 L98.7,182.6 L100.8,182.5 L102.8,182.4 L104.9,182.3 L106.9,182.2 L109.0,182.1 L111.0,182.0 L113.1,181.8 L115.1,181.6 L117.2,181.4 L119.3,181.2 L121.3,180.9 L123.4,180.5 L125.4,180.2 L127.5,179.7 L129.5,179.2 L131.6,178.7 L133.6,178.0 L135.7,177.3 L137.7,176.5 L139.8,175.6 L141.8,174.7 L143.9,173.6 L145.9,172.4 L148.0,171.0 L150.0,169.6 L152.1,168.0 L154.2,166.3 L156.2,164.4 L158.3,162.4 L160.3,160.3 L162.4,158.0 L164.4,155.5 L166.5,152.9 L168.5,150.1 L170.6,147.3 L172.6,144.2 L174.7,141.1 L176.7,137.8 L178.8,134.4 L180.8,130.9 L182.9,127.3 L184.9,123.7 L187.0,120.0 L189.0,116.3 L191.1,112.7 L193.2,109.0 L195.2,105.4 L197.3,101.8 L199.3,98.4 L201.4,95.0 L203.4,91.9 L205.5,88.9 L207.5,86.1 L209.6,83.5 L211.6,81.2 L213.7,79.1 L215.7,77.3 L217.8,75.9 L219.8,74.7 L221.9,73.9 L223.9,73.4 L226.0,73.2 L228.1,73.4 L230.1,73.9 L232.2,74.7 L234.2,75.9 L236.3,77.3 L238.3,79.1 L240.4,81.2 L242.4,83.5 L244.5,86.1 L246.5,88.9 L248.6,91.9 L250.6,95.0 L252.7,98.4 L254.7,101.8 L256.8,105.4 L258.8,109.0 L260.9,112.7 L263.0,116.3 L265.0,120.0 L267.1,123.7 L269.1,127.3 L271.2,130.9 L273.2,134.4 L275.3,137.8 L277.3,141.1 L279.4,144.2 L281.4,147.3 L283.5,150.1 L285.5,152.9 L287.6,155.5 L289.6,158.0 L291.7,160.3 L293.7,162.4 L295.8,164.4 L297.8,166.3 L299.9,168.0 L302.0,169.6 L304.0,171.0 L306.1,172.4 L308.1,173.6 L310.2,174.7 L312.2,175.6 L314.3,176.5 L316.3,177.3 L318.4,178.0 L320.4,178.7 L322.5,179.2 L324.5,179.7 L326.6,180.2 L328.6,180.5 L330.7,180.9 L332.7,181.2 L334.8,181.4 L336.9,181.6 L338.9,181.8 L341.0,182.0 L343.0,182.1 L345.1,182.2 L347.1,182.3 L349.2,182.4 L351.2,182.5 L353.3,182.6 L355.3,182.6 L357.4,182.7 L359.4,182.7 L361.5,182.7 L363.5,182.7 L365.6,182.8 L367.6,182.8 L369.7,182.8 L371.7,182.8 L373.8,182.8 L375.9,182.8 L377.9,182.8 L380.0,182.8 L382.0,182.8 L384.1,182.8 L386.1,182.8 L388.2,182.8 L390.2,182.8 L392.3,182.8 L394.3,182.8 L396.4,182.8 L398.4,182.8 L400.5,182.8 L402.5,182.8 L404.6,182.8 L406.6,182.8 L408.7,182.8 L410.8,182.8" fill="none" stroke="#d02010" stroke-width="1.3"/><path d="M0.2,182.5 L2.2,182.4 L4.3,182.3 L6.4,182.1 L8.4,181.9 L10.5,181.7 L12.5,181.3 L14.6,180.9 L16.6,180.4 L18.7,179.9 L20.7,179.2 L22.8,178.4 L24.8,177.4 L26.9,176.3 L28.9,175.1 L31.0,173.7 L33.0,172.2 L35.1,170.6 L37.1,168.8 L39.2,166.9 L41.2,164.9 L43.3,162.8 L45.4,160.7 L47.4,158.6 L49.5,156.5 L51.5,154.5 L53.6,152.7 L55.6,151.0 L57.7,149.5 L59.7,148.3 L61.8,147.3 L63.8,146.7 L65.9,146.3 L67.9,146.3 L70.0,146.7 L72.0,147.3 L74.1,148.3 L76.1,149.5 L78.2,151.0 L80.3,152.7 L82.3,154.5 L84.4,156.5 L86.4,158.6 L88.5,160.7 L90.5,162.8 L92.6,164.9 L94.6,166.9 L96.7,168.8 L98.7,170.6 L100.8,172.2 L102.8,173.7 L104.9,175.1 L106.9,176.3 L109.0,177.4 L111.0,178.4 L113.1,179.2 L115.1,179.9 L117.2,180.4 L119.3,180.9 L121.3,181.3 L123.4,181.7 L125.4,181.9 L127.5,182.1 L129.5,182.3 L131.6,182.4 L133.6,182.5 L135.7,182.6 L137.7,182.7 L139.8,182.7 L141.8,182.8 L143.9,182.8 L145.9,182.8 L148.0,182.8 L150.0,182.8 L152.1,182.8 L154.2,182.8 L156.2,182.8 L158.3,182.8 L160.3,182.8 L162.4,182.8 L164.4,182.8 L166.5,182.8 L168.5,182.8 L170.6,182.8 L172.6,182.8 L174.7,182.8 L176.7,182.8 L178.8,182.8 L180.8,182.8 L182.9,182.8 L184.9,182.8 L187.0,182.8 L189.0,182.8 L191.1,182.8 L193.2,182.8 L195.2,182.8 L197.3,182.8 L199.3,182.8 L201.4,182.8 L203.4,182.8 L205.5,182.8 L207.5,182.8 L209.6,182.8 L211.6,182.8 L213.7,182.8 L215.7,182.8 L217.8,182.8 L219.8,182.8 L221.9,182.8 L223.9,182.8 L226.0,182.8 L228.1,182.8 L230.1,182.8 L232.2,182.8 L234.2,182.8 L236.3,182.8 L238.3,182.8 L240.4,182.8 L242.4,182.8 L244.5,182.8 L246.5,182.8 L248.6,182.8 L250.6,182.9 L252.7,182.9 L254.7,182.9 L256.8,182.9 L258.8,182.9 L260.9,182.9 L263.0,182.9 L265.0,182.9 L267.1,182.9 L269.1,182.9 L271.2,182.9 L273.2,182.9 L275.3,182.9 L277.3,182.9 L279.4,182.9 L281.4,182.9 L283.5,182.9 L285.5,182.9 L287.6,182.9 L289.6,182.9 L291.7,182.9 L293.7,182.9 L295.8,182.9 L297.8,182.9 L299.9,182.9 L302.0,182.9 L304.0,182.9 L306.1,182.9 L308.1,182.9 L310.2,182.9 L312.2,182.9 L314.3,182.9 L316.3,182.9 L318.4,182.9 L320.4,182.9 L322.5,182.9 L324.5,182.9 L326.6,182.9 L328.6,182.9 L330.7,182.9 L332.7,182.9 L334.8,182.9 L336.9,182.9 L338.9,182.9 L341.0,182.9 L343.0,182.9 L345.1,182.9 L347.1,182.9 L349.2,182.9 L351.2,182.9 L353.3,182.9 L355.3,182.9 L357.4,182.9 L359.4,182.9 L361.5,182.9 L363.5,182.9 L365.6,182.9 L367.6,182.9 L369.7,182.9 L371.7,182.9 L373.8,182.9 L375.9,182.9 L377.9,182.9 L380.0,182.9 L382.0,182.9 L384.1,182.9 L386.1,182.9 L388.2,182.9 L390.2,182.9 L392.3,182.9 L394.3,182.9 L396.4,182.9 L398.4,182.9 L400.5,182.9 L402.5,182.9 L404.6,182.9 L406.6,182.9 L408.7,182.9 L410.8,182.9" fill="none" stroke="#e02050" stroke-width="1.5"/><path d="M0.2,182.9 L20.7,181.0 L33.0,160.9 L40.2,160.9 L47.4,153.6 L55.6,164.6 L62.8,155.4 L75.1,144.5 L81.3,146.3 L90.5,162.7 L103.9,164.6 L111.0,153.6 L121.3,153.6 L132.6,166.4 L143.9,179.2 L164.4,181.0 L183.9,166.4 L194.2,173.7 L197.3,159.1 L206.5,153.6 L212.7,159.1 L215.7,164.6 L222.9,159.1 L230.1,159.1 L237.3,164.6 L244.5,171.9 L256.8,181.0 L410.8,182.9" fill="none" stroke="#102040" stroke-width="1.2" stroke-dasharray="3 1.5"/><path d="M243,135 L330,165" fill="none" stroke="#200808" stroke-width="1.3"/><path d="M0 181.2 H412" stroke="#4040a0" stroke-width="1" stroke-dasharray="5 4" opacity="0.7"/></svg>
<svg style="left:0;top:0" width="140" height="820"><path d="M127.5 581.1 V800.9 M116.5 581.5 H128 M119 590.5 H128 M119 599.5 H128 M119 609.5 H128 M116.5 618.5 H128 M119 627.5 H128 M119 636.5 H128 M119 645.5 H128 M116.5 654.5 H128 M119 663.5 H128 M119 672.5 H128 M119 682.5 H128 M116.5 691.5 H128 M119 700.5 H128 M119 709.5 H128 M119 718.5 H128 M116.5 727.5 H128 M119 736.5 H128 M119 746.5 H128 M119 755.5 H128 M116.5 764.5 H128 M119 773.5 H128 M119 782.5 H128 M119 791.5 H128 M116.5 800.5 H128" stroke="#202020" stroke-width="1.4"/></svg>
<div class="t" style="right:889px;top:573.1px;font-size:15px;letter-spacing:0.4px;color:#202020;-webkit-text-stroke:0.2px #303030;">1</div>
<div class="t" style="right:889px;top:609.6px;font-size:15px;letter-spacing:0.4px;color:#202020;-webkit-text-stroke:0.2px #303030;">0,8</div>
<div class="t" style="right:889px;top:646.2px;font-size:15px;letter-spacing:0.4px;color:#202020;-webkit-text-stroke:0.2px #303030;">0,6</div>
<div class="t" style="right:889px;top:682.8px;font-size:15px;letter-spacing:0.4px;color:#202020;-webkit-text-stroke:0.2px #303030;">0,4</div>
<div class="t" style="right:889px;top:719.3px;font-size:15px;letter-spacing:0.4px;color:#202020;-webkit-text-stroke:0.2px #303030;">0,2</div>
<div class="t" style="right:889px;top:755.9px;font-size:15px;letter-spacing:0.4px;color:#202020;-webkit-text-stroke:0.2px #303030;">0</div>
<div class="t" style="right:889px;top:792.4px;font-size:15px;letter-spacing:0.4px;color:#202020;-webkit-text-stroke:0.2px #303030;">-0.2</div>
<svg style="left:0;top:0" width="620" height="830"><path d="M138.4 812 H600.8 M138.5 811.5 V822.5 M149.5 811.5 V817.5 M159.5 811.5 V817.5 M169.5 811.5 V817.5 M179.5 811.5 V817.5 M190.5 811.5 V822.5 M200.5 811.5 V817.5 M210.5 811.5 V817.5 M221.5 811.5 V817.5 M231.5 811.5 V817.5 M241.5 811.5 V822.5 M251.5 811.5 V817.5 M262.5 811.5 V817.5 M272.5 811.5 V817.5 M282.5 811.5 V817.5 M292.5 811.5 V822.5 M303.5 811.5 V817.5 M313.5 811.5 V817.5 M323.5 811.5 V817.5 M333.5 811.5 V817.5 M344.5 811.5 V822.5 M354.5 811.5 V817.5 M364.5 811.5 V817.5 M374.5 811.5 V817.5 M385.5 811.5 V817.5 M395.5 811.5 V822.5 M405.5 811.5 V817.5 M416.5 811.5 V817.5 M426.5 811.5 V817.5 M436.5 811.5 V817.5 M446.5 811.5 V822.5 M457.5 811.5 V817.5 M467.5 811.5 V817.5 M477.5 811.5 V817.5 M487.5 811.5 V817.5 M498.5 811.5 V822.5 M508.5 811.5 V817.5 M518.5 811.5 V817.5 M528.5 811.5 V817.5 M539.5 811.5 V817.5 M549.5 811.5 V822.5 M559.5 811.5 V817.5 M569.5 811.5 V817.5 M580.5 811.5 V817.5 M590.5 811.5 V817.5 M600.5 811.5 V822.5" stroke="#202020" stroke-width="1.4"/></svg>
<div class="t" style="left:98.4px;width:80px;text-align:center;top:827px;font-size:15px;letter-spacing:0.4px;color:#202020;-webkit-text-stroke:0.2px #303030;">350</div>
<div class="t" style="left:149.7px;width:80px;text-align:center;top:827px;font-size:15px;letter-spacing:0.4px;color:#202020;-webkit-text-stroke:0.2px #303030;">400</div>
<div class="t" style="left:201.0px;width:80px;text-align:center;top:827px;font-size:15px;letter-spacing:0.4px;color:#202020;-webkit-text-stroke:0.2px #303030;">450</div>
<div class="t" style="left:252.4px;width:80px;text-align:center;top:827px;font-size:15px;letter-spacing:0.4px;color:#202020;-webkit-text-stroke:0.2px #303030;">500</div>
<div class="t" style="left:303.7px;width:80px;text-align:center;top:827px;font-size:15px;letter-spacing:0.4px;color:#202020;-webkit-text-stroke:0.2px #303030;">550</div>
<div class="t" style="left:355.0px;width:80px;text-align:center;top:827px;font-size:15px;letter-spacing:0.4px;color:#202020;-webkit-text-stroke:0.2px #303030;">600</div>
<div class="t" style="left:406.3px;width:80px;text-align:center;top:827px;font-size:15px;letter-spacing:0.4px;color:#202020;-webkit-text-stroke:0.2px #303030;">650</div>
<div class="t" style="left:457.6px;width:80px;text-align:center;top:827px;font-size:15px;letter-spacing:0.4px;color:#202020;-webkit-text-stroke:0.2px #303030;">700</div>
<div class="t" style="left:509.0px;width:80px;text-align:center;top:827px;font-size:15px;letter-spacing:0.4px;color:#202020;-webkit-text-stroke:0.2px #303030;">750</div>
<div class="t" style="left:560.3px;width:80px;text-align:center;top:827px;font-size:15px;letter-spacing:0.4px;color:#202020;-webkit-text-stroke:0.2px #303030;">800</div>
<div class="t" style="left:277.60px;top:844.95px;font-size:21.2px;color:#101010;transform:scaleX(1.1018);transform-origin:0 0;-webkit-text-stroke:0.3px #101010;">Wellenlänge (nm)</div>
<div class="t" style="left:68.5px;top:689px;font-size:22px;color:#101010;-webkit-text-stroke:0.3px #101010;letter-spacing:0.794px;transform:translate(-50%,-50%) rotate(-90deg)">Amplitude (a.u.)</div>
<div class="abs" style="left:622px;top:574px;width:324px;height:293px;box-sizing:border-box;background:#fff;border-top:1px solid #808080;border-left:1px solid #808080;border-right:1px solid #fff;border-bottom:1px solid #fff;box-shadow:inset 1px 1px 0 #404040,inset -1px -1px 0 #d4d0c8"></div>
<div class="abs" style="left:628px;top:576.0px;width:20px;height:20.2px;background:#000"></div>
<div class="t" style="left:655.60px;top:580.03px;font-size:14.5px;color:#101010;transform:scaleX(0.8167);transform-origin:0 0;-webkit-text-stroke:0.2px #303030;">TL84</div>
<div class="abs" style="left:628px;top:596.2px;width:20px;height:20.2px;background:#f00"></div>
<div class="t" style="left:655.60px;top:600.13px;font-size:14.5px;color:#101010;transform:scaleX(0.9327);transform-origin:0 0;-webkit-text-stroke:0.2px #303030;">2° (5nm)</div>
<div class="abs" style="left:628px;top:616.4px;width:20px;height:20.2px;background:#008000"></div>
<div class="t" style="left:655.60px;top:620.23px;font-size:14.5px;color:#101010;transform:scaleX(0.8868);transform-origin:0 0;-webkit-text-stroke:0.2px #303030;">LED 635nm peak</div>
<div class="abs" style="left:628px;top:636.6px;width:20px;height:20.2px;background:#0000ff"></div>
<div class="t" style="left:655.60px;top:640.33px;font-size:14.5px;color:#101010;transform:scaleX(0.8868);transform-origin:0 0;-webkit-text-stroke:0.2px #303030;">LED 533nm peak</div>
<div class="abs" style="left:628px;top:656.8px;width:20px;height:20.2px;background:#00ffff"></div>
<div class="t" style="left:655.60px;top:660.43px;font-size:14.5px;color:#101010;transform:scaleX(0.9098);transform-origin:0 0;-webkit-text-stroke:0.2px #303030;">LED 440nm peak approx.</div>
<div class="abs" style="left:628px;top:677.0px;width:20px;height:20.2px;background:#ff00ff"></div>
<div class="t" style="left:655.60px;top:680.53px;font-size:14.5px;color:#101010;transform:scaleX(0.9098);transform-origin:0 0;-webkit-text-stroke:0.2px #303030;">LED 500nm peak approx.</div>
<div class="abs" style="left:628px;top:697.2px;width:20px;height:20.2px;background:#ffff00"></div>
<div class="t" style="left:655.60px;top:700.63px;font-size:14.5px;color:#101010;transform:scaleX(0.8784);transform-origin:0 0;-webkit-text-stroke:0.2px #303030;">PE LED 597nm peak</div>
<div class="t" style="left:655.60px;top:720.73px;font-size:14.5px;color:#101010;transform:scaleX(0.8811);transform-origin:0 0;-webkit-text-stroke:0.2px #303030;">Summenspektrum MessLEDs</div>
<script>
(function(){
var c=document.getElementById('cie');if(!c||!c.getContext)return;
var ctx=c.getContext('2d');var W=c.width,H=c.height;
var L=[95,51],X0=95.5,XS=627.6,Y0=394.4,YS=381.6;
var P=[[0.1741,0.0050],[0.1740,0.0050],[0.1740,0.0050],[0.1739,0.0049],[0.1737,0.0049],[0.1736,0.0049],[0.1735,0.0048],[0.1734,0.0048],[0.1733,0.0048],[0.1732,0.0048],[0.1731,0.0048],[0.1731,0.0048],[0.1730,0.0048],[0.1729,0.0048],[0.1728,0.0048],[0.1727,0.0048],[0.1726,0.0048],[0.1725,0.0048],[0.1723,0.0048],[0.1722,0.0049],[0.1720,0.0049],[0.1719,0.0049],[0.1717,0.0050],[0.1715,0.0050],[0.1714,0.0051],[0.1713,0.0052],[0.1711,0.0052],[0.1710,0.0053],[0.1709,0.0054],[0.1707,0.0055],[0.1706,0.0056],[0.1705,0.0057],[0.1703,0.0058],[0.1701,0.0059],[0.1700,0.0060],[0.1698,0.0062],[0.1697,0.0063],[0.1695,0.0064],[0.1693,0.0066],[0.1691,0.0067],[0.1689,0.0069],[0.1687,0.0071],[0.1685,0.0073],[0.1682,0.0075],[0.1680,0.0077],[0.1677,0.0079],[0.1674,0.0081],[0.1672,0.0084],[0.1669,0.0086],[0.1666,0.0089],[0.1663,0.0091],[0.1660,0.0094],[0.1657,0.0097],[0.1654,0.0100],[0.1651,0.0103],[0.1648,0.0106],[0.1644,0.0109],[0.1640,0.0112],[0.1637,0.0116],[0.1633,0.0119],[0.1629,0.0123],[0.1625,0.0126],[0.1620,0.0130],[0.1616,0.0134],[0.1611,0.0138],[0.1606,0.0142],[0.1601,0.0147],[0.1595,0.0151],[0.1590,0.0156],[0.1584,0.0161],[0.1578,0.0166],[0.1572,0.0172],[0.1566,0.0177],[0.1560,0.0183],[0.1553,0.0188],[0.1546,0.0194],[0.1540,0.0200],[0.1533,0.0206],[0.1525,0.0213],[0.1518,0.0220],[0.1510,0.0227],[0.1502,0.0235],[0.1494,0.0242],[0.1485,0.0250],[0.1477,0.0259],[0.1468,0.0268],[0.1459,0.0277],[0.1450,0.0287],[0.1440,0.0297],[0.1430,0.0308],[0.1420,0.0318],[0.1410,0.0330],[0.1400,0.0341],[0.1390,0.0354],[0.1379,0.0367],[0.1367,0.0382],[0.1355,0.0399],[0.1342,0.0417],[0.1329,0.0436],[0.1316,0.0456],[0.1302,0.0477],[0.1287,0.0499],[0.1272,0.0524],[0.1257,0.0550],[0.1241,0.0578],[0.1225,0.0608],[0.1208,0.0639],[0.1191,0.0671],[0.1173,0.0706],[0.1155,0.0742],[0.1136,0.0781],[0.1116,0.0823],[0.1096,0.0868],[0.1075,0.0916],[0.1054,0.0966],[0.1032,0.1018],[0.1010,0.1073],[0.0986,0.1131],[0.0963,0.1193],[0.0938,0.1258],[0.0913,0.1327],[0.0887,0.1400],[0.0860,0.1475],[0.0832,0.1554],[0.0803,0.1637],[0.0774,0.1723],[0.0745,0.1813],[0.0716,0.1908],[0.0687,0.2007],[0.0658,0.2111],[0.0629,0.2219],[0.0600,0.2331],[0.0570,0.2447],[0.0541,0.2568],[0.0511,0.2692],[0.0483,0.2819],[0.0454,0.2950],[0.0426,0.3085],[0.0397,0.3226],[0.0368,0.3371],[0.0340,0.3519],[0.0312,0.3669],[0.0285,0.3822],[0.0259,0.3974],[0.0235,0.4127],[0.0212,0.4281],[0.0190,0.4438],[0.0168,0.4597],[0.0148,0.4756],[0.0128,0.4916],[0.0111,0.5074],[0.0095,0.5231],[0.0082,0.5384],[0.0070,0.5535],[0.0060,0.5686],[0.0052,0.5837],[0.0045,0.5985],[0.0040,0.6131],[0.0037,0.6274],[0.0037,0.6413],[0.0039,0.6548],[0.0044,0.6680],[0.0050,0.6809],[0.0059,0.6936],[0.0071,0.7059],[0.0084,0.7178],[0.0100,0.7292],[0.0118,0.7400],[0.0139,0.7502],[0.0162,0.7598],[0.0189,0.7689],[0.0217,0.7776],[0.0248,0.7857],[0.0281,0.7932],[0.0316,0.8002],[0.0352,0.8064],[0.0389,0.8120],[0.0428,0.8168],[0.0469,0.8210],[0.0512,0.8244],[0.0557,0.8272],[0.0602,0.8295],[0.0649,0.8314],[0.0696,0.8328],[0.0743,0.8338],[0.0791,0.8343],[0.0839,0.8343],[0.0889,0.8337],[0.0939,0.8326],[0.0990,0.8313],[0.1041,0.8297],[0.1092,0.8280],[0.1142,0.8262],[0.1192,0.8243],[0.1243,0.8221],[0.1294,0.8197],[0.1346,0.8171],[0.1397,0.8144],[0.1447,0.8116],[0.1497,0.8087],[0.1547,0.8059],[0.1596,0.8031],[0.1644,0.8002],[0.1693,0.7972],[0.1740,0.7942],[0.1788,0.7911],[0.1835,0.7880],[0.1882,0.7848],[0.1929,0.7816],[0.1976,0.7783],[0.2022,0.7750],[0.2068,0.7717],[0.2114,0.7683],[0.2159,0.7649],[0.2205,0.7614],[0.2250,0.7579],[0.2296,0.7543],[0.2342,0.7507],[0.2387,0.7470],[0.2432,0.7433],[0.2478,0.7396],[0.2523,0.7358],[0.2568,0.7320],[0.2613,0.7282],[0.2658,0.7243],[0.2703,0.7204],[0.2748,0.7165],[0.2793,0.7125],[0.2837,0.7085],[0.2882,0.7045],[0.2927,0.7004],[0.2971,0.6964],[0.3016,0.6923],[0.3061,0.6882],[0.3105,0.6841],[0.3150,0.6799],[0.3194,0.6758],[0.3239,0.6716],[0.3284,0.6674],[0.3328,0.6631],[0.3373,0.6589],[0.3418,0.6547],[0.3462,0.6504],[0.3507,0.6461],[0.3552,0.6418],[0.3597,0.6375],[0.3642,0.6332],[0.3686,0.6288],[0.3731,0.6245],[0.3776,0.6202],[0.3820,0.6158],[0.3865,0.6114],[0.3909,0.6071],[0.3954,0.6027],[0.3998,0.5983],[0.4043,0.5940],[0.4087,0.5896],[0.4131,0.5852],[0.4176,0.5809],[0.4220,0.5765],[0.4265,0.5721],[0.4309,0.5678],[0.4353,0.5634],[0.4397,0.5590],[0.4441,0.5547],[0.4485,0.5504],[0.4528,0.5460],[0.4572,0.5417],[0.4616,0.5374],[0.4659,0.5331],[0.4702,0.5288],[0.4745,0.5245],[0.4788,0.5202],[0.4831,0.5159],[0.4873,0.5117],[0.4916,0.5075],[0.4958,0.5033],[0.5000,0.4991],[0.5042,0.4949],[0.5084,0.4907],[0.5125,0.4866],[0.5166,0.4825],[0.5207,0.4784],[0.5248,0.4743],[0.5289,0.4703],[0.5329,0.4663],[0.5369,0.4623],[0.5409,0.4583],[0.5448,0.4544],[0.5487,0.4505],[0.5526,0.4467],[0.5565,0.4428],[0.5603,0.4390],[0.5641,0.4353],[0.5678,0.4315],[0.5715,0.4278],[0.5752,0.4242],[0.5788,0.4206],[0.5824,0.4170],[0.5859,0.4135],[0.5894,0.4100],[0.5929,0.4065],[0.5963,0.4031],[0.5996,0.3998],[0.6029,0.3965],[0.6061,0.3933],[0.6092,0.3902],[0.6123,0.3871],[0.6154,0.3841],[0.6183,0.3811],[0.6213,0.3782],[0.6242,0.3753],[0.6270,0.3725],[0.6298,0.3697],[0.6326,0.3669],[0.6353,0.3642],[0.6380,0.3615],[0.6406,0.3589],[0.6432,0.3563],[0.6457,0.3538],[0.6482,0.3514],[0.6506,0.3490],[0.6529,0.3467],[0.6552,0.3445],[0.6574,0.3423],[0.6596,0.3401],[0.6617,0.3380],[0.6638,0.3360],[0.6658,0.3340],[0.6678,0.3320],[0.6697,0.3301],[0.6715,0.3283],[0.6733,0.3265],[0.6751,0.3247],[0.6768,0.3230],[0.6785,0.3213],[0.6801,0.3197],[0.6817,0.3181],[0.6832,0.3166],[0.6847,0.3151],[0.6861,0.3137],[0.6875,0.3123],[0.6889,0.3109],[0.6902,0.3096],[0.6915,0.3083],[0.6928,0.3070],[0.6940,0.3058],[0.6952,0.3047],[0.6963,0.3035],[0.6974,0.3024],[0.6985,0.3014],[0.6996,0.3003],[0.7006,0.2993],[0.7016,0.2983],[0.7026,0.2973],[0.7035,0.2964],[0.7044,0.2955],[0.7053,0.2946],[0.7062,0.2937],[0.7071,0.2928],[0.7079,0.2920],[0.7087,0.2912],[0.7095,0.2904],[0.7103,0.2896],[0.7111,0.2888],[0.7118,0.2881],[0.7126,0.2873],[0.7133,0.2866],[0.7140,0.2859],[0.7147,0.2852],[0.7153,0.2846],[0.7159,0.2840],[0.7164,0.2834],[0.7170,0.2829],[0.7176,0.2823],[0.7183,0.2816],[0.7190,0.2809],[0.7198,0.2801],[0.7207,0.2792],[0.7216,0.2783],[0.7226,0.2774],[0.7235,0.2765],[0.7244,0.2756],[0.7253,0.2747],[0.7260,0.2740],[0.7266,0.2734],[0.7272,0.2728],[0.7277,0.2723],[0.7282,0.2718],[0.7287,0.2713],[0.7291,0.2709],[0.7295,0.2705],[0.7300,0.2700],[0.7305,0.2695],[0.7309,0.2691],[0.7314,0.2686],[0.7319,0.2681],[0.7323,0.2677],[0.7327,0.2673],[0.7331,0.2669],[0.7334,0.2666],[0.7337,0.2663],[0.7339,0.2661],[0.7341,0.2659],[0.7343,0.2657],[0.7344,0.2656],[0.7345,0.2655],[0.7346,0.2654],[0.7347,0.2653]];
var m=document.createElement('canvas');m.width=W;m.height=H;var mc=m.getContext('2d');
mc.beginPath();for(var i=0;i<P.length;i++){var px=X0+P[i][0]*XS-L[0],py=Y0-P[i][1]*YS-L[1];if(i==0)mc.moveTo(px,py);else mc.lineTo(px,py);}mc.closePath();mc.fillStyle='#fff';mc.fill();
var o=document.createElement('canvas');o.width=W;o.height=H;var oc=o.getContext('2d');
var img=oc.createImageData(W,H);var d=img.data;
function g(v){v=Math.max(0,Math.min(1,v));return v<=0.0031308?12.92*v:1.055*Math.pow(v,1/2.4)-0.055;}
for(var j=0;j<H;j++){for(var i=0;i<W;i++){
 var k=(j*W+i)*4;
 var x=(i+L[0]+0.5-X0)/XS,y=(Y0-(j+L[1]+0.5))/YS;if(y<0.01)y=0.01;if(x<0.003)x=0.003;if(x+y>0.999){var ss=0.999/(x+y);x*=ss;y*=ss;}
 var X=x/y,Y=1,Z=(1-x-y)/y;
 var r=3.2406*X-1.5372*Y-0.4986*Z,gg=-0.9689*X+1.8758*Y+0.0415*Z,b=0.0557*X-0.2040*Y+1.0570*Z;
 r=2.0414*X-0.5649*Y-0.3447*Z;gg=-0.9693*X+1.8760*Y+0.0416*Z;b=0.0134*X-0.1184*Y+1.0154*Z;r=Math.max(r,0);gg=Math.max(gg,0);b=Math.max(b,0);var mx=Math.max(r,gg,b);if(mx<=0)mx=1;r/=mx;gg/=mx;b/=mx;r=Math.pow(r,1.3);gg=Math.pow(gg,1.3);b=Math.pow(b,1.3);
 d[k]=255*g(r);d[k+1]=255*g(gg);d[k+2]=255*g(b);d[k+3]=255;
}}
oc.putImageData(img,0,0);
ctx.filter='blur(3px)';ctx.drawImage(o,0,0);ctx.filter='none';
ctx.globalCompositeOperation='destination-in';ctx.filter='blur(0.6px)';ctx.drawImage(m,0,0);ctx.filter='none';ctx.globalCompositeOperation='source-over';
})();
</script>
</body></html>
